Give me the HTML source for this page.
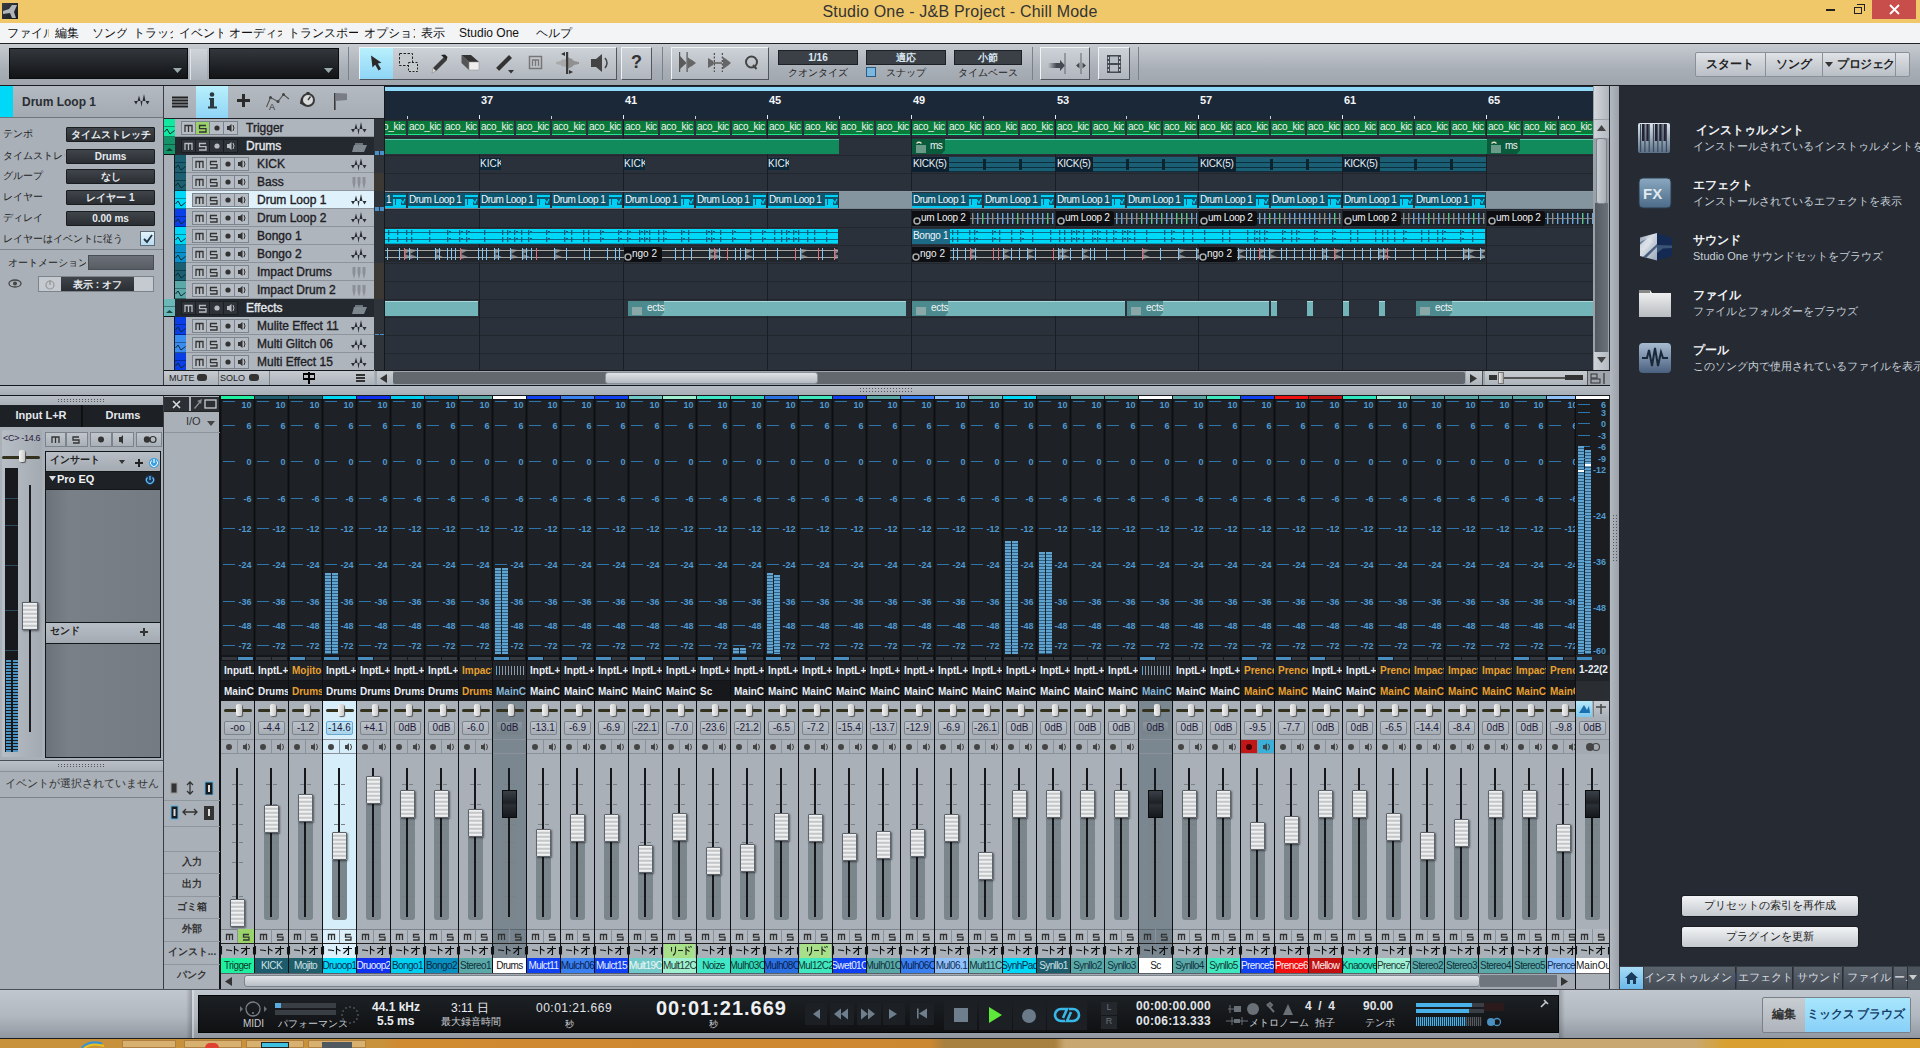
<!DOCTYPE html><html><head><meta charset="utf-8"><style>
*{margin:0;padding:0;box-sizing:border-box}
html,body{width:1920px;height:1048px;overflow:hidden;background:#a9b0b8;font-family:"Liberation Sans",sans-serif;font-size:11px;color:#000}
div{position:absolute;white-space:nowrap}
.b{font-weight:bold}

.mb{background:repeating-linear-gradient(#62a4d0 0 2px,#2e5f84 2px 3px)}
.il{background:#202327;border-bottom:1px solid #121417}
.lt{font-size:10px;font-weight:bold;overflow:hidden;line-height:13px}
.pt{background:#33321f;border-radius:2px}
.ph{background:linear-gradient(90deg,#f4f4f4,#c8c8c8);border-radius:2px;box-shadow:1px 1px 1px #555}
.vb{border-radius:2px}
.vt{font-size:10px;color:#1e1a3a;text-align:center;line-height:12px}
.fs{background:#7b858c;border-radius:0 0 3px 3px}
.hl{background:repeating-linear-gradient(#f6f6f6 0px,#e0e0e0 2px,#a8aeb4 3px,#f0f0f0 4px);border:1px solid #5c636a;border-radius:1px;box-shadow:1px 1px 2px rgba(0,0,0,.5)}
.hd{background:linear-gradient(#3a4048,#1e2226 45%,#2a3036 55%,#15181b);border:1px solid #0a0c0e}
</style></head><body><div style="left:0px;top:0px;width:1920px;height:23px;background:#f0c86a"></div>
<div style="left:2px;top:3px;width:16px;height:16px;background:linear-gradient(135deg,#3a3f47,#16191d);"></div>
<svg style="position:absolute;left:2px;top:3px" width="16" height="16"><path d="M1 8 L7 6 L10 2 L15 2 L12 9 L14 15 L10 15 L8 10 L1 11Z" fill="#c8ccd0" opacity="0.85"/></svg>
<div style="left:0px;top:3px;width:1920px;font-size:16px;color:#333;text-align:center;letter-spacing:0.2px">Studio One - J&amp;B Project - Chill Mode</div>
<div style="left:1826px;top:9px;width:9px;height:2px;background:#222"></div>
<div style="left:1854px;top:7px;width:8px;height:7px;border:1px solid #222;background:#f0c86a"></div>
<div style="left:1857px;top:4px;width:8px;height:7px;border:1px solid #222;border-left:none;border-bottom:none"></div>
<div style="left:1872px;top:0px;width:44px;height:19px;background:#c74e4b"></div>
<svg style="position:absolute;left:1889px;top:4px" width="11" height="11"><path d="M1 1 L10 10 M10 1 L1 10" stroke="#fff" stroke-width="1.8"/></svg>
<div style="left:0px;top:23px;width:1920px;height:20px;background:#f3f4f6"></div>
<div style="left:7px;top:25px;font-size:12px;color:#111;line-height:16px;overflow:hidden;width:42px">ファイル</div>
<div style="left:55px;top:25px;font-size:12px;color:#111;line-height:16px;overflow:hidden;width:31px">編集</div>
<div style="left:92px;top:25px;font-size:12px;color:#111;line-height:16px;overflow:hidden;width:35px">ソング</div>
<div style="left:133px;top:25px;font-size:12px;color:#111;line-height:16px;overflow:hidden;width:40px">トラック</div>
<div style="left:179px;top:25px;font-size:12px;color:#111;line-height:16px;overflow:hidden;width:44px">イベント</div>
<div style="left:229px;top:25px;font-size:12px;color:#111;line-height:16px;overflow:hidden;width:53px">オーディオ</div>
<div style="left:288px;top:25px;font-size:12px;color:#111;line-height:16px;overflow:hidden;width:70px">トランスポート</div>
<div style="left:364px;top:25px;font-size:12px;color:#111;line-height:16px;overflow:hidden;width:51px">オプション</div>
<div style="left:421px;top:25px;font-size:12px;color:#111;line-height:16px;overflow:hidden;width:32px">表示</div>
<div style="left:459px;top:25px;font-size:12px;color:#111;line-height:16px;overflow:hidden;width:71px">Studio One</div>
<div style="left:536px;top:25px;font-size:12px;color:#111;line-height:16px;overflow:hidden;width:40px">ヘルプ</div>
<div style="left:0px;top:43px;width:1920px;height:1px;background:#202225"></div>
<div style="left:0px;top:44px;width:1920px;height:41px;background:linear-gradient(#c6cbd1,#a9afb7 60%,#9ea5ad)"></div>
<div style="left:0px;top:85px;width:1920px;height:1px;background:#1a1c1f"></div>
<div style="left:9px;top:48px;width:179px;height:31px;background:linear-gradient(#33373d,#121416);border:1px solid #0b0c0e"></div>
<svg style="position:absolute;left:173px;top:68px" width="9" height="5"><path d="M0 0H9L4.5 5Z" fill="#9aa"/></svg>
<div style="left:209px;top:48px;width:130px;height:31px;background:linear-gradient(#33373d,#121416);border:1px solid #0b0c0e"></div>
<svg style="position:absolute;left:324px;top:68px" width="9" height="5"><path d="M0 0H9L4.5 5Z" fill="#9aa"/></svg>
<div style="left:190px;top:49px;width:17px;height:31px;background:linear-gradient(#cfd4da,#aab1b8);border-left:1px solid #e0e4e8"></div>
<div style="left:348px;top:47px;width:1px;height:33px;background:#7b8189"></div>
<div style="left:359px;top:47px;width:258px;height:33px;background:linear-gradient(#cdd2d8,#b0b6bd);border:1px solid;border-color:#f0f2f4 #50565c #50565c #f0f2f4"></div>
<div style="left:360px;top:48px;width:33px;height:31px;background:linear-gradient(#b8f0fc,#8fd4f6)"></div>
<div style="left:621px;top:47px;width:31px;height:33px;background:linear-gradient(#cdd2d8,#b0b6bd);border:1px solid;border-color:#f0f2f4 #50565c #50565c #f0f2f4"></div>
<div style="left:621px;top:52px;width:31px;font-size:18px;font-weight:bold;color:#333;text-align:center">?</div>
<div style="left:662px;top:47px;width:1px;height:33px;background:#7b8189"></div>
<div style="left:671px;top:47px;width:98px;height:33px;background:linear-gradient(#cdd2d8,#b0b6bd);border:1px solid;border-color:#f0f2f4 #50565c #50565c #f0f2f4"></div>

<svg style="position:absolute;left:360px;top:48px" width="260" height="31">
<path d="M11 7.5 L12.5 19.5 L15.2 16.8 L18.5 22.5 L21 21 L17.8 15.5 L21.5 14.8Z" fill="#2a2a2a"/>
<rect x="39.5" y="5.5" width="13" height="12" fill="#c4c9ce" stroke="#222" stroke-dasharray="2.5 1.5"/>
<rect x="48.5" y="14.5" width="9" height="9" fill="#c4c9ce" stroke="#222" stroke-dasharray="2 1.5"/>
<path d="M73 20 L84 9 L87 12 L76 23Z" fill="#3a3a3a"/><path d="M81 7 L85 6.5 L87.5 9 L86.5 12Z" fill="#222"/><path d="M73 20 L76 23 L72 25Z" fill="#ddd" stroke="#888" stroke-width="0.6"/>
<path d="M101.5 7 L111 7 L119 14 L109 14Z" fill="#333"/><path d="M101.5 7 L109 14 L109 22 L101.5 15Z" fill="#555"/><path d="M109 14 L119 14 L119 22 L109 22Z" fill="#eee" stroke="#999" stroke-width="0.6"/>
<path d="M136 20 L149 7 L152 10 L139 23Z" fill="#333"/><path d="M136 20 L139 23 L135.5 24Z" fill="#bbb"/><path d="M148 22 L154 22 L151 25.5Z" fill="#333"/>
<rect x="169.5" y="8.5" width="12" height="12" fill="none" stroke="#777" stroke-width="1.5"/><path d="M172.5 18 V12 H178.5 V18 M175.5 12 V18" stroke="#777" stroke-width="1.3" fill="none"/>
<path d="M196 14 L201 13 L201 17 L196 16Z" fill="#aaa"/><path d="M201 12 L206 11 L206 19 L201 18Z" fill="#a8a8a8"/><path d="M207 9 L212 11 L214 13 L219 14 L219 16 L214 17 L212 19 L207 21Z" fill="#909090"/><rect x="206" y="4" width="2.2" height="22" fill="#3a3a3a"/><path d="M205 4 L201 6 L205 8Z" fill="#333"/><path d="M209 22 L213 24 L209 26Z" fill="#333"/>
<path d="M231 11 L236 11 L242 6 L242 24 L236 19 L231 19Z" fill="#444"/><path d="M245 10 Q249 15 245 20" stroke="#444" stroke-width="1.5" fill="none"/>
</svg>
<svg style="position:absolute;left:671px;top:48px" width="100" height="31">
<rect x="8" y="4" width="1.2" height="20" fill="#555"/><rect x="15.5" y="4" width="1.2" height="20" fill="#555"/>
<path d="M9 8 L15.5 15 L9 21Z" fill="#5a5a5a"/><path d="M16.5 9 L19 11 L21 12 L23 13.5 L25 15 L23 16.5 L21 18 L19 19 L16.5 21Z" fill="#666"/>
<path d="M37 10 L42 13 L42 17 L37 20Z" fill="#666"/><rect x="42" y="14" width="9" height="2" fill="#777"/>
<path d="M43.3 5 V24 M51.3 5 V24" stroke="#333" stroke-width="1" stroke-dasharray="2 1.5"/>
<path d="M52 9 L55 11 L57 12.5 L60 15 L57 17.5 L55 19 L52 21Z" fill="#666"/>
<circle cx="80.5" cy="14" r="5.5" fill="none" stroke="#444" stroke-width="2"/><path d="M82 17 L85.5 21" stroke="#444" stroke-width="2"/>
</svg>

<div style="left:778px;top:50px;width:80px;height:15px;background:#3b4047;border:1px solid #1d2024"></div>
<div style="left:778px;top:50px;width:80px;color:#dce8f4;font-weight:bold;font-size:10px;text-align:center;line-height:15px">1/16</div>
<div style="left:778px;top:66px;width:80px;color:#222;font-size:10px;text-align:center">クオンタイズ</div>
<div style="left:866px;top:50px;width:80px;height:15px;background:#3b4047;border:1px solid #1d2024"></div>
<div style="left:866px;top:50px;width:80px;color:#dce8f4;font-weight:bold;font-size:10px;text-align:center;line-height:15px">適応</div>
<div style="left:866px;top:66px;width:80px;color:#222;font-size:10px;text-align:center">スナップ</div>
<div style="left:954px;top:50px;width:68px;height:15px;background:#3b4047;border:1px solid #1d2024"></div>
<div style="left:954px;top:50px;width:68px;color:#dce8f4;font-weight:bold;font-size:10px;text-align:center;line-height:15px">小節</div>
<div style="left:954px;top:66px;width:68px;color:#222;font-size:10px;text-align:center">タイムベース</div>
<div style="left:866px;top:67px;width:10px;height:10px;background:#7ab8e0;border:1px solid #2a5a80"></div>
<div style="left:1032px;top:47px;width:1px;height:33px;background:#7b8189"></div>
<div style="left:1040px;top:47px;width:50px;height:33px;background:linear-gradient(#cdd2d8,#b0b6bd);border:1px solid;border-color:#f0f2f4 #50565c #50565c #f0f2f4"></div>
<svg style="position:absolute;left:1040px;top:48px" width="50" height="31"><defs><linearGradient id="ga" x1="0" x2="1"><stop offset="0" stop-color="#454a52" stop-opacity="0"/><stop offset="0.6" stop-color="#454a52"/></linearGradient></defs><rect x="8" y="15" width="14" height="5" fill="url(#ga)"/><path d="M20 12 L25 17.5 L20 23Z" fill="#454a52"/><rect x="24.5" y="5" width="1" height="21" fill="#666"/><rect x="40.5" y="5" width="1" height="21" fill="#666"/><path d="M36 17.5 L39.5 14.5 L39.5 20.5Z M42.5 14.5 L46 17.5 L42.5 20.5Z" fill="#454a52"/></svg>
<div style="left:1098px;top:47px;width:32px;height:33px;background:linear-gradient(#cdd2d8,#b0b6bd);border:1px solid;border-color:#f0f2f4 #50565c #50565c #f0f2f4"></div>
<svg style="position:absolute;left:1098px;top:48px" width="32" height="31"><rect x="9" y="7" width="14" height="18" fill="#444a50"/><rect x="12" y="8.5" width="8" height="6.5" fill="#b8bec5"/><rect x="12" y="17" width="8" height="6.5" fill="#b8bec5"/><g fill="#c8ccd2"><rect x="9.8" y="9" width="1.2" height="2"/><rect x="9.8" y="13" width="1.2" height="2"/><rect x="9.8" y="17" width="1.2" height="2"/><rect x="9.8" y="21" width="1.2" height="2"/><rect x="21" y="9" width="1.2" height="2"/><rect x="21" y="13" width="1.2" height="2"/><rect x="21" y="17" width="1.2" height="2"/><rect x="21" y="21" width="1.2" height="2"/></g></svg>
<div style="left:1138px;top:47px;width:1px;height:33px;background:#7b8189"></div>
<div style="left:1695px;top:52px;width:215px;height:25px;background:linear-gradient(#dfe2e6,#b9bfc6);border:1px solid #8a9098;border-radius:2px"></div>
<div style="left:1765px;top:52px;width:1px;height:25px;background:#8a9098"></div>
<div style="left:1822px;top:52px;width:1px;height:25px;background:#8a9098"></div>
<div style="left:1895px;top:52px;width:1px;height:25px;background:#8a9098"></div>
<div style="left:1695px;top:56px;width:70px;font-size:12px;font-weight:bold;color:#222;text-align:center">スタート</div>
<div style="left:1766px;top:56px;width:56px;font-size:12px;font-weight:bold;color:#222;text-align:center">ソング</div>
<div style="left:1837px;top:56px;width:58px;font-size:12px;font-weight:bold;color:#222;overflow:hidden;letter-spacing:-0.5px">プロジェクト</div>
<svg style="position:absolute;left:1825px;top:62px" width="8" height="5"><path d="M0 0H8L4 5Z" fill="#333"/></svg>
<div style="left:0px;top:86px;width:164px;height:307px;background:#a9b0b8"></div>
<div style="left:0px;top:86px;width:13px;height:31px;background:#00d8f8"></div>
<div style="left:13px;top:86px;width:151px;height:31px;background:linear-gradient(#b3bac2,#a3aab2)"></div>
<div style="left:22px;top:95px;font-size:12px;font-weight:bold;color:#2a2d31">Drum Loop 1</div>
<svg style="position:absolute;left:133px;top:93px" width="18" height="15"><path d="M1 8 L5 8 L3 11.5Z M4.5 8 L6 2.5 L7.5 8Z M7.5 8 L8.5 14 L9.5 8Z M9.5 8 L11 1 L12.5 8Z M12.5 8 L16.5 8 L14.5 11.5Z" fill="#2a2e33"/></svg>
<div style="left:0px;top:117px;width:164px;height:1px;background:#6f767e"></div>
<div style="left:3px;top:127px;font-size:10px;color:#222;width:62px;overflow:hidden">テンポ</div>
<div style="left:66px;top:127px;width:89px;height:15px;background:linear-gradient(#40454b,#2a2e33);border:1px solid #1a1d20;border-radius:1px"></div>
<div style="left:66px;top:128px;width:89px;font-size:10px;font-weight:bold;color:#e6eaee;text-align:center;line-height:13px">タイムストレッチ</div>
<div style="left:3px;top:149px;font-size:10px;color:#222;width:62px;overflow:hidden">タイムストレッチ</div>
<div style="left:66px;top:149px;width:89px;height:15px;background:linear-gradient(#40454b,#2a2e33);border:1px solid #1a1d20;border-radius:1px"></div>
<div style="left:66px;top:150px;width:89px;font-size:10px;font-weight:bold;color:#e6eaee;text-align:center;line-height:13px">Drums</div>
<div style="left:3px;top:169px;font-size:10px;color:#222;width:62px;overflow:hidden">グループ</div>
<div style="left:66px;top:169px;width:89px;height:15px;background:linear-gradient(#40454b,#2a2e33);border:1px solid #1a1d20;border-radius:1px"></div>
<div style="left:66px;top:170px;width:89px;font-size:10px;font-weight:bold;color:#e6eaee;text-align:center;line-height:13px">なし</div>
<div style="left:3px;top:190px;font-size:10px;color:#222;width:62px;overflow:hidden">レイヤー</div>
<div style="left:66px;top:190px;width:89px;height:15px;background:linear-gradient(#40454b,#2a2e33);border:1px solid #1a1d20;border-radius:1px"></div>
<div style="left:66px;top:191px;width:89px;font-size:10px;font-weight:bold;color:#e6eaee;text-align:center;line-height:13px">レイヤー 1</div>
<div style="left:3px;top:211px;font-size:10px;color:#222;width:62px;overflow:hidden">ディレイ</div>
<div style="left:66px;top:211px;width:89px;height:15px;background:linear-gradient(#40454b,#2a2e33);border:1px solid #1a1d20;border-radius:1px"></div>
<div style="left:66px;top:212px;width:89px;font-size:10px;font-weight:bold;color:#e6eaee;text-align:center;line-height:13px">0.00 ms</div>
<div style="left:3px;top:232px;font-size:10px;color:#222;width:130px;overflow:hidden">レイヤーはイベントに従う</div>
<div style="left:140px;top:231px;width:15px;height:15px;background:linear-gradient(#e4f4fc,#b8dcf0);border:1px solid #5a6a78"></div>
<svg style="position:absolute;left:142px;top:233px" width="12" height="11"><path d="M2 6 L5 9 L10 2" stroke="#234" stroke-width="1.8" fill="none"/></svg>
<div style="left:0px;top:249px;width:164px;height:1px;background:#7d848c"></div>
<div style="left:8px;top:256px;font-size:10px;color:#222;width:78px;overflow:hidden">オートメーション</div>
<div style="left:88px;top:255px;width:66px;height:15px;background:linear-gradient(#6b7178,#575c62);border:1px solid #4a4f55"></div>
<svg style="position:absolute;left:8px;top:279px" width="14" height="9"><ellipse cx="7" cy="4.5" rx="6" ry="3.5" fill="none" stroke="#444" stroke-width="1.3"/><circle cx="7" cy="4.5" r="2" fill="#444"/></svg>
<div style="left:38px;top:276px;width:116px;height:16px;background:#c5cad0;border:1px solid #7c838a"></div>
<div style="left:61px;top:277px;width:73px;height:14px;background:linear-gradient(#40454b,#2a2e33)"></div>
<div style="left:61px;top:278px;width:73px;font-size:10px;font-weight:bold;color:#e6eaee;text-align:center">表示 : オフ</div>
<svg style="position:absolute;left:44px;top:279px" width="12" height="11"><circle cx="6" cy="6" r="4" fill="none" stroke="#999" stroke-width="1.2"/><rect x="5.3" y="1" width="1.4" height="5" fill="#999"/></svg>
<div style="left:163px;top:86px;width:1px;height:307px;background:#3a3e44"></div>
<div style="left:164px;top:86px;width:220px;height:32px;background:linear-gradient(#b3bac2,#a6adb5)"></div>
<div style="left:196px;top:86px;width:32px;height:32px;background:linear-gradient(#b8f0fc,#8fd4f6)"></div>
<svg style="position:absolute;left:164px;top:86px" width="220" height="32">
<rect x="8" y="10.5" width="16" height="2" fill="#222"/><rect x="8" y="13.5" width="16" height="2" fill="#222"/><rect x="8" y="16.5" width="16" height="2" fill="#222"/><rect x="8" y="19.5" width="16" height="2" fill="#222"/>
<circle cx="48" cy="8.5" r="2.3" fill="#2a3a40"/><rect x="46" y="12" width="4" height="9" fill="#2a3a40"/><rect x="44" y="20.5" width="9" height="2" fill="#2a3a40"/><rect x="45" y="12" width="3" height="1.5" fill="#2a3a40"/>
<rect x="73" y="13" width="13" height="3" fill="#2a2a2a"/><rect x="78" y="8" width="3" height="13" fill="#2a2a2a"/>
<path d="M102.5 21 L106.5 11.5 L114 15.5 L119.5 8.5 L125 13" stroke="#555" stroke-width="1.1" fill="none"/><circle cx="106.5" cy="11.5" r="1.5" fill="#444"/><circle cx="114" cy="15.5" r="1.5" fill="#444"/><circle cx="119.5" cy="8.5" r="1.5" fill="#444"/><text x="105" y="24" font-size="9" fill="#333" font-family="Liberation Sans">A</text>
<circle cx="144" cy="14" r="6" fill="#d8dadc" stroke="#3a3a3a" stroke-width="2"/><path d="M144 14 L146.5 10.5" stroke="#333" stroke-width="1.3"/><rect x="142.5" y="6" width="3" height="2" fill="#333"/><path d="M138 12 L137 17 L141 19" stroke="#333" stroke-width="2" fill="none"/>
<rect x="170" y="7" width="1.6" height="17" fill="#3a3a3a"/><path d="M171.5 7 L183 7.5 L183 14 L171.5 15Z" fill="#7a7e84"/>
</svg>
<div style="left:164px;top:118px;width:220px;height:1px;background:#1e2125"></div>
<div style="left:164px;top:119px;width:11px;height:251px;background:#a9b0b8"></div>
<div style="left:164px;top:119px;width:11px;height:18px;background:#14e8a0;border-bottom:1px solid rgba(0,0,0,.4)"></div>
<div style="left:164px;top:126px;width:11px;height:1px;background:rgba(0,0,0,.35)"></div>
<svg style="position:absolute;left:164px;top:127px" width="11" height="9"><path d="M0.5 5 L3 2 L6 7 L10.5 3.5" stroke="#0d2a30" stroke-width="1" fill="none"/></svg>
<div style="left:175px;top:119px;width:199px;height:18px;background:#aeb5bd;border-bottom:1px solid #8c939a"></div>
<div style="left:181px;top:121px;width:15px;height:14px;background:#b6bcc3;border:1px solid #7c838a"></div>
<div style="left:195px;top:121px;width:15px;height:14px;background:#9ad36a;border:1px solid #7c838a"></div>
<div style="left:209px;top:121px;width:15px;height:14px;background:#b6bcc3;border:1px solid #7c838a"></div>
<div style="left:223px;top:121px;width:15px;height:14px;background:#b6bcc3;border:1px solid #7c838a"></div>
<svg style="position:absolute;left:181px;top:121px" width="58" height="14"><path d="M4 11 V4.5 H11 V11 M7.5 4.5 V11" stroke="#333" stroke-width="1.3" fill="none"/><path d="M25 4.5 H18.5 V7.7 H25 V11 H18" stroke="#333" stroke-width="1.3" fill="none"/><circle cx="36" cy="7" r="2.6" fill="#333"/><path d="M46 5 L48 5 L50.5 3 L50.5 11 L48 9 L46 9Z" fill="#333"/><path d="M52 4 Q54 7 52 10" stroke="#333" stroke-width="1" fill="none"/></svg>
<div style="left:246px;top:121px;font-size:12px;color:#1e2024;-webkit-text-stroke:0.35px #1e2024;line-height:14px">Trigger</div>
<svg style="position:absolute;left:350px;top:121px" width="18" height="15"><path d="M1 8 L5 8 L3 11.5Z M4.5 8 L6 2.5 L7.5 8Z M7.5 8 L8.5 14 L9.5 8Z M9.5 8 L11 1 L12.5 8Z M12.5 8 L16.5 8 L14.5 11.5Z" fill="#2a2e33"/></svg>
<div style="left:164px;top:137px;width:11px;height:18px;background:#17936a;border-bottom:1px solid #0c1a14"></div>
<div style="left:164px;top:144px;width:11px;height:1px;background:rgba(0,0,0,.35)"></div>
<svg style="position:absolute;left:164px;top:145px" width="11" height="9"><path d="M2 6 L5.5 3 L9 6Z" fill="#0a2a20" opacity="0.8"/></svg>
<div style="left:175px;top:137px;width:209px;height:18px;background:#24282f"></div>
<div style="left:181px;top:139px;width:15px;height:14px;background:#2e3239;border:1px solid #1a1d21"></div>
<div style="left:195px;top:139px;width:15px;height:14px;background:#2e3239;border:1px solid #1a1d21"></div>
<div style="left:209px;top:139px;width:15px;height:14px;background:#2e3239;border:1px solid #1a1d21"></div>
<div style="left:223px;top:139px;width:15px;height:14px;background:#2e3239;border:1px solid #1a1d21"></div>
<svg style="position:absolute;left:181px;top:139px" width="58" height="14"><path d="M4 11 V4.5 H11 V11 M7.5 4.5 V11" stroke="#b8bcc0" stroke-width="1.3" fill="none"/><path d="M25 4.5 H18.5 V7.7 H25 V11 H18" stroke="#b8bcc0" stroke-width="1.3" fill="none"/><circle cx="36" cy="7" r="2.6" fill="#b8bcc0"/><path d="M46 5 L48 5 L50.5 3 L50.5 11 L48 9 L46 9Z" fill="#b8bcc0"/><path d="M52 4 Q54 7 52 10" stroke="#b8bcc0" stroke-width="1" fill="none"/></svg>
<div style="left:246px;top:139px;font-size:12px;color:#e4e8ec;-webkit-text-stroke:0.35px #e4e8ec;line-height:14px">Drums</div>
<svg style="position:absolute;left:351px;top:141px" width="18" height="12"><path d="M4 2 H12 V4 H4Z" fill="#6c747c"/><path d="M3 4 H16 L13 11 H1Z" fill="#7e868e"/></svg>
<div style="left:175px;top:155px;width:11px;height:18px;background:#1b5f70;border-bottom:1px solid rgba(0,0,0,.4)"></div>
<div style="left:175px;top:162px;width:11px;height:1px;background:rgba(0,0,0,.35)"></div>
<svg style="position:absolute;left:175px;top:163px" width="11" height="9"><path d="M0.5 5 L3 2 L6 7 L10.5 3.5" stroke="#0d2a30" stroke-width="1" fill="none"/></svg>
<div style="left:174px;top:155px;width:1px;height:18px;background:#15181c"></div>
<div style="left:186px;top:155px;width:188px;height:18px;background:#aeb5bd;border-bottom:1px solid #8c939a"></div>
<div style="left:192px;top:157px;width:15px;height:14px;background:#b6bcc3;border:1px solid #7c838a"></div>
<div style="left:206px;top:157px;width:15px;height:14px;background:#b6bcc3;border:1px solid #7c838a"></div>
<div style="left:220px;top:157px;width:15px;height:14px;background:#b6bcc3;border:1px solid #7c838a"></div>
<div style="left:234px;top:157px;width:15px;height:14px;background:#b6bcc3;border:1px solid #7c838a"></div>
<svg style="position:absolute;left:192px;top:157px" width="58" height="14"><path d="M4 11 V4.5 H11 V11 M7.5 4.5 V11" stroke="#333" stroke-width="1.3" fill="none"/><path d="M25 4.5 H18.5 V7.7 H25 V11 H18" stroke="#333" stroke-width="1.3" fill="none"/><circle cx="36" cy="7" r="2.6" fill="#333"/><path d="M46 5 L48 5 L50.5 3 L50.5 11 L48 9 L46 9Z" fill="#333"/><path d="M52 4 Q54 7 52 10" stroke="#333" stroke-width="1" fill="none"/></svg>
<div style="left:257px;top:157px;font-size:12px;color:#1e2024;-webkit-text-stroke:0.35px #1e2024;line-height:14px">KICK</div>
<svg style="position:absolute;left:350px;top:157px" width="18" height="15"><path d="M1 8 L5 8 L3 11.5Z M4.5 8 L6 2.5 L7.5 8Z M7.5 8 L8.5 14 L9.5 8Z M9.5 8 L11 1 L12.5 8Z M12.5 8 L16.5 8 L14.5 11.5Z" fill="#2a2e33"/></svg>
<div style="left:175px;top:173px;width:11px;height:18px;background:#1b5f70;border-bottom:1px solid rgba(0,0,0,.4)"></div>
<div style="left:175px;top:180px;width:11px;height:1px;background:rgba(0,0,0,.35)"></div>
<svg style="position:absolute;left:175px;top:181px" width="11" height="9"><path d="M0.5 5 L3 2 L6 7 L10.5 3.5" stroke="#0d2a30" stroke-width="1" fill="none"/></svg>
<div style="left:174px;top:173px;width:1px;height:18px;background:#15181c"></div>
<div style="left:186px;top:173px;width:188px;height:18px;background:#aeb5bd;border-bottom:1px solid #8c939a"></div>
<div style="left:192px;top:175px;width:15px;height:14px;background:#b6bcc3;border:1px solid #7c838a"></div>
<div style="left:206px;top:175px;width:15px;height:14px;background:#b6bcc3;border:1px solid #7c838a"></div>
<div style="left:220px;top:175px;width:15px;height:14px;background:#b6bcc3;border:1px solid #7c838a"></div>
<div style="left:234px;top:175px;width:15px;height:14px;background:#b6bcc3;border:1px solid #7c838a"></div>
<svg style="position:absolute;left:192px;top:175px" width="58" height="14"><path d="M4 11 V4.5 H11 V11 M7.5 4.5 V11" stroke="#333" stroke-width="1.3" fill="none"/><path d="M25 4.5 H18.5 V7.7 H25 V11 H18" stroke="#333" stroke-width="1.3" fill="none"/><circle cx="36" cy="7" r="2.6" fill="#333"/><path d="M46 5 L48 5 L50.5 3 L50.5 11 L48 9 L46 9Z" fill="#333"/><path d="M52 4 Q54 7 52 10" stroke="#333" stroke-width="1" fill="none"/></svg>
<div style="left:257px;top:175px;font-size:12px;color:#1e2024;-webkit-text-stroke:0.35px #1e2024;line-height:14px">Bass</div>
<svg style="position:absolute;left:351px;top:176px" width="18" height="14"><path d="M1.5 1 H4.5 V7 L3 13 L1.5 7Z M6.5 1 H9.5 V7 L8 13 L6.5 7Z M11.5 1 H14.5 V7 L13 13 L11.5 7Z" fill="#8a9096"/></svg>
<div style="left:175px;top:191px;width:11px;height:18px;background:#00d8f8;border-bottom:1px solid rgba(0,0,0,.4)"></div>
<div style="left:175px;top:198px;width:11px;height:1px;background:rgba(0,0,0,.35)"></div>
<svg style="position:absolute;left:175px;top:199px" width="11" height="9"><path d="M0.5 5 L3 2 L6 7 L10.5 3.5" stroke="#0d2a30" stroke-width="1" fill="none"/></svg>
<div style="left:174px;top:191px;width:1px;height:18px;background:#15181c"></div>
<div style="left:186px;top:191px;width:188px;height:18px;background:#dff2fb;border-bottom:1px solid #8c939a"></div>
<div style="left:192px;top:193px;width:15px;height:14px;background:#b6bcc3;border:1px solid #7c838a"></div>
<div style="left:206px;top:193px;width:15px;height:14px;background:#b6bcc3;border:1px solid #7c838a"></div>
<div style="left:220px;top:193px;width:15px;height:14px;background:#b6bcc3;border:1px solid #7c838a"></div>
<div style="left:234px;top:193px;width:15px;height:14px;background:#b6bcc3;border:1px solid #7c838a"></div>
<svg style="position:absolute;left:192px;top:193px" width="58" height="14"><path d="M4 11 V4.5 H11 V11 M7.5 4.5 V11" stroke="#333" stroke-width="1.3" fill="none"/><path d="M25 4.5 H18.5 V7.7 H25 V11 H18" stroke="#333" stroke-width="1.3" fill="none"/><circle cx="36" cy="7" r="2.6" fill="#333"/><path d="M46 5 L48 5 L50.5 3 L50.5 11 L48 9 L46 9Z" fill="#333"/><path d="M52 4 Q54 7 52 10" stroke="#333" stroke-width="1" fill="none"/></svg>
<div style="left:257px;top:193px;font-size:12px;color:#1e2024;-webkit-text-stroke:0.35px #1e2024;line-height:14px">Drum Loop 1</div>
<svg style="position:absolute;left:350px;top:193px" width="18" height="15"><path d="M1 8 L5 8 L3 11.5Z M4.5 8 L6 2.5 L7.5 8Z M7.5 8 L8.5 14 L9.5 8Z M9.5 8 L11 1 L12.5 8Z M12.5 8 L16.5 8 L14.5 11.5Z" fill="#2a2e33"/></svg>
<div style="left:175px;top:209px;width:11px;height:18px;background:#0a3fe8;border-bottom:1px solid rgba(0,0,0,.4)"></div>
<div style="left:175px;top:216px;width:11px;height:1px;background:rgba(0,0,0,.35)"></div>
<svg style="position:absolute;left:175px;top:217px" width="11" height="9"><path d="M0.5 5 L3 2 L6 7 L10.5 3.5" stroke="#0d2a30" stroke-width="1" fill="none"/></svg>
<div style="left:174px;top:209px;width:1px;height:18px;background:#15181c"></div>
<div style="left:186px;top:209px;width:188px;height:18px;background:#aeb5bd;border-bottom:1px solid #8c939a"></div>
<div style="left:192px;top:211px;width:15px;height:14px;background:#b6bcc3;border:1px solid #7c838a"></div>
<div style="left:206px;top:211px;width:15px;height:14px;background:#b6bcc3;border:1px solid #7c838a"></div>
<div style="left:220px;top:211px;width:15px;height:14px;background:#b6bcc3;border:1px solid #7c838a"></div>
<div style="left:234px;top:211px;width:15px;height:14px;background:#b6bcc3;border:1px solid #7c838a"></div>
<svg style="position:absolute;left:192px;top:211px" width="58" height="14"><path d="M4 11 V4.5 H11 V11 M7.5 4.5 V11" stroke="#333" stroke-width="1.3" fill="none"/><path d="M25 4.5 H18.5 V7.7 H25 V11 H18" stroke="#333" stroke-width="1.3" fill="none"/><circle cx="36" cy="7" r="2.6" fill="#333"/><path d="M46 5 L48 5 L50.5 3 L50.5 11 L48 9 L46 9Z" fill="#333"/><path d="M52 4 Q54 7 52 10" stroke="#333" stroke-width="1" fill="none"/></svg>
<div style="left:257px;top:211px;font-size:12px;color:#1e2024;-webkit-text-stroke:0.35px #1e2024;line-height:14px">Drum Loop 2</div>
<svg style="position:absolute;left:350px;top:211px" width="18" height="15"><path d="M1 8 L5 8 L3 11.5Z M4.5 8 L6 2.5 L7.5 8Z M7.5 8 L8.5 14 L9.5 8Z M9.5 8 L11 1 L12.5 8Z M12.5 8 L16.5 8 L14.5 11.5Z" fill="#2a2e33"/></svg>
<div style="left:175px;top:227px;width:11px;height:18px;background:#00d8f8;border-bottom:1px solid rgba(0,0,0,.4)"></div>
<div style="left:175px;top:234px;width:11px;height:1px;background:rgba(0,0,0,.35)"></div>
<svg style="position:absolute;left:175px;top:235px" width="11" height="9"><path d="M0.5 5 L3 2 L6 7 L10.5 3.5" stroke="#0d2a30" stroke-width="1" fill="none"/></svg>
<div style="left:174px;top:227px;width:1px;height:18px;background:#15181c"></div>
<div style="left:186px;top:227px;width:188px;height:18px;background:#aeb5bd;border-bottom:1px solid #8c939a"></div>
<div style="left:192px;top:229px;width:15px;height:14px;background:#b6bcc3;border:1px solid #7c838a"></div>
<div style="left:206px;top:229px;width:15px;height:14px;background:#b6bcc3;border:1px solid #7c838a"></div>
<div style="left:220px;top:229px;width:15px;height:14px;background:#b6bcc3;border:1px solid #7c838a"></div>
<div style="left:234px;top:229px;width:15px;height:14px;background:#b6bcc3;border:1px solid #7c838a"></div>
<svg style="position:absolute;left:192px;top:229px" width="58" height="14"><path d="M4 11 V4.5 H11 V11 M7.5 4.5 V11" stroke="#333" stroke-width="1.3" fill="none"/><path d="M25 4.5 H18.5 V7.7 H25 V11 H18" stroke="#333" stroke-width="1.3" fill="none"/><circle cx="36" cy="7" r="2.6" fill="#333"/><path d="M46 5 L48 5 L50.5 3 L50.5 11 L48 9 L46 9Z" fill="#333"/><path d="M52 4 Q54 7 52 10" stroke="#333" stroke-width="1" fill="none"/></svg>
<div style="left:257px;top:229px;font-size:12px;color:#1e2024;-webkit-text-stroke:0.35px #1e2024;line-height:14px">Bongo 1</div>
<svg style="position:absolute;left:350px;top:229px" width="18" height="15"><path d="M1 8 L5 8 L3 11.5Z M4.5 8 L6 2.5 L7.5 8Z M7.5 8 L8.5 14 L9.5 8Z M9.5 8 L11 1 L12.5 8Z M12.5 8 L16.5 8 L14.5 11.5Z" fill="#2a2e33"/></svg>
<div style="left:175px;top:245px;width:11px;height:18px;background:#0a90c8;border-bottom:1px solid rgba(0,0,0,.4)"></div>
<div style="left:175px;top:252px;width:11px;height:1px;background:rgba(0,0,0,.35)"></div>
<svg style="position:absolute;left:175px;top:253px" width="11" height="9"><path d="M0.5 5 L3 2 L6 7 L10.5 3.5" stroke="#0d2a30" stroke-width="1" fill="none"/></svg>
<div style="left:174px;top:245px;width:1px;height:18px;background:#15181c"></div>
<div style="left:186px;top:245px;width:188px;height:18px;background:#aeb5bd;border-bottom:1px solid #8c939a"></div>
<div style="left:192px;top:247px;width:15px;height:14px;background:#b6bcc3;border:1px solid #7c838a"></div>
<div style="left:206px;top:247px;width:15px;height:14px;background:#b6bcc3;border:1px solid #7c838a"></div>
<div style="left:220px;top:247px;width:15px;height:14px;background:#b6bcc3;border:1px solid #7c838a"></div>
<div style="left:234px;top:247px;width:15px;height:14px;background:#b6bcc3;border:1px solid #7c838a"></div>
<svg style="position:absolute;left:192px;top:247px" width="58" height="14"><path d="M4 11 V4.5 H11 V11 M7.5 4.5 V11" stroke="#333" stroke-width="1.3" fill="none"/><path d="M25 4.5 H18.5 V7.7 H25 V11 H18" stroke="#333" stroke-width="1.3" fill="none"/><circle cx="36" cy="7" r="2.6" fill="#333"/><path d="M46 5 L48 5 L50.5 3 L50.5 11 L48 9 L46 9Z" fill="#333"/><path d="M52 4 Q54 7 52 10" stroke="#333" stroke-width="1" fill="none"/></svg>
<div style="left:257px;top:247px;font-size:12px;color:#1e2024;-webkit-text-stroke:0.35px #1e2024;line-height:14px">Bongo 2</div>
<svg style="position:absolute;left:350px;top:247px" width="18" height="15"><path d="M1 8 L5 8 L3 11.5Z M4.5 8 L6 2.5 L7.5 8Z M7.5 8 L8.5 14 L9.5 8Z M9.5 8 L11 1 L12.5 8Z M12.5 8 L16.5 8 L14.5 11.5Z" fill="#2a2e33"/></svg>
<div style="left:175px;top:263px;width:11px;height:18px;background:#1b5f70;border-bottom:1px solid rgba(0,0,0,.4)"></div>
<div style="left:175px;top:270px;width:11px;height:1px;background:rgba(0,0,0,.35)"></div>
<svg style="position:absolute;left:175px;top:271px" width="11" height="9"><path d="M0.5 5 L3 2 L6 7 L10.5 3.5" stroke="#0d2a30" stroke-width="1" fill="none"/></svg>
<div style="left:174px;top:263px;width:1px;height:18px;background:#15181c"></div>
<div style="left:186px;top:263px;width:188px;height:18px;background:#aeb5bd;border-bottom:1px solid #8c939a"></div>
<div style="left:192px;top:265px;width:15px;height:14px;background:#b6bcc3;border:1px solid #7c838a"></div>
<div style="left:206px;top:265px;width:15px;height:14px;background:#b6bcc3;border:1px solid #7c838a"></div>
<div style="left:220px;top:265px;width:15px;height:14px;background:#b6bcc3;border:1px solid #7c838a"></div>
<div style="left:234px;top:265px;width:15px;height:14px;background:#b6bcc3;border:1px solid #7c838a"></div>
<svg style="position:absolute;left:192px;top:265px" width="58" height="14"><path d="M4 11 V4.5 H11 V11 M7.5 4.5 V11" stroke="#333" stroke-width="1.3" fill="none"/><path d="M25 4.5 H18.5 V7.7 H25 V11 H18" stroke="#333" stroke-width="1.3" fill="none"/><circle cx="36" cy="7" r="2.6" fill="#333"/><path d="M46 5 L48 5 L50.5 3 L50.5 11 L48 9 L46 9Z" fill="#333"/><path d="M52 4 Q54 7 52 10" stroke="#333" stroke-width="1" fill="none"/></svg>
<div style="left:257px;top:265px;font-size:12px;color:#1e2024;-webkit-text-stroke:0.35px #1e2024;line-height:14px">Impact Drums</div>
<svg style="position:absolute;left:351px;top:266px" width="18" height="14"><path d="M1.5 1 H4.5 V7 L3 13 L1.5 7Z M6.5 1 H9.5 V7 L8 13 L6.5 7Z M11.5 1 H14.5 V7 L13 13 L11.5 7Z" fill="#8a9096"/></svg>
<div style="left:175px;top:281px;width:11px;height:18px;background:#5aa8a8;border-bottom:1px solid rgba(0,0,0,.4)"></div>
<div style="left:175px;top:288px;width:11px;height:1px;background:rgba(0,0,0,.35)"></div>
<svg style="position:absolute;left:175px;top:289px" width="11" height="9"><path d="M0.5 5 L3 2 L6 7 L10.5 3.5" stroke="#0d2a30" stroke-width="1" fill="none"/></svg>
<div style="left:174px;top:281px;width:1px;height:18px;background:#15181c"></div>
<div style="left:186px;top:281px;width:188px;height:18px;background:#aeb5bd;border-bottom:1px solid #8c939a"></div>
<div style="left:192px;top:283px;width:15px;height:14px;background:#b6bcc3;border:1px solid #7c838a"></div>
<div style="left:206px;top:283px;width:15px;height:14px;background:#b6bcc3;border:1px solid #7c838a"></div>
<div style="left:220px;top:283px;width:15px;height:14px;background:#b6bcc3;border:1px solid #7c838a"></div>
<div style="left:234px;top:283px;width:15px;height:14px;background:#b6bcc3;border:1px solid #7c838a"></div>
<svg style="position:absolute;left:192px;top:283px" width="58" height="14"><path d="M4 11 V4.5 H11 V11 M7.5 4.5 V11" stroke="#333" stroke-width="1.3" fill="none"/><path d="M25 4.5 H18.5 V7.7 H25 V11 H18" stroke="#333" stroke-width="1.3" fill="none"/><circle cx="36" cy="7" r="2.6" fill="#333"/><path d="M46 5 L48 5 L50.5 3 L50.5 11 L48 9 L46 9Z" fill="#333"/><path d="M52 4 Q54 7 52 10" stroke="#333" stroke-width="1" fill="none"/></svg>
<div style="left:257px;top:283px;font-size:12px;color:#1e2024;-webkit-text-stroke:0.35px #1e2024;line-height:14px">Impact Drum 2</div>
<svg style="position:absolute;left:351px;top:284px" width="18" height="14"><path d="M1.5 1 H4.5 V7 L3 13 L1.5 7Z M6.5 1 H9.5 V7 L8 13 L6.5 7Z M11.5 1 H14.5 V7 L13 13 L11.5 7Z" fill="#8a9096"/></svg>
<div style="left:164px;top:299px;width:11px;height:18px;background:#6ab8b8;border-bottom:1px solid #0c1a14"></div>
<div style="left:164px;top:306px;width:11px;height:1px;background:rgba(0,0,0,.35)"></div>
<svg style="position:absolute;left:164px;top:307px" width="11" height="9"><path d="M2 6 L5.5 3 L9 6Z" fill="#0a2a20" opacity="0.8"/></svg>
<div style="left:175px;top:299px;width:209px;height:18px;background:#24282f"></div>
<div style="left:181px;top:301px;width:15px;height:14px;background:#2e3239;border:1px solid #1a1d21"></div>
<div style="left:195px;top:301px;width:15px;height:14px;background:#2e3239;border:1px solid #1a1d21"></div>
<div style="left:209px;top:301px;width:15px;height:14px;background:#2e3239;border:1px solid #1a1d21"></div>
<div style="left:223px;top:301px;width:15px;height:14px;background:#2e3239;border:1px solid #1a1d21"></div>
<svg style="position:absolute;left:181px;top:301px" width="58" height="14"><path d="M4 11 V4.5 H11 V11 M7.5 4.5 V11" stroke="#b8bcc0" stroke-width="1.3" fill="none"/><path d="M25 4.5 H18.5 V7.7 H25 V11 H18" stroke="#b8bcc0" stroke-width="1.3" fill="none"/><circle cx="36" cy="7" r="2.6" fill="#b8bcc0"/><path d="M46 5 L48 5 L50.5 3 L50.5 11 L48 9 L46 9Z" fill="#b8bcc0"/><path d="M52 4 Q54 7 52 10" stroke="#b8bcc0" stroke-width="1" fill="none"/></svg>
<div style="left:246px;top:301px;font-size:12px;color:#e4e8ec;-webkit-text-stroke:0.35px #e4e8ec;line-height:14px">Effects</div>
<svg style="position:absolute;left:351px;top:303px" width="18" height="12"><path d="M4 2 H12 V4 H4Z" fill="#6c747c"/><path d="M3 4 H16 L13 11 H1Z" fill="#7e868e"/></svg>
<div style="left:175px;top:317px;width:11px;height:18px;background:#0a3fe8;border-bottom:1px solid rgba(0,0,0,.4)"></div>
<div style="left:175px;top:324px;width:11px;height:1px;background:rgba(0,0,0,.35)"></div>
<svg style="position:absolute;left:175px;top:325px" width="11" height="9"><path d="M0.5 5 L3 2 L6 7 L10.5 3.5" stroke="#0d2a30" stroke-width="1" fill="none"/></svg>
<div style="left:174px;top:317px;width:1px;height:18px;background:#15181c"></div>
<div style="left:186px;top:317px;width:188px;height:18px;background:#aeb5bd;border-bottom:1px solid #8c939a"></div>
<div style="left:192px;top:319px;width:15px;height:14px;background:#b6bcc3;border:1px solid #7c838a"></div>
<div style="left:206px;top:319px;width:15px;height:14px;background:#b6bcc3;border:1px solid #7c838a"></div>
<div style="left:220px;top:319px;width:15px;height:14px;background:#b6bcc3;border:1px solid #7c838a"></div>
<div style="left:234px;top:319px;width:15px;height:14px;background:#b6bcc3;border:1px solid #7c838a"></div>
<svg style="position:absolute;left:192px;top:319px" width="58" height="14"><path d="M4 11 V4.5 H11 V11 M7.5 4.5 V11" stroke="#333" stroke-width="1.3" fill="none"/><path d="M25 4.5 H18.5 V7.7 H25 V11 H18" stroke="#333" stroke-width="1.3" fill="none"/><circle cx="36" cy="7" r="2.6" fill="#333"/><path d="M46 5 L48 5 L50.5 3 L50.5 11 L48 9 L46 9Z" fill="#333"/><path d="M52 4 Q54 7 52 10" stroke="#333" stroke-width="1" fill="none"/></svg>
<div style="left:257px;top:319px;font-size:12px;color:#1e2024;-webkit-text-stroke:0.35px #1e2024;line-height:14px">Mulite Effect 11</div>
<svg style="position:absolute;left:350px;top:319px" width="18" height="15"><path d="M1 8 L5 8 L3 11.5Z M4.5 8 L6 2.5 L7.5 8Z M7.5 8 L8.5 14 L9.5 8Z M9.5 8 L11 1 L12.5 8Z M12.5 8 L16.5 8 L14.5 11.5Z" fill="#2a2e33"/></svg>
<div style="left:175px;top:335px;width:11px;height:18px;background:#3a8cf0;border-bottom:1px solid rgba(0,0,0,.4)"></div>
<div style="left:175px;top:342px;width:11px;height:1px;background:rgba(0,0,0,.35)"></div>
<svg style="position:absolute;left:175px;top:343px" width="11" height="9"><path d="M0.5 5 L3 2 L6 7 L10.5 3.5" stroke="#0d2a30" stroke-width="1" fill="none"/></svg>
<div style="left:174px;top:335px;width:1px;height:18px;background:#15181c"></div>
<div style="left:186px;top:335px;width:188px;height:18px;background:#aeb5bd;border-bottom:1px solid #8c939a"></div>
<div style="left:192px;top:337px;width:15px;height:14px;background:#b6bcc3;border:1px solid #7c838a"></div>
<div style="left:206px;top:337px;width:15px;height:14px;background:#b6bcc3;border:1px solid #7c838a"></div>
<div style="left:220px;top:337px;width:15px;height:14px;background:#b6bcc3;border:1px solid #7c838a"></div>
<div style="left:234px;top:337px;width:15px;height:14px;background:#b6bcc3;border:1px solid #7c838a"></div>
<svg style="position:absolute;left:192px;top:337px" width="58" height="14"><path d="M4 11 V4.5 H11 V11 M7.5 4.5 V11" stroke="#333" stroke-width="1.3" fill="none"/><path d="M25 4.5 H18.5 V7.7 H25 V11 H18" stroke="#333" stroke-width="1.3" fill="none"/><circle cx="36" cy="7" r="2.6" fill="#333"/><path d="M46 5 L48 5 L50.5 3 L50.5 11 L48 9 L46 9Z" fill="#333"/><path d="M52 4 Q54 7 52 10" stroke="#333" stroke-width="1" fill="none"/></svg>
<div style="left:257px;top:337px;font-size:12px;color:#1e2024;-webkit-text-stroke:0.35px #1e2024;line-height:14px">Multi Glitch 06</div>
<svg style="position:absolute;left:350px;top:337px" width="18" height="15"><path d="M1 8 L5 8 L3 11.5Z M4.5 8 L6 2.5 L7.5 8Z M7.5 8 L8.5 14 L9.5 8Z M9.5 8 L11 1 L12.5 8Z M12.5 8 L16.5 8 L14.5 11.5Z" fill="#2a2e33"/></svg>
<div style="left:175px;top:353px;width:11px;height:18px;background:#0a3fe8;border-bottom:1px solid rgba(0,0,0,.4)"></div>
<div style="left:175px;top:360px;width:11px;height:1px;background:rgba(0,0,0,.35)"></div>
<svg style="position:absolute;left:175px;top:361px" width="11" height="9"><path d="M0.5 5 L3 2 L6 7 L10.5 3.5" stroke="#0d2a30" stroke-width="1" fill="none"/></svg>
<div style="left:174px;top:353px;width:1px;height:18px;background:#15181c"></div>
<div style="left:186px;top:353px;width:188px;height:18px;background:#aeb5bd;border-bottom:1px solid #8c939a"></div>
<div style="left:192px;top:355px;width:15px;height:14px;background:#b6bcc3;border:1px solid #7c838a"></div>
<div style="left:206px;top:355px;width:15px;height:14px;background:#b6bcc3;border:1px solid #7c838a"></div>
<div style="left:220px;top:355px;width:15px;height:14px;background:#b6bcc3;border:1px solid #7c838a"></div>
<div style="left:234px;top:355px;width:15px;height:14px;background:#b6bcc3;border:1px solid #7c838a"></div>
<svg style="position:absolute;left:192px;top:355px" width="58" height="14"><path d="M4 11 V4.5 H11 V11 M7.5 4.5 V11" stroke="#333" stroke-width="1.3" fill="none"/><path d="M25 4.5 H18.5 V7.7 H25 V11 H18" stroke="#333" stroke-width="1.3" fill="none"/><circle cx="36" cy="7" r="2.6" fill="#333"/><path d="M46 5 L48 5 L50.5 3 L50.5 11 L48 9 L46 9Z" fill="#333"/><path d="M52 4 Q54 7 52 10" stroke="#333" stroke-width="1" fill="none"/></svg>
<div style="left:257px;top:355px;font-size:12px;color:#1e2024;-webkit-text-stroke:0.35px #1e2024;line-height:14px">Multi Effect 15</div>
<svg style="position:absolute;left:350px;top:355px" width="18" height="15"><path d="M1 8 L5 8 L3 11.5Z M4.5 8 L6 2.5 L7.5 8Z M7.5 8 L8.5 14 L9.5 8Z M9.5 8 L11 1 L12.5 8Z M12.5 8 L16.5 8 L14.5 11.5Z" fill="#2a2e33"/></svg>
<div style="left:374px;top:119px;width:11px;height:251px;background:#2f343b"></div>
<div style="left:374px;top:173px;width:11px;height:18px;background:#3c3833"></div>
<div style="left:374px;top:263px;width:11px;height:18px;background:#3c3833"></div>
<div style="left:374px;top:281px;width:11px;height:18px;background:#3c3833"></div>
<div style="left:384px;top:86px;width:1px;height:284px;background:#15181c"></div>
<div style="left:164px;top:370px;width:210px;height:1px;background:#15181c"></div>
<div style="left:164px;top:371px;width:210px;height:15px;background:linear-gradient(#c6cbd1,#a9b0b7)"></div>
<div style="left:169px;top:373px;font-size:9px;color:#222;font-family:"Liberation Mono",monospace">MUTE</div>
<div style="left:197px;top:374px;width:10px;height:7px;background:#333;border-radius:3px"></div>
<div style="left:218px;top:371px;width:1px;height:15px;background:#7d848c"></div>
<div style="left:220px;top:373px;font-size:9px;color:#222;font-family:"Liberation Mono",monospace">SOLO</div>
<div style="left:249px;top:374px;width:10px;height:7px;background:#333;border-radius:3px"></div>
<div style="left:269px;top:371px;width:1px;height:15px;background:#7d848c"></div>
<svg style="position:absolute;left:303px;top:372px" width="12" height="12"><rect x="0" y="2" width="12" height="5" fill="none" stroke="#000" stroke-width="2"/><rect x="5" y="0" width="2" height="12" fill="#000"/></svg>
<svg style="position:absolute;left:356px;top:374px" width="10" height="9"><rect x="0" y="0" width="9" height="2" fill="#333"/><rect x="0" y="3" width="9" height="2" fill="#333"/><rect x="0" y="6" width="9" height="2" fill="#333"/></svg>
<div style="left:375px;top:151px;width:4px;height:4px;background:#4a90c8"></div>
<div style="left:380px;top:151px;width:4px;height:4px;background:#4a90c8"></div>
<div style="left:375px;top:207px;width:4px;height:4px;background:#4a90c8"></div>
<div style="left:380px;top:207px;width:4px;height:4px;background:#4a90c8"></div>
<div style="left:375px;top:334px;width:4px;height:1px;background:#4a90c8"></div>
<div style="left:380px;top:334px;width:4px;height:1px;background:#4a90c8"></div>
<div style="left:385px;top:86px;width:1208px;height:33px;background:#1b2838"></div>
<div style="left:385px;top:87px;width:1208px;height:4px;background:#8fd8f8"></div>
<div style="left:407px;top:116px;width:1px;height:3px;background:#c8d0d8"></div>
<div style="left:479px;top:115px;width:1px;height:4px;background:#e8ecf0"></div>
<div style="left:481px;top:94px;font-size:11px;font-weight:bold;color:#f4f6f8">37</div>
<div style="left:551px;top:116px;width:1px;height:3px;background:#c8d0d8"></div>
<div style="left:623px;top:115px;width:1px;height:4px;background:#e8ecf0"></div>
<div style="left:625px;top:94px;font-size:11px;font-weight:bold;color:#f4f6f8">41</div>
<div style="left:695px;top:116px;width:1px;height:3px;background:#c8d0d8"></div>
<div style="left:767px;top:115px;width:1px;height:4px;background:#e8ecf0"></div>
<div style="left:769px;top:94px;font-size:11px;font-weight:bold;color:#f4f6f8">45</div>
<div style="left:839px;top:116px;width:1px;height:3px;background:#c8d0d8"></div>
<div style="left:911px;top:115px;width:1px;height:4px;background:#e8ecf0"></div>
<div style="left:913px;top:94px;font-size:11px;font-weight:bold;color:#f4f6f8">49</div>
<div style="left:983px;top:116px;width:1px;height:3px;background:#c8d0d8"></div>
<div style="left:1055px;top:115px;width:1px;height:4px;background:#e8ecf0"></div>
<div style="left:1057px;top:94px;font-size:11px;font-weight:bold;color:#f4f6f8">53</div>
<div style="left:1126px;top:116px;width:1px;height:3px;background:#c8d0d8"></div>
<div style="left:1198px;top:115px;width:1px;height:4px;background:#e8ecf0"></div>
<div style="left:1200px;top:94px;font-size:11px;font-weight:bold;color:#f4f6f8">57</div>
<div style="left:1270px;top:116px;width:1px;height:3px;background:#c8d0d8"></div>
<div style="left:1342px;top:115px;width:1px;height:4px;background:#e8ecf0"></div>
<div style="left:1344px;top:94px;font-size:11px;font-weight:bold;color:#f4f6f8">61</div>
<div style="left:1414px;top:116px;width:1px;height:3px;background:#c8d0d8"></div>
<div style="left:1486px;top:115px;width:1px;height:4px;background:#e8ecf0"></div>
<div style="left:1488px;top:94px;font-size:11px;font-weight:bold;color:#f4f6f8">65</div>
<div style="left:1558px;top:116px;width:1px;height:3px;background:#c8d0d8"></div>
<div style="left:385px;top:119px;width:1208px;height:251px;overflow:hidden;">
<div style="left:0px;top:0px;width:1208px;height:251px;background:#2b313b"></div>
<div style="left:0px;top:0px;width:1208px;height:1px;background:#22272e"></div>
<div style="left:0px;top:18px;width:1208px;height:1px;background:#22272e"></div>
<div style="left:0px;top:36px;width:1208px;height:1px;background:#22272e"></div>
<div style="left:0px;top:54px;width:1208px;height:1px;background:#22272e"></div>
<div style="left:0px;top:72px;width:1208px;height:1px;background:#22272e"></div>
<div style="left:0px;top:90px;width:1208px;height:1px;background:#22272e"></div>
<div style="left:0px;top:108px;width:1208px;height:1px;background:#22272e"></div>
<div style="left:0px;top:126px;width:1208px;height:1px;background:#22272e"></div>
<div style="left:0px;top:144px;width:1208px;height:1px;background:#22272e"></div>
<div style="left:0px;top:162px;width:1208px;height:1px;background:#22272e"></div>
<div style="left:0px;top:180px;width:1208px;height:1px;background:#22272e"></div>
<div style="left:0px;top:198px;width:1208px;height:1px;background:#22272e"></div>
<div style="left:0px;top:216px;width:1208px;height:1px;background:#22272e"></div>
<div style="left:0px;top:234px;width:1208px;height:1px;background:#22272e"></div>
<div style="left:94px;top:0px;width:1px;height:251px;background:#1a1e24"></div>
<div style="left:238px;top:0px;width:1px;height:251px;background:#1a1e24"></div>
<div style="left:382px;top:0px;width:1px;height:251px;background:#1a1e24"></div>
<div style="left:526px;top:0px;width:1px;height:251px;background:#1a1e24"></div>
<div style="left:670px;top:0px;width:1px;height:251px;background:#1a1e24"></div>
<div style="left:813px;top:0px;width:1px;height:251px;background:#1a1e24"></div>
<div style="left:957px;top:0px;width:1px;height:251px;background:#1a1e24"></div>
<div style="left:1101px;top:0px;width:1px;height:251px;background:#1a1e24"></div>
<div style="left:454px;top:73px;width:73px;height:17px;background:#8595a0"></div>
<div style="left:1101px;top:73px;width:107px;height:17px;background:#8595a0"></div>
<div style="left:-13px;top:2px;width:34px;height:14px;background:#0a7a3a;border-bottom:1px solid #20e890;overflow:hidden"></div>
<div style="left:-12px;top:2px;font-size:10px;letter-spacing:-0.3px;color:#f0f4f0;line-height:12px;width:32px;overflow:hidden">aco_kick</div>
<div style="left:23px;top:2px;width:34px;height:14px;background:#0a7a3a;border-bottom:1px solid #20e890;overflow:hidden"></div>
<div style="left:24px;top:2px;font-size:10px;letter-spacing:-0.3px;color:#f0f4f0;line-height:12px;width:32px;overflow:hidden">aco_kick</div>
<div style="left:59px;top:2px;width:34px;height:14px;background:#0a7a3a;border-bottom:1px solid #20e890;overflow:hidden"></div>
<div style="left:60px;top:2px;font-size:10px;letter-spacing:-0.3px;color:#f0f4f0;line-height:12px;width:32px;overflow:hidden">aco_kick</div>
<div style="left:95px;top:2px;width:34px;height:14px;background:#0a7a3a;border-bottom:1px solid #20e890;overflow:hidden"></div>
<div style="left:96px;top:2px;font-size:10px;letter-spacing:-0.3px;color:#f0f4f0;line-height:12px;width:32px;overflow:hidden">aco_kick</div>
<div style="left:131px;top:2px;width:34px;height:14px;background:#0a7a3a;border-bottom:1px solid #20e890;overflow:hidden"></div>
<div style="left:132px;top:2px;font-size:10px;letter-spacing:-0.3px;color:#f0f4f0;line-height:12px;width:32px;overflow:hidden">aco_kick</div>
<div style="left:167px;top:2px;width:34px;height:14px;background:#0a7a3a;border-bottom:1px solid #20e890;overflow:hidden"></div>
<div style="left:168px;top:2px;font-size:10px;letter-spacing:-0.3px;color:#f0f4f0;line-height:12px;width:32px;overflow:hidden">aco_kick</div>
<div style="left:203px;top:2px;width:34px;height:14px;background:#0a7a3a;border-bottom:1px solid #20e890;overflow:hidden"></div>
<div style="left:204px;top:2px;font-size:10px;letter-spacing:-0.3px;color:#f0f4f0;line-height:12px;width:32px;overflow:hidden">aco_kick</div>
<div style="left:239px;top:2px;width:34px;height:14px;background:#0a7a3a;border-bottom:1px solid #20e890;overflow:hidden"></div>
<div style="left:240px;top:2px;font-size:10px;letter-spacing:-0.3px;color:#f0f4f0;line-height:12px;width:32px;overflow:hidden">aco_kick</div>
<div style="left:275px;top:2px;width:34px;height:14px;background:#0a7a3a;border-bottom:1px solid #20e890;overflow:hidden"></div>
<div style="left:276px;top:2px;font-size:10px;letter-spacing:-0.3px;color:#f0f4f0;line-height:12px;width:32px;overflow:hidden">aco_kick</div>
<div style="left:311px;top:2px;width:34px;height:14px;background:#0a7a3a;border-bottom:1px solid #20e890;overflow:hidden"></div>
<div style="left:312px;top:2px;font-size:10px;letter-spacing:-0.3px;color:#f0f4f0;line-height:12px;width:32px;overflow:hidden">aco_kick</div>
<div style="left:347px;top:2px;width:34px;height:14px;background:#0a7a3a;border-bottom:1px solid #20e890;overflow:hidden"></div>
<div style="left:348px;top:2px;font-size:10px;letter-spacing:-0.3px;color:#f0f4f0;line-height:12px;width:32px;overflow:hidden">aco_kick</div>
<div style="left:383px;top:2px;width:34px;height:14px;background:#0a7a3a;border-bottom:1px solid #20e890;overflow:hidden"></div>
<div style="left:384px;top:2px;font-size:10px;letter-spacing:-0.3px;color:#f0f4f0;line-height:12px;width:32px;overflow:hidden">aco_kick</div>
<div style="left:419px;top:2px;width:34px;height:14px;background:#0a7a3a;border-bottom:1px solid #20e890;overflow:hidden"></div>
<div style="left:420px;top:2px;font-size:10px;letter-spacing:-0.3px;color:#f0f4f0;line-height:12px;width:32px;overflow:hidden">aco_kick</div>
<div style="left:455px;top:2px;width:34px;height:14px;background:#0a7a3a;border-bottom:1px solid #20e890;overflow:hidden"></div>
<div style="left:456px;top:2px;font-size:10px;letter-spacing:-0.3px;color:#f0f4f0;line-height:12px;width:32px;overflow:hidden">aco_kick</div>
<div style="left:491px;top:2px;width:34px;height:14px;background:#0a7a3a;border-bottom:1px solid #20e890;overflow:hidden"></div>
<div style="left:492px;top:2px;font-size:10px;letter-spacing:-0.3px;color:#f0f4f0;line-height:12px;width:32px;overflow:hidden">aco_kick</div>
<div style="left:527px;top:2px;width:34px;height:14px;background:#0a7a3a;border-bottom:1px solid #20e890;overflow:hidden"></div>
<div style="left:528px;top:2px;font-size:10px;letter-spacing:-0.3px;color:#f0f4f0;line-height:12px;width:32px;overflow:hidden">aco_kick</div>
<div style="left:563px;top:2px;width:34px;height:14px;background:#0a7a3a;border-bottom:1px solid #20e890;overflow:hidden"></div>
<div style="left:564px;top:2px;font-size:10px;letter-spacing:-0.3px;color:#f0f4f0;line-height:12px;width:32px;overflow:hidden">aco_kick</div>
<div style="left:599px;top:2px;width:34px;height:14px;background:#0a7a3a;border-bottom:1px solid #20e890;overflow:hidden"></div>
<div style="left:600px;top:2px;font-size:10px;letter-spacing:-0.3px;color:#f0f4f0;line-height:12px;width:32px;overflow:hidden">aco_kick</div>
<div style="left:635px;top:2px;width:34px;height:14px;background:#0a7a3a;border-bottom:1px solid #20e890;overflow:hidden"></div>
<div style="left:636px;top:2px;font-size:10px;letter-spacing:-0.3px;color:#f0f4f0;line-height:12px;width:32px;overflow:hidden">aco_kick</div>
<div style="left:671px;top:2px;width:34px;height:14px;background:#0a7a3a;border-bottom:1px solid #20e890;overflow:hidden"></div>
<div style="left:672px;top:2px;font-size:10px;letter-spacing:-0.3px;color:#f0f4f0;line-height:12px;width:32px;overflow:hidden">aco_kick</div>
<div style="left:707px;top:2px;width:33px;height:14px;background:#0a7a3a;border-bottom:1px solid #20e890;overflow:hidden"></div>
<div style="left:708px;top:2px;font-size:10px;letter-spacing:-0.3px;color:#f0f4f0;line-height:12px;width:31px;overflow:hidden">aco_kick</div>
<div style="left:742px;top:2px;width:34px;height:14px;background:#0a7a3a;border-bottom:1px solid #20e890;overflow:hidden"></div>
<div style="left:743px;top:2px;font-size:10px;letter-spacing:-0.3px;color:#f0f4f0;line-height:12px;width:32px;overflow:hidden">aco_kick</div>
<div style="left:778px;top:2px;width:34px;height:14px;background:#0a7a3a;border-bottom:1px solid #20e890;overflow:hidden"></div>
<div style="left:779px;top:2px;font-size:10px;letter-spacing:-0.3px;color:#f0f4f0;line-height:12px;width:32px;overflow:hidden">aco_kick</div>
<div style="left:814px;top:2px;width:34px;height:14px;background:#0a7a3a;border-bottom:1px solid #20e890;overflow:hidden"></div>
<div style="left:815px;top:2px;font-size:10px;letter-spacing:-0.3px;color:#f0f4f0;line-height:12px;width:32px;overflow:hidden">aco_kick</div>
<div style="left:850px;top:2px;width:34px;height:14px;background:#0a7a3a;border-bottom:1px solid #20e890;overflow:hidden"></div>
<div style="left:851px;top:2px;font-size:10px;letter-spacing:-0.3px;color:#f0f4f0;line-height:12px;width:32px;overflow:hidden">aco_kick</div>
<div style="left:886px;top:2px;width:34px;height:14px;background:#0a7a3a;border-bottom:1px solid #20e890;overflow:hidden"></div>
<div style="left:887px;top:2px;font-size:10px;letter-spacing:-0.3px;color:#f0f4f0;line-height:12px;width:32px;overflow:hidden">aco_kick</div>
<div style="left:922px;top:2px;width:34px;height:14px;background:#0a7a3a;border-bottom:1px solid #20e890;overflow:hidden"></div>
<div style="left:923px;top:2px;font-size:10px;letter-spacing:-0.3px;color:#f0f4f0;line-height:12px;width:32px;overflow:hidden">aco_kick</div>
<div style="left:958px;top:2px;width:34px;height:14px;background:#0a7a3a;border-bottom:1px solid #20e890;overflow:hidden"></div>
<div style="left:959px;top:2px;font-size:10px;letter-spacing:-0.3px;color:#f0f4f0;line-height:12px;width:32px;overflow:hidden">aco_kick</div>
<div style="left:994px;top:2px;width:34px;height:14px;background:#0a7a3a;border-bottom:1px solid #20e890;overflow:hidden"></div>
<div style="left:995px;top:2px;font-size:10px;letter-spacing:-0.3px;color:#f0f4f0;line-height:12px;width:32px;overflow:hidden">aco_kick</div>
<div style="left:1030px;top:2px;width:34px;height:14px;background:#0a7a3a;border-bottom:1px solid #20e890;overflow:hidden"></div>
<div style="left:1031px;top:2px;font-size:10px;letter-spacing:-0.3px;color:#f0f4f0;line-height:12px;width:32px;overflow:hidden">aco_kick</div>
<div style="left:1066px;top:2px;width:34px;height:14px;background:#0a7a3a;border-bottom:1px solid #20e890;overflow:hidden"></div>
<div style="left:1067px;top:2px;font-size:10px;letter-spacing:-0.3px;color:#f0f4f0;line-height:12px;width:32px;overflow:hidden">aco_kick</div>
<div style="left:1102px;top:2px;width:34px;height:14px;background:#0a7a3a;border-bottom:1px solid #20e890;overflow:hidden"></div>
<div style="left:1103px;top:2px;font-size:10px;letter-spacing:-0.3px;color:#f0f4f0;line-height:12px;width:32px;overflow:hidden">aco_kick</div>
<div style="left:1138px;top:2px;width:34px;height:14px;background:#0a7a3a;border-bottom:1px solid #20e890;overflow:hidden"></div>
<div style="left:1139px;top:2px;font-size:10px;letter-spacing:-0.3px;color:#f0f4f0;line-height:12px;width:32px;overflow:hidden">aco_kick</div>
<div style="left:1174px;top:2px;width:34px;height:14px;background:#0a7a3a;border-bottom:1px solid #20e890;overflow:hidden"></div>
<div style="left:1175px;top:2px;font-size:10px;letter-spacing:-0.3px;color:#f0f4f0;line-height:12px;width:32px;overflow:hidden">aco_kick</div>
<div style="left:0px;top:20px;width:454px;height:15px;background:#118a5c;border-top:1px solid #5ac8a0"></div>
<div style="left:527px;top:20px;width:682px;height:15px;background:#118a5c;border-top:1px solid #5ac8a0"></div>
<div style="left:527px;top:20px;width:33px;height:15px;background:#0a5a3c;clip-path:polygon(0 0,100% 0,100% 75%,90% 100%,0 100%)"></div>
<svg style="position:absolute;left:530px;top:22px" width="12" height="12"><rect x="1" y="4" width="10" height="8" fill="#6a9a88"/><path d="M1.5 2.5 Q4 0 6.5 2.5" stroke="#e8e0c0" stroke-width="1.2" fill="none"/></svg>
<div style="left:545px;top:21px;font-size:10px;color:#eef4f0;letter-spacing:-0.5px">ms</div>
<div style="left:1102px;top:20px;width:33px;height:15px;background:#0a5a3c;clip-path:polygon(0 0,100% 0,100% 75%,90% 100%,0 100%)"></div>
<svg style="position:absolute;left:1105px;top:22px" width="12" height="12"><rect x="1" y="4" width="10" height="8" fill="#6a9a88"/><path d="M1.5 2.5 Q4 0 6.5 2.5" stroke="#e8e0c0" stroke-width="1.2" fill="none"/></svg>
<div style="left:1120px;top:21px;font-size:10px;color:#eef4f0;letter-spacing:-0.5px">ms</div>
<div style="left:95px;top:39px;width:21px;height:12px;background:#0d2838;"></div>
<div style="left:95px;top:39px;font-size:10px;color:#e8eef2;width:21px;overflow:hidden;line-height:12px">KICK</div>
<div style="left:239px;top:39px;width:21px;height:12px;background:#0d2838;"></div>
<div style="left:239px;top:39px;font-size:10px;color:#e8eef2;width:21px;overflow:hidden;line-height:12px">KICK</div>
<div style="left:383px;top:39px;width:21px;height:12px;background:#0d2838;"></div>
<div style="left:383px;top:39px;font-size:10px;color:#e8eef2;width:21px;overflow:hidden;line-height:12px">KICK</div>
<div style="left:527px;top:38px;width:143px;height:15px;background:#1b5f74;border-bottom:1px solid #0d3040"></div>
<div style="left:527px;top:43px;width:143px;height:1px;background:#0d2e3c"></div>
<div style="left:527px;top:48px;width:143px;height:1px;background:#0d2e3c"></div>
<div style="left:598px;top:40px;width:3px;height:11px;background:#0b2530"></div>
<div style="left:634px;top:40px;width:3px;height:11px;background:#0b2530"></div>
<div style="left:527px;top:38px;width:37px;height:15px;background:#0d2030"></div>
<div style="left:528px;top:39px;font-size:10px;color:#e8eef2;line-height:12px;letter-spacing:-0.3px">KICK(5)</div>
<div style="left:671px;top:38px;width:142px;height:15px;background:#1b5f74;border-bottom:1px solid #0d3040"></div>
<div style="left:671px;top:43px;width:142px;height:1px;background:#0d2e3c"></div>
<div style="left:671px;top:48px;width:142px;height:1px;background:#0d2e3c"></div>
<div style="left:741px;top:40px;width:3px;height:11px;background:#0b2530"></div>
<div style="left:777px;top:40px;width:3px;height:11px;background:#0b2530"></div>
<div style="left:671px;top:38px;width:37px;height:15px;background:#0d2030"></div>
<div style="left:672px;top:39px;font-size:10px;color:#e8eef2;line-height:12px;letter-spacing:-0.3px">KICK(5)</div>
<div style="left:814px;top:38px;width:143px;height:15px;background:#1b5f74;border-bottom:1px solid #0d3040"></div>
<div style="left:814px;top:43px;width:143px;height:1px;background:#0d2e3c"></div>
<div style="left:814px;top:48px;width:143px;height:1px;background:#0d2e3c"></div>
<div style="left:885px;top:40px;width:3px;height:11px;background:#0b2530"></div>
<div style="left:921px;top:40px;width:3px;height:11px;background:#0b2530"></div>
<div style="left:814px;top:38px;width:37px;height:15px;background:#0d2030"></div>
<div style="left:815px;top:39px;font-size:10px;color:#e8eef2;line-height:12px;letter-spacing:-0.3px">KICK(5)</div>
<div style="left:958px;top:38px;width:143px;height:15px;background:#1b5f74;border-bottom:1px solid #0d3040"></div>
<div style="left:958px;top:43px;width:143px;height:1px;background:#0d2e3c"></div>
<div style="left:958px;top:48px;width:143px;height:1px;background:#0d2e3c"></div>
<div style="left:1029px;top:40px;width:3px;height:11px;background:#0b2530"></div>
<div style="left:1065px;top:40px;width:3px;height:11px;background:#0b2530"></div>
<div style="left:958px;top:38px;width:37px;height:15px;background:#0d2030"></div>
<div style="left:959px;top:39px;font-size:10px;color:#e8eef2;line-height:12px;letter-spacing:-0.3px">KICK(5)</div>
<div style="left:0px;top:72px;width:1208px;height:1px;background:#8a98a4"></div>
<div style="left:0px;top:89px;width:1208px;height:1px;background:#7a8894"></div>
<div style="left:0px;top:74px;width:21px;height:15px;background:#0d5670;border-bottom:2px solid #00c8f0;overflow:hidden"></div>
<svg style="position:absolute;left:8px;top:75px" width="13" height="13"><rect x="0" y="1" width="13" height="2" fill="#00d0f4"/><rect x="3" y="5" width="5" height="6" fill="#00d0f4"/><rect x="0" y="5" width="2" height="6" fill="#00d0f4"/><path d="M8 6 L10 9 L12 5" stroke="#00d0f4" stroke-width="1.2" fill="none"/><rect x="0" y="11" width="13" height="2" fill="#00d0f4"/></svg>
<div style="left:1px;top:75px;font-size:10px;color:#f0f6f8;line-height:12px">1</div>
<div style="left:23px;top:74px;width:70px;height:15px;background:#0d5670;border-bottom:2px solid #00c8f0;overflow:hidden"></div>
<div style="left:24px;top:75px;font-size:10px;letter-spacing:-0.5px;color:#f4f8fa;line-height:12px;width:56px;overflow:hidden">Drum Loop 1</div>
<svg style="position:absolute;left:80px;top:75px" width="13" height="13"><rect x="0" y="1" width="13" height="2" fill="#00d0f4"/><rect x="3" y="5" width="5" height="6" fill="#00d0f4"/><rect x="0" y="5" width="2" height="6" fill="#00d0f4"/><path d="M8 6 L10 9 L12 5" stroke="#00d0f4" stroke-width="1.2" fill="none"/><rect x="0" y="11" width="13" height="2" fill="#00d0f4"/></svg>
<div style="left:95px;top:74px;width:70px;height:15px;background:#0d5670;border-bottom:2px solid #00c8f0;overflow:hidden"></div>
<div style="left:96px;top:75px;font-size:10px;letter-spacing:-0.5px;color:#f4f8fa;line-height:12px;width:56px;overflow:hidden">Drum Loop 1</div>
<svg style="position:absolute;left:152px;top:75px" width="13" height="13"><rect x="0" y="1" width="13" height="2" fill="#00d0f4"/><rect x="3" y="5" width="5" height="6" fill="#00d0f4"/><rect x="0" y="5" width="2" height="6" fill="#00d0f4"/><path d="M8 6 L10 9 L12 5" stroke="#00d0f4" stroke-width="1.2" fill="none"/><rect x="0" y="11" width="13" height="2" fill="#00d0f4"/></svg>
<div style="left:167px;top:74px;width:70px;height:15px;background:#0d5670;border-bottom:2px solid #00c8f0;overflow:hidden"></div>
<div style="left:168px;top:75px;font-size:10px;letter-spacing:-0.5px;color:#f4f8fa;line-height:12px;width:56px;overflow:hidden">Drum Loop 1</div>
<svg style="position:absolute;left:224px;top:75px" width="13" height="13"><rect x="0" y="1" width="13" height="2" fill="#00d0f4"/><rect x="3" y="5" width="5" height="6" fill="#00d0f4"/><rect x="0" y="5" width="2" height="6" fill="#00d0f4"/><path d="M8 6 L10 9 L12 5" stroke="#00d0f4" stroke-width="1.2" fill="none"/><rect x="0" y="11" width="13" height="2" fill="#00d0f4"/></svg>
<div style="left:239px;top:74px;width:70px;height:15px;background:#0d5670;border-bottom:2px solid #00c8f0;overflow:hidden"></div>
<div style="left:240px;top:75px;font-size:10px;letter-spacing:-0.5px;color:#f4f8fa;line-height:12px;width:56px;overflow:hidden">Drum Loop 1</div>
<svg style="position:absolute;left:296px;top:75px" width="13" height="13"><rect x="0" y="1" width="13" height="2" fill="#00d0f4"/><rect x="3" y="5" width="5" height="6" fill="#00d0f4"/><rect x="0" y="5" width="2" height="6" fill="#00d0f4"/><path d="M8 6 L10 9 L12 5" stroke="#00d0f4" stroke-width="1.2" fill="none"/><rect x="0" y="11" width="13" height="2" fill="#00d0f4"/></svg>
<div style="left:311px;top:74px;width:70px;height:15px;background:#0d5670;border-bottom:2px solid #00c8f0;overflow:hidden"></div>
<div style="left:312px;top:75px;font-size:10px;letter-spacing:-0.5px;color:#f4f8fa;line-height:12px;width:56px;overflow:hidden">Drum Loop 1</div>
<svg style="position:absolute;left:368px;top:75px" width="13" height="13"><rect x="0" y="1" width="13" height="2" fill="#00d0f4"/><rect x="3" y="5" width="5" height="6" fill="#00d0f4"/><rect x="0" y="5" width="2" height="6" fill="#00d0f4"/><path d="M8 6 L10 9 L12 5" stroke="#00d0f4" stroke-width="1.2" fill="none"/><rect x="0" y="11" width="13" height="2" fill="#00d0f4"/></svg>
<div style="left:383px;top:74px;width:70px;height:15px;background:#0d5670;border-bottom:2px solid #00c8f0;overflow:hidden"></div>
<div style="left:384px;top:75px;font-size:10px;letter-spacing:-0.5px;color:#f4f8fa;line-height:12px;width:56px;overflow:hidden">Drum Loop 1</div>
<svg style="position:absolute;left:440px;top:75px" width="13" height="13"><rect x="0" y="1" width="13" height="2" fill="#00d0f4"/><rect x="3" y="5" width="5" height="6" fill="#00d0f4"/><rect x="0" y="5" width="2" height="6" fill="#00d0f4"/><path d="M8 6 L10 9 L12 5" stroke="#00d0f4" stroke-width="1.2" fill="none"/><rect x="0" y="11" width="13" height="2" fill="#00d0f4"/></svg>
<div style="left:527px;top:74px;width:70px;height:15px;background:#0d5670;border-bottom:2px solid #00c8f0;overflow:hidden"></div>
<div style="left:528px;top:75px;font-size:10px;letter-spacing:-0.5px;color:#f4f8fa;line-height:12px;width:56px;overflow:hidden">Drum Loop 1</div>
<svg style="position:absolute;left:584px;top:75px" width="13" height="13"><rect x="0" y="1" width="13" height="2" fill="#00d0f4"/><rect x="3" y="5" width="5" height="6" fill="#00d0f4"/><rect x="0" y="5" width="2" height="6" fill="#00d0f4"/><path d="M8 6 L10 9 L12 5" stroke="#00d0f4" stroke-width="1.2" fill="none"/><rect x="0" y="11" width="13" height="2" fill="#00d0f4"/></svg>
<div style="left:599px;top:74px;width:70px;height:15px;background:#0d5670;border-bottom:2px solid #00c8f0;overflow:hidden"></div>
<div style="left:600px;top:75px;font-size:10px;letter-spacing:-0.5px;color:#f4f8fa;line-height:12px;width:56px;overflow:hidden">Drum Loop 1</div>
<svg style="position:absolute;left:656px;top:75px" width="13" height="13"><rect x="0" y="1" width="13" height="2" fill="#00d0f4"/><rect x="3" y="5" width="5" height="6" fill="#00d0f4"/><rect x="0" y="5" width="2" height="6" fill="#00d0f4"/><path d="M8 6 L10 9 L12 5" stroke="#00d0f4" stroke-width="1.2" fill="none"/><rect x="0" y="11" width="13" height="2" fill="#00d0f4"/></svg>
<div style="left:671px;top:74px;width:69px;height:15px;background:#0d5670;border-bottom:2px solid #00c8f0;overflow:hidden"></div>
<div style="left:672px;top:75px;font-size:10px;letter-spacing:-0.5px;color:#f4f8fa;line-height:12px;width:55px;overflow:hidden">Drum Loop 1</div>
<svg style="position:absolute;left:727px;top:75px" width="13" height="13"><rect x="0" y="1" width="13" height="2" fill="#00d0f4"/><rect x="3" y="5" width="5" height="6" fill="#00d0f4"/><rect x="0" y="5" width="2" height="6" fill="#00d0f4"/><path d="M8 6 L10 9 L12 5" stroke="#00d0f4" stroke-width="1.2" fill="none"/><rect x="0" y="11" width="13" height="2" fill="#00d0f4"/></svg>
<div style="left:742px;top:74px;width:70px;height:15px;background:#0d5670;border-bottom:2px solid #00c8f0;overflow:hidden"></div>
<div style="left:743px;top:75px;font-size:10px;letter-spacing:-0.5px;color:#f4f8fa;line-height:12px;width:56px;overflow:hidden">Drum Loop 1</div>
<svg style="position:absolute;left:799px;top:75px" width="13" height="13"><rect x="0" y="1" width="13" height="2" fill="#00d0f4"/><rect x="3" y="5" width="5" height="6" fill="#00d0f4"/><rect x="0" y="5" width="2" height="6" fill="#00d0f4"/><path d="M8 6 L10 9 L12 5" stroke="#00d0f4" stroke-width="1.2" fill="none"/><rect x="0" y="11" width="13" height="2" fill="#00d0f4"/></svg>
<div style="left:814px;top:74px;width:70px;height:15px;background:#0d5670;border-bottom:2px solid #00c8f0;overflow:hidden"></div>
<div style="left:815px;top:75px;font-size:10px;letter-spacing:-0.5px;color:#f4f8fa;line-height:12px;width:56px;overflow:hidden">Drum Loop 1</div>
<svg style="position:absolute;left:871px;top:75px" width="13" height="13"><rect x="0" y="1" width="13" height="2" fill="#00d0f4"/><rect x="3" y="5" width="5" height="6" fill="#00d0f4"/><rect x="0" y="5" width="2" height="6" fill="#00d0f4"/><path d="M8 6 L10 9 L12 5" stroke="#00d0f4" stroke-width="1.2" fill="none"/><rect x="0" y="11" width="13" height="2" fill="#00d0f4"/></svg>
<div style="left:886px;top:74px;width:70px;height:15px;background:#0d5670;border-bottom:2px solid #00c8f0;overflow:hidden"></div>
<div style="left:887px;top:75px;font-size:10px;letter-spacing:-0.5px;color:#f4f8fa;line-height:12px;width:56px;overflow:hidden">Drum Loop 1</div>
<svg style="position:absolute;left:943px;top:75px" width="13" height="13"><rect x="0" y="1" width="13" height="2" fill="#00d0f4"/><rect x="3" y="5" width="5" height="6" fill="#00d0f4"/><rect x="0" y="5" width="2" height="6" fill="#00d0f4"/><path d="M8 6 L10 9 L12 5" stroke="#00d0f4" stroke-width="1.2" fill="none"/><rect x="0" y="11" width="13" height="2" fill="#00d0f4"/></svg>
<div style="left:958px;top:74px;width:70px;height:15px;background:#0d5670;border-bottom:2px solid #00c8f0;overflow:hidden"></div>
<div style="left:959px;top:75px;font-size:10px;letter-spacing:-0.5px;color:#f4f8fa;line-height:12px;width:56px;overflow:hidden">Drum Loop 1</div>
<svg style="position:absolute;left:1015px;top:75px" width="13" height="13"><rect x="0" y="1" width="13" height="2" fill="#00d0f4"/><rect x="3" y="5" width="5" height="6" fill="#00d0f4"/><rect x="0" y="5" width="2" height="6" fill="#00d0f4"/><path d="M8 6 L10 9 L12 5" stroke="#00d0f4" stroke-width="1.2" fill="none"/><rect x="0" y="11" width="13" height="2" fill="#00d0f4"/></svg>
<div style="left:1030px;top:74px;width:70px;height:15px;background:#0d5670;border-bottom:2px solid #00c8f0;overflow:hidden"></div>
<div style="left:1031px;top:75px;font-size:10px;letter-spacing:-0.5px;color:#f4f8fa;line-height:12px;width:56px;overflow:hidden">Drum Loop 1</div>
<svg style="position:absolute;left:1087px;top:75px" width="13" height="13"><rect x="0" y="1" width="13" height="2" fill="#00d0f4"/><rect x="3" y="5" width="5" height="6" fill="#00d0f4"/><rect x="0" y="5" width="2" height="6" fill="#00d0f4"/><path d="M8 6 L10 9 L12 5" stroke="#00d0f4" stroke-width="1.2" fill="none"/><rect x="0" y="11" width="13" height="2" fill="#00d0f4"/></svg>
<div style="left:527px;top:92px;width:142px;height:15px;background:#20252c;overflow:hidden"></div>
<svg style="position:absolute;left:527px;top:92px" width="142" height="15"><rect x="60" y="2" width="1.4" height="11" fill="#8a9090"/><rect x="65" y="2" width="1.4" height="11" fill="#6aa8e0"/><rect x="70" y="2" width="1.4" height="11" fill="#5ac890"/><rect x="75" y="2" width="1.4" height="11" fill="#6aa8e0"/><rect x="80" y="2" width="1.4" height="11" fill="#8a9090"/><rect x="85" y="2" width="1.4" height="11" fill="#6aa8e0"/><rect x="90" y="2" width="1.4" height="11" fill="#6aa8e0"/><rect x="95" y="2" width="1.4" height="11" fill="#6aa8e0"/><rect x="100" y="2" width="1.4" height="11" fill="#6aa8e0"/><rect x="105" y="2" width="1.4" height="11" fill="#5ac890"/><rect x="110" y="2" width="1.4" height="11" fill="#8a9090"/><rect x="115" y="2" width="1.4" height="11" fill="#6aa8e0"/><rect x="120" y="2" width="1.4" height="11" fill="#6aa8e0"/><rect x="125" y="2" width="1.4" height="11" fill="#6aa8e0"/><rect x="130" y="2" width="1.4" height="11" fill="#6aa8e0"/><rect x="135" y="2" width="1.4" height="11" fill="#5ac890"/><rect x="140" y="2" width="1.4" height="11" fill="#6aa8e0"/><rect x="38" y="7" width="104" height="1" fill="#888"/></svg>
<div style="left:527px;top:92px;width:58px;height:15px;background:#0c0e11;border-radius:0 3px 3px 0"></div>
<div style="left:536px;top:93px;font-size:10px;letter-spacing:-0.3px;color:#f0f0f0;line-height:12px;width:49px;overflow:hidden">um Loop 2</div>
<svg style="position:absolute;left:528px;top:97px" width="8" height="9"><circle cx="4" cy="5" r="3" fill="none" stroke="#aaa" stroke-width="1.5"/></svg>
<div style="left:671px;top:92px;width:141px;height:15px;background:#20252c;overflow:hidden"></div>
<svg style="position:absolute;left:671px;top:92px" width="141" height="15"><rect x="60" y="2" width="1.4" height="11" fill="#6aa8e0"/><rect x="65" y="2" width="1.4" height="11" fill="#6aa8e0"/><rect x="70" y="2" width="1.4" height="11" fill="#8a9090"/><rect x="75" y="2" width="1.4" height="11" fill="#6aa8e0"/><rect x="80" y="2" width="1.4" height="11" fill="#8a9090"/><rect x="85" y="2" width="1.4" height="11" fill="#5ac890"/><rect x="90" y="2" width="1.4" height="11" fill="#6aa8e0"/><rect x="95" y="2" width="1.4" height="11" fill="#5ac890"/><rect x="100" y="2" width="1.4" height="11" fill="#6aa8e0"/><rect x="105" y="2" width="1.4" height="11" fill="#5ac890"/><rect x="110" y="2" width="1.4" height="11" fill="#6aa8e0"/><rect x="115" y="2" width="1.4" height="11" fill="#6aa8e0"/><rect x="120" y="2" width="1.4" height="11" fill="#5ac890"/><rect x="125" y="2" width="1.4" height="11" fill="#5ac890"/><rect x="130" y="2" width="1.4" height="11" fill="#5ac890"/><rect x="135" y="2" width="1.4" height="11" fill="#6aa8e0"/><rect x="140" y="2" width="1.4" height="11" fill="#6aa8e0"/><rect x="38" y="7" width="103" height="1" fill="#888"/></svg>
<div style="left:671px;top:92px;width:58px;height:15px;background:#0c0e11;border-radius:0 3px 3px 0"></div>
<div style="left:680px;top:93px;font-size:10px;letter-spacing:-0.3px;color:#f0f0f0;line-height:12px;width:49px;overflow:hidden">um Loop 2</div>
<svg style="position:absolute;left:672px;top:97px" width="8" height="9"><circle cx="4" cy="5" r="3" fill="none" stroke="#aaa" stroke-width="1.5"/></svg>
<div style="left:814px;top:92px;width:142px;height:15px;background:#20252c;overflow:hidden"></div>
<svg style="position:absolute;left:814px;top:92px" width="142" height="15"><rect x="60" y="2" width="1.4" height="11" fill="#6aa8e0"/><rect x="65" y="2" width="1.4" height="11" fill="#6aa8e0"/><rect x="70" y="2" width="1.4" height="11" fill="#5ac890"/><rect x="75" y="2" width="1.4" height="11" fill="#6aa8e0"/><rect x="80" y="2" width="1.4" height="11" fill="#5ac890"/><rect x="85" y="2" width="1.4" height="11" fill="#8a9090"/><rect x="90" y="2" width="1.4" height="11" fill="#6aa8e0"/><rect x="95" y="2" width="1.4" height="11" fill="#6aa8e0"/><rect x="100" y="2" width="1.4" height="11" fill="#6aa8e0"/><rect x="105" y="2" width="1.4" height="11" fill="#6aa8e0"/><rect x="110" y="2" width="1.4" height="11" fill="#6aa8e0"/><rect x="115" y="2" width="1.4" height="11" fill="#6aa8e0"/><rect x="120" y="2" width="1.4" height="11" fill="#8a9090"/><rect x="125" y="2" width="1.4" height="11" fill="#8a9090"/><rect x="130" y="2" width="1.4" height="11" fill="#6aa8e0"/><rect x="135" y="2" width="1.4" height="11" fill="#5ac890"/><rect x="140" y="2" width="1.4" height="11" fill="#8a9090"/><rect x="38" y="7" width="104" height="1" fill="#888"/></svg>
<div style="left:814px;top:92px;width:58px;height:15px;background:#0c0e11;border-radius:0 3px 3px 0"></div>
<div style="left:823px;top:93px;font-size:10px;letter-spacing:-0.3px;color:#f0f0f0;line-height:12px;width:49px;overflow:hidden">um Loop 2</div>
<svg style="position:absolute;left:815px;top:97px" width="8" height="9"><circle cx="4" cy="5" r="3" fill="none" stroke="#aaa" stroke-width="1.5"/></svg>
<div style="left:958px;top:92px;width:142px;height:15px;background:#20252c;overflow:hidden"></div>
<svg style="position:absolute;left:958px;top:92px" width="142" height="15"><rect x="60" y="2" width="1.4" height="11" fill="#8a9090"/><rect x="65" y="2" width="1.4" height="11" fill="#8a9090"/><rect x="70" y="2" width="1.4" height="11" fill="#6aa8e0"/><rect x="75" y="2" width="1.4" height="11" fill="#6aa8e0"/><rect x="80" y="2" width="1.4" height="11" fill="#6aa8e0"/><rect x="85" y="2" width="1.4" height="11" fill="#5ac890"/><rect x="90" y="2" width="1.4" height="11" fill="#8a9090"/><rect x="95" y="2" width="1.4" height="11" fill="#6aa8e0"/><rect x="100" y="2" width="1.4" height="11" fill="#8a9090"/><rect x="105" y="2" width="1.4" height="11" fill="#5ac890"/><rect x="110" y="2" width="1.4" height="11" fill="#8a9090"/><rect x="115" y="2" width="1.4" height="11" fill="#6aa8e0"/><rect x="120" y="2" width="1.4" height="11" fill="#8a9090"/><rect x="125" y="2" width="1.4" height="11" fill="#6aa8e0"/><rect x="130" y="2" width="1.4" height="11" fill="#5ac890"/><rect x="135" y="2" width="1.4" height="11" fill="#6aa8e0"/><rect x="140" y="2" width="1.4" height="11" fill="#8a9090"/><rect x="38" y="7" width="104" height="1" fill="#888"/></svg>
<div style="left:958px;top:92px;width:58px;height:15px;background:#0c0e11;border-radius:0 3px 3px 0"></div>
<div style="left:967px;top:93px;font-size:10px;letter-spacing:-0.3px;color:#f0f0f0;line-height:12px;width:49px;overflow:hidden">um Loop 2</div>
<svg style="position:absolute;left:959px;top:97px" width="8" height="9"><circle cx="4" cy="5" r="3" fill="none" stroke="#aaa" stroke-width="1.5"/></svg>
<div style="left:1102px;top:92px;width:106px;height:15px;background:#20252c;overflow:hidden"></div>
<svg style="position:absolute;left:1102px;top:92px" width="106" height="15"><rect x="60" y="2" width="1.4" height="11" fill="#6aa8e0"/><rect x="65" y="2" width="1.4" height="11" fill="#8a9090"/><rect x="70" y="2" width="1.4" height="11" fill="#6aa8e0"/><rect x="75" y="2" width="1.4" height="11" fill="#6aa8e0"/><rect x="80" y="2" width="1.4" height="11" fill="#6aa8e0"/><rect x="85" y="2" width="1.4" height="11" fill="#6aa8e0"/><rect x="90" y="2" width="1.4" height="11" fill="#6aa8e0"/><rect x="95" y="2" width="1.4" height="11" fill="#5ac890"/><rect x="100" y="2" width="1.4" height="11" fill="#6aa8e0"/><rect x="105" y="2" width="1.4" height="11" fill="#6aa8e0"/><rect x="38" y="7" width="68" height="1" fill="#888"/></svg>
<div style="left:1102px;top:92px;width:58px;height:15px;background:#0c0e11;border-radius:0 3px 3px 0"></div>
<div style="left:1111px;top:93px;font-size:10px;letter-spacing:-0.3px;color:#f0f0f0;line-height:12px;width:49px;overflow:hidden">um Loop 2</div>
<svg style="position:absolute;left:1103px;top:97px" width="8" height="9"><circle cx="4" cy="5" r="3" fill="none" stroke="#aaa" stroke-width="1.5"/></svg>
<div style="left:0px;top:110px;width:453px;height:15px;background:#00d8f8;border-bottom:1px solid #00a0c0"></div>
<svg style="position:absolute;left:0px;top:110px" width="453" height="15"><rect x="0" y="3" width="453" height="1" fill="#0a6a88"/><rect x="0" y="10" width="453" height="1" fill="#0a6a88"/><rect x="3" y="1" width="1.3" height="5" fill="#0a5a78"/><rect x="3" y="8" width="1.3" height="5" fill="#0a5a78"/><rect x="12" y="1" width="1.3" height="5" fill="#0a5a78"/><rect x="12" y="8" width="1.3" height="5" fill="#0a5a78"/><rect x="21" y="1" width="1.3" height="5" fill="#0a5a78"/><rect x="21" y="8" width="1.3" height="5" fill="#0a5a78"/><rect x="26" y="1" width="1.3" height="5" fill="#0a5a78"/><rect x="26" y="8" width="1.3" height="5" fill="#0a5a78"/><rect x="44" y="1" width="1.3" height="5" fill="#0a5a78"/><rect x="44" y="8" width="1.3" height="5" fill="#0a5a78"/><rect x="62" y="1" width="1.3" height="5" fill="#0a5a78"/><rect x="62" y="8" width="1.3" height="5" fill="#0a5a78"/><rect x="64" y="2" width="2" height="1" fill="#0a5a78"/><rect x="64" y="9" width="2" height="1" fill="#0a5a78"/><rect x="74" y="1" width="1.3" height="5" fill="#0a5a78"/><rect x="74" y="8" width="1.3" height="5" fill="#0a5a78"/><rect x="76" y="2" width="2" height="1" fill="#0a5a78"/><rect x="76" y="9" width="2" height="1" fill="#0a5a78"/><rect x="81" y="1" width="1.3" height="5" fill="#0a5a78"/><rect x="81" y="8" width="1.3" height="5" fill="#0a5a78"/><rect x="83" y="2" width="2" height="1" fill="#0a5a78"/><rect x="83" y="9" width="2" height="1" fill="#0a5a78"/><rect x="99" y="1" width="1.3" height="5" fill="#0a5a78"/><rect x="99" y="8" width="1.3" height="5" fill="#0a5a78"/><rect x="117" y="1" width="1.3" height="5" fill="#0a5a78"/><rect x="117" y="8" width="1.3" height="5" fill="#0a5a78"/><rect x="122" y="1" width="1.3" height="5" fill="#0a5a78"/><rect x="122" y="8" width="1.3" height="5" fill="#0a5a78"/><rect x="124" y="2" width="2" height="1" fill="#0a5a78"/><rect x="124" y="9" width="2" height="1" fill="#0a5a78"/><rect x="129" y="1" width="1.3" height="5" fill="#0a5a78"/><rect x="129" y="8" width="1.3" height="5" fill="#0a5a78"/><rect x="131" y="2" width="2" height="1" fill="#0a5a78"/><rect x="131" y="9" width="2" height="1" fill="#0a5a78"/><rect x="136" y="1" width="1.3" height="5" fill="#0a5a78"/><rect x="136" y="8" width="1.3" height="5" fill="#0a5a78"/><rect x="143" y="1" width="1.3" height="5" fill="#0a5a78"/><rect x="143" y="8" width="1.3" height="5" fill="#0a5a78"/><rect x="145" y="2" width="2" height="1" fill="#0a5a78"/><rect x="145" y="9" width="2" height="1" fill="#0a5a78"/><rect x="161" y="1" width="1.3" height="5" fill="#0a5a78"/><rect x="161" y="8" width="1.3" height="5" fill="#0a5a78"/><rect x="163" y="2" width="2" height="1" fill="#0a5a78"/><rect x="163" y="9" width="2" height="1" fill="#0a5a78"/><rect x="179" y="1" width="1.3" height="5" fill="#0a5a78"/><rect x="179" y="8" width="1.3" height="5" fill="#0a5a78"/><rect x="181" y="2" width="2" height="1" fill="#0a5a78"/><rect x="181" y="9" width="2" height="1" fill="#0a5a78"/><rect x="186" y="1" width="1.3" height="5" fill="#0a5a78"/><rect x="186" y="8" width="1.3" height="5" fill="#0a5a78"/><rect x="198" y="1" width="1.3" height="5" fill="#0a5a78"/><rect x="198" y="8" width="1.3" height="5" fill="#0a5a78"/><rect x="203" y="1" width="1.3" height="5" fill="#0a5a78"/><rect x="203" y="8" width="1.3" height="5" fill="#0a5a78"/><rect x="215" y="1" width="1.3" height="5" fill="#0a5a78"/><rect x="215" y="8" width="1.3" height="5" fill="#0a5a78"/><rect x="217" y="2" width="2" height="1" fill="#0a5a78"/><rect x="217" y="9" width="2" height="1" fill="#0a5a78"/><rect x="233" y="1" width="1.3" height="5" fill="#0a5a78"/><rect x="233" y="8" width="1.3" height="5" fill="#0a5a78"/><rect x="235" y="2" width="2" height="1" fill="#0a5a78"/><rect x="235" y="9" width="2" height="1" fill="#0a5a78"/><rect x="242" y="1" width="1.3" height="5" fill="#0a5a78"/><rect x="242" y="8" width="1.3" height="5" fill="#0a5a78"/><rect x="244" y="2" width="2" height="1" fill="#0a5a78"/><rect x="244" y="9" width="2" height="1" fill="#0a5a78"/><rect x="254" y="1" width="1.3" height="5" fill="#0a5a78"/><rect x="254" y="8" width="1.3" height="5" fill="#0a5a78"/><rect x="256" y="2" width="2" height="1" fill="#0a5a78"/><rect x="256" y="9" width="2" height="1" fill="#0a5a78"/><rect x="259" y="1" width="1.3" height="5" fill="#0a5a78"/><rect x="259" y="8" width="1.3" height="5" fill="#0a5a78"/><rect x="261" y="2" width="2" height="1" fill="#0a5a78"/><rect x="261" y="9" width="2" height="1" fill="#0a5a78"/><rect x="264" y="1" width="1.3" height="5" fill="#0a5a78"/><rect x="264" y="8" width="1.3" height="5" fill="#0a5a78"/><rect x="273" y="1" width="1.3" height="5" fill="#0a5a78"/><rect x="273" y="8" width="1.3" height="5" fill="#0a5a78"/><rect x="278" y="1" width="1.3" height="5" fill="#0a5a78"/><rect x="278" y="8" width="1.3" height="5" fill="#0a5a78"/><rect x="280" y="2" width="2" height="1" fill="#0a5a78"/><rect x="280" y="9" width="2" height="1" fill="#0a5a78"/><rect x="296" y="1" width="1.3" height="5" fill="#0a5a78"/><rect x="296" y="8" width="1.3" height="5" fill="#0a5a78"/><rect x="298" y="2" width="2" height="1" fill="#0a5a78"/><rect x="298" y="9" width="2" height="1" fill="#0a5a78"/><rect x="303" y="1" width="1.3" height="5" fill="#0a5a78"/><rect x="303" y="8" width="1.3" height="5" fill="#0a5a78"/><rect x="321" y="1" width="1.3" height="5" fill="#0a5a78"/><rect x="321" y="8" width="1.3" height="5" fill="#0a5a78"/><rect x="323" y="2" width="2" height="1" fill="#0a5a78"/><rect x="323" y="9" width="2" height="1" fill="#0a5a78"/><rect x="326" y="1" width="1.3" height="5" fill="#0a5a78"/><rect x="326" y="8" width="1.3" height="5" fill="#0a5a78"/><rect x="328" y="2" width="2" height="1" fill="#0a5a78"/><rect x="328" y="9" width="2" height="1" fill="#0a5a78"/><rect x="335" y="1" width="1.3" height="5" fill="#0a5a78"/><rect x="335" y="8" width="1.3" height="5" fill="#0a5a78"/><rect x="347" y="1" width="1.3" height="5" fill="#0a5a78"/><rect x="347" y="8" width="1.3" height="5" fill="#0a5a78"/><rect x="349" y="2" width="2" height="1" fill="#0a5a78"/><rect x="349" y="9" width="2" height="1" fill="#0a5a78"/><rect x="365" y="1" width="1.3" height="5" fill="#0a5a78"/><rect x="365" y="8" width="1.3" height="5" fill="#0a5a78"/><rect x="377" y="1" width="1.3" height="5" fill="#0a5a78"/><rect x="377" y="8" width="1.3" height="5" fill="#0a5a78"/><rect x="379" y="2" width="2" height="1" fill="#0a5a78"/><rect x="379" y="9" width="2" height="1" fill="#0a5a78"/><rect x="389" y="1" width="1.3" height="5" fill="#0a5a78"/><rect x="389" y="8" width="1.3" height="5" fill="#0a5a78"/><rect x="396" y="1" width="1.3" height="5" fill="#0a5a78"/><rect x="396" y="8" width="1.3" height="5" fill="#0a5a78"/><rect x="401" y="1" width="1.3" height="5" fill="#0a5a78"/><rect x="401" y="8" width="1.3" height="5" fill="#0a5a78"/><rect x="403" y="2" width="2" height="1" fill="#0a5a78"/><rect x="403" y="9" width="2" height="1" fill="#0a5a78"/><rect x="408" y="1" width="1.3" height="5" fill="#0a5a78"/><rect x="408" y="8" width="1.3" height="5" fill="#0a5a78"/><rect x="410" y="2" width="2" height="1" fill="#0a5a78"/><rect x="410" y="9" width="2" height="1" fill="#0a5a78"/><rect x="413" y="1" width="1.3" height="5" fill="#0a5a78"/><rect x="413" y="8" width="1.3" height="5" fill="#0a5a78"/><rect x="422" y="1" width="1.3" height="5" fill="#0a5a78"/><rect x="422" y="8" width="1.3" height="5" fill="#0a5a78"/><rect x="429" y="1" width="1.3" height="5" fill="#0a5a78"/><rect x="429" y="8" width="1.3" height="5" fill="#0a5a78"/><rect x="441" y="1" width="1.3" height="5" fill="#0a5a78"/><rect x="441" y="8" width="1.3" height="5" fill="#0a5a78"/></svg>
<div style="left:527px;top:110px;width:573px;height:15px;background:#00d8f8;border-bottom:1px solid #00a0c0"></div>
<svg style="position:absolute;left:527px;top:110px" width="573" height="15"><rect x="0" y="3" width="573" height="1" fill="#0a6a88"/><rect x="0" y="10" width="573" height="1" fill="#0a6a88"/><rect x="3" y="1" width="1.3" height="5" fill="#0a5a78"/><rect x="3" y="8" width="1.3" height="5" fill="#0a5a78"/><rect x="5" y="2" width="2" height="1" fill="#0a5a78"/><rect x="5" y="9" width="2" height="1" fill="#0a5a78"/><rect x="21" y="1" width="1.3" height="5" fill="#0a5a78"/><rect x="21" y="8" width="1.3" height="5" fill="#0a5a78"/><rect x="23" y="2" width="2" height="1" fill="#0a5a78"/><rect x="23" y="9" width="2" height="1" fill="#0a5a78"/><rect x="28" y="1" width="1.3" height="5" fill="#0a5a78"/><rect x="28" y="8" width="1.3" height="5" fill="#0a5a78"/><rect x="30" y="2" width="2" height="1" fill="#0a5a78"/><rect x="30" y="9" width="2" height="1" fill="#0a5a78"/><rect x="40" y="1" width="1.3" height="5" fill="#0a5a78"/><rect x="40" y="8" width="1.3" height="5" fill="#0a5a78"/><rect x="45" y="1" width="1.3" height="5" fill="#0a5a78"/><rect x="45" y="8" width="1.3" height="5" fill="#0a5a78"/><rect x="57" y="1" width="1.3" height="5" fill="#0a5a78"/><rect x="57" y="8" width="1.3" height="5" fill="#0a5a78"/><rect x="62" y="1" width="1.3" height="5" fill="#0a5a78"/><rect x="62" y="8" width="1.3" height="5" fill="#0a5a78"/><rect x="64" y="2" width="2" height="1" fill="#0a5a78"/><rect x="64" y="9" width="2" height="1" fill="#0a5a78"/><rect x="80" y="1" width="1.3" height="5" fill="#0a5a78"/><rect x="80" y="8" width="1.3" height="5" fill="#0a5a78"/><rect x="82" y="2" width="2" height="1" fill="#0a5a78"/><rect x="82" y="9" width="2" height="1" fill="#0a5a78"/><rect x="87" y="1" width="1.3" height="5" fill="#0a5a78"/><rect x="87" y="8" width="1.3" height="5" fill="#0a5a78"/><rect x="99" y="1" width="1.3" height="5" fill="#0a5a78"/><rect x="99" y="8" width="1.3" height="5" fill="#0a5a78"/><rect x="108" y="1" width="1.3" height="5" fill="#0a5a78"/><rect x="108" y="8" width="1.3" height="5" fill="#0a5a78"/><rect x="110" y="2" width="2" height="1" fill="#0a5a78"/><rect x="110" y="9" width="2" height="1" fill="#0a5a78"/><rect x="120" y="1" width="1.3" height="5" fill="#0a5a78"/><rect x="120" y="8" width="1.3" height="5" fill="#0a5a78"/><rect x="138" y="1" width="1.3" height="5" fill="#0a5a78"/><rect x="138" y="8" width="1.3" height="5" fill="#0a5a78"/><rect x="147" y="1" width="1.3" height="5" fill="#0a5a78"/><rect x="147" y="8" width="1.3" height="5" fill="#0a5a78"/><rect x="152" y="1" width="1.3" height="5" fill="#0a5a78"/><rect x="152" y="8" width="1.3" height="5" fill="#0a5a78"/><rect x="159" y="1" width="1.3" height="5" fill="#0a5a78"/><rect x="159" y="8" width="1.3" height="5" fill="#0a5a78"/><rect x="161" y="2" width="2" height="1" fill="#0a5a78"/><rect x="161" y="9" width="2" height="1" fill="#0a5a78"/><rect x="164" y="1" width="1.3" height="5" fill="#0a5a78"/><rect x="164" y="8" width="1.3" height="5" fill="#0a5a78"/><rect x="166" y="2" width="2" height="1" fill="#0a5a78"/><rect x="166" y="9" width="2" height="1" fill="#0a5a78"/><rect x="171" y="1" width="1.3" height="5" fill="#0a5a78"/><rect x="171" y="8" width="1.3" height="5" fill="#0a5a78"/><rect x="180" y="1" width="1.3" height="5" fill="#0a5a78"/><rect x="180" y="8" width="1.3" height="5" fill="#0a5a78"/><rect x="182" y="2" width="2" height="1" fill="#0a5a78"/><rect x="182" y="9" width="2" height="1" fill="#0a5a78"/><rect x="185" y="1" width="1.3" height="5" fill="#0a5a78"/><rect x="185" y="8" width="1.3" height="5" fill="#0a5a78"/><rect x="187" y="2" width="2" height="1" fill="#0a5a78"/><rect x="187" y="9" width="2" height="1" fill="#0a5a78"/><rect x="194" y="1" width="1.3" height="5" fill="#0a5a78"/><rect x="194" y="8" width="1.3" height="5" fill="#0a5a78"/><rect x="201" y="1" width="1.3" height="5" fill="#0a5a78"/><rect x="201" y="8" width="1.3" height="5" fill="#0a5a78"/><rect x="203" y="2" width="2" height="1" fill="#0a5a78"/><rect x="203" y="9" width="2" height="1" fill="#0a5a78"/><rect x="210" y="1" width="1.3" height="5" fill="#0a5a78"/><rect x="210" y="8" width="1.3" height="5" fill="#0a5a78"/><rect x="212" y="2" width="2" height="1" fill="#0a5a78"/><rect x="212" y="9" width="2" height="1" fill="#0a5a78"/><rect x="215" y="1" width="1.3" height="5" fill="#0a5a78"/><rect x="215" y="8" width="1.3" height="5" fill="#0a5a78"/><rect x="217" y="2" width="2" height="1" fill="#0a5a78"/><rect x="217" y="9" width="2" height="1" fill="#0a5a78"/><rect x="222" y="1" width="1.3" height="5" fill="#0a5a78"/><rect x="222" y="8" width="1.3" height="5" fill="#0a5a78"/><rect x="234" y="1" width="1.3" height="5" fill="#0a5a78"/><rect x="234" y="8" width="1.3" height="5" fill="#0a5a78"/><rect x="252" y="1" width="1.3" height="5" fill="#0a5a78"/><rect x="252" y="8" width="1.3" height="5" fill="#0a5a78"/><rect x="259" y="1" width="1.3" height="5" fill="#0a5a78"/><rect x="259" y="8" width="1.3" height="5" fill="#0a5a78"/><rect x="261" y="2" width="2" height="1" fill="#0a5a78"/><rect x="261" y="9" width="2" height="1" fill="#0a5a78"/><rect x="271" y="1" width="1.3" height="5" fill="#0a5a78"/><rect x="271" y="8" width="1.3" height="5" fill="#0a5a78"/><rect x="280" y="1" width="1.3" height="5" fill="#0a5a78"/><rect x="280" y="8" width="1.3" height="5" fill="#0a5a78"/><rect x="292" y="1" width="1.3" height="5" fill="#0a5a78"/><rect x="292" y="8" width="1.3" height="5" fill="#0a5a78"/><rect x="310" y="1" width="1.3" height="5" fill="#0a5a78"/><rect x="310" y="8" width="1.3" height="5" fill="#0a5a78"/><rect x="317" y="1" width="1.3" height="5" fill="#0a5a78"/><rect x="317" y="8" width="1.3" height="5" fill="#0a5a78"/><rect x="335" y="1" width="1.3" height="5" fill="#0a5a78"/><rect x="335" y="8" width="1.3" height="5" fill="#0a5a78"/><rect x="342" y="1" width="1.3" height="5" fill="#0a5a78"/><rect x="342" y="8" width="1.3" height="5" fill="#0a5a78"/><rect x="344" y="2" width="2" height="1" fill="#0a5a78"/><rect x="344" y="9" width="2" height="1" fill="#0a5a78"/><rect x="347" y="1" width="1.3" height="5" fill="#0a5a78"/><rect x="347" y="8" width="1.3" height="5" fill="#0a5a78"/><rect x="352" y="1" width="1.3" height="5" fill="#0a5a78"/><rect x="352" y="8" width="1.3" height="5" fill="#0a5a78"/><rect x="354" y="2" width="2" height="1" fill="#0a5a78"/><rect x="354" y="9" width="2" height="1" fill="#0a5a78"/><rect x="370" y="1" width="1.3" height="5" fill="#0a5a78"/><rect x="370" y="8" width="1.3" height="5" fill="#0a5a78"/><rect x="372" y="2" width="2" height="1" fill="#0a5a78"/><rect x="372" y="9" width="2" height="1" fill="#0a5a78"/><rect x="379" y="1" width="1.3" height="5" fill="#0a5a78"/><rect x="379" y="8" width="1.3" height="5" fill="#0a5a78"/><rect x="384" y="1" width="1.3" height="5" fill="#0a5a78"/><rect x="384" y="8" width="1.3" height="5" fill="#0a5a78"/><rect x="386" y="2" width="2" height="1" fill="#0a5a78"/><rect x="386" y="9" width="2" height="1" fill="#0a5a78"/><rect x="402" y="1" width="1.3" height="5" fill="#0a5a78"/><rect x="402" y="8" width="1.3" height="5" fill="#0a5a78"/><rect x="404" y="2" width="2" height="1" fill="#0a5a78"/><rect x="404" y="9" width="2" height="1" fill="#0a5a78"/><rect x="420" y="1" width="1.3" height="5" fill="#0a5a78"/><rect x="420" y="8" width="1.3" height="5" fill="#0a5a78"/><rect x="422" y="2" width="2" height="1" fill="#0a5a78"/><rect x="422" y="9" width="2" height="1" fill="#0a5a78"/><rect x="438" y="1" width="1.3" height="5" fill="#0a5a78"/><rect x="438" y="8" width="1.3" height="5" fill="#0a5a78"/><rect x="445" y="1" width="1.3" height="5" fill="#0a5a78"/><rect x="445" y="8" width="1.3" height="5" fill="#0a5a78"/><rect x="463" y="1" width="1.3" height="5" fill="#0a5a78"/><rect x="463" y="8" width="1.3" height="5" fill="#0a5a78"/><rect x="470" y="1" width="1.3" height="5" fill="#0a5a78"/><rect x="470" y="8" width="1.3" height="5" fill="#0a5a78"/><rect x="475" y="1" width="1.3" height="5" fill="#0a5a78"/><rect x="475" y="8" width="1.3" height="5" fill="#0a5a78"/><rect x="482" y="1" width="1.3" height="5" fill="#0a5a78"/><rect x="482" y="8" width="1.3" height="5" fill="#0a5a78"/><rect x="491" y="1" width="1.3" height="5" fill="#0a5a78"/><rect x="491" y="8" width="1.3" height="5" fill="#0a5a78"/><rect x="493" y="2" width="2" height="1" fill="#0a5a78"/><rect x="493" y="9" width="2" height="1" fill="#0a5a78"/><rect x="509" y="1" width="1.3" height="5" fill="#0a5a78"/><rect x="509" y="8" width="1.3" height="5" fill="#0a5a78"/><rect x="516" y="1" width="1.3" height="5" fill="#0a5a78"/><rect x="516" y="8" width="1.3" height="5" fill="#0a5a78"/><rect x="525" y="1" width="1.3" height="5" fill="#0a5a78"/><rect x="525" y="8" width="1.3" height="5" fill="#0a5a78"/><rect x="530" y="1" width="1.3" height="5" fill="#0a5a78"/><rect x="530" y="8" width="1.3" height="5" fill="#0a5a78"/><rect x="532" y="2" width="2" height="1" fill="#0a5a78"/><rect x="532" y="9" width="2" height="1" fill="#0a5a78"/><rect x="548" y="1" width="1.3" height="5" fill="#0a5a78"/><rect x="548" y="8" width="1.3" height="5" fill="#0a5a78"/><rect x="550" y="2" width="2" height="1" fill="#0a5a78"/><rect x="550" y="9" width="2" height="1" fill="#0a5a78"/><rect x="560" y="1" width="1.3" height="5" fill="#0a5a78"/><rect x="560" y="8" width="1.3" height="5" fill="#0a5a78"/></svg>
<div style="left:527px;top:110px;width:38px;height:15px;background:#1d6a86"></div>
<div style="left:528px;top:111px;font-size:10px;letter-spacing:-0.3px;color:#f0f6f8;line-height:12px;width:37px;overflow:hidden">Bongo 1</div>
<div style="left:0px;top:128px;width:453px;height:15px;background:#22272d"></div>
<svg style="position:absolute;left:0px;top:128px" width="453" height="15"><rect x="0" y="3" width="453" height="1" fill="#a8a4a0"/><rect x="0" y="10" width="453" height="1" fill="#a8a4a0"/><rect x="2" y="1" width="1" height="12" fill="#80c8f8"/><rect x="14" y="1" width="1" height="12" fill="#80c8f8"/><rect x="19" y="1" width="1" height="12" fill="#e07080"/><path d="M20 2 L27 3 L20 7 L27 10 L20 12Z" fill="#a8a8a8" opacity="0.7"/><rect x="24" y="1" width="1" height="12" fill="#80c8f8"/><path d="M25 2 L32 3 L25 7 L32 10 L25 12Z" fill="#a8a8a8" opacity="0.7"/><rect x="32" y="1" width="1" height="12" fill="#80c8f8"/><rect x="50" y="1" width="1" height="12" fill="#80c8f8"/><path d="M51 2 L58 3 L51 7 L58 10 L51 12Z" fill="#a8a8a8" opacity="0.7"/><rect x="54" y="1" width="1" height="12" fill="#80c8f8"/><rect x="62" y="1" width="1" height="12" fill="#80c8f8"/><rect x="66" y="1" width="1" height="12" fill="#80c8f8"/><rect x="70" y="1" width="1" height="12" fill="#80c8f8"/><rect x="75" y="1" width="1" height="12" fill="#e07080"/><path d="M76 2 L83 3 L76 7 L83 10 L76 12Z" fill="#a8a8a8" opacity="0.7"/><rect x="93" y="1" width="1" height="12" fill="#80c8f8"/><rect x="97" y="1" width="1" height="12" fill="#80c8f8"/><rect x="101" y="1" width="1" height="12" fill="#80c8f8"/><rect x="109" y="1" width="1" height="12" fill="#80c8f8"/><path d="M110 2 L117 3 L110 7 L117 10 L110 12Z" fill="#a8a8a8" opacity="0.7"/><rect x="113" y="1" width="1" height="12" fill="#80c8f8"/><rect x="125" y="1" width="1" height="12" fill="#80c8f8"/><path d="M126 2 L133 3 L126 7 L133 10 L126 12Z" fill="#a8a8a8" opacity="0.7"/><rect x="137" y="1" width="1" height="12" fill="#80c8f8"/><path d="M138 2 L145 3 L138 7 L145 10 L138 12Z" fill="#a8a8a8" opacity="0.7"/><rect x="141" y="1" width="1" height="12" fill="#80c8f8"/><rect x="146" y="1" width="1" height="12" fill="#80c8f8"/><rect x="151" y="1" width="1" height="12" fill="#e07080"/><rect x="169" y="1" width="1" height="12" fill="#80c8f8"/><path d="M170 2 L177 3 L170 7 L177 10 L170 12Z" fill="#a8a8a8" opacity="0.7"/><rect x="181" y="1" width="1" height="12" fill="#80c8f8"/><rect x="199" y="1" width="1" height="12" fill="#80c8f8"/><rect x="204" y="1" width="1" height="12" fill="#80c8f8"/><rect x="222" y="1" width="1" height="12" fill="#80c8f8"/><rect x="230" y="1" width="1" height="12" fill="#80c8f8"/><rect x="234" y="1" width="1" height="12" fill="#80c8f8"/><rect x="242" y="1" width="1" height="12" fill="#80c8f8"/><rect x="250" y="1" width="1" height="12" fill="#80c8f8"/><rect x="255" y="1" width="1" height="12" fill="#80c8f8"/><rect x="267" y="1" width="1" height="12" fill="#80c8f8"/><rect x="272" y="1" width="1" height="12" fill="#80c8f8"/><rect x="290" y="1" width="1" height="12" fill="#80c8f8"/><rect x="298" y="1" width="1" height="12" fill="#80c8f8"/><rect x="306" y="1" width="1" height="12" fill="#80c8f8"/><rect x="324" y="1" width="1" height="12" fill="#80c8f8"/><path d="M325 2 L332 3 L325 7 L332 10 L325 12Z" fill="#a8a8a8" opacity="0.7"/><rect x="329" y="1" width="1" height="12" fill="#e07080"/><path d="M330 2 L337 3 L330 7 L337 10 L330 12Z" fill="#a8a8a8" opacity="0.7"/><rect x="334" y="1" width="1" height="12" fill="#80c8f8"/><rect x="342" y="1" width="1" height="12" fill="#e07080"/><rect x="350" y="1" width="1" height="12" fill="#80c8f8"/><rect x="355" y="1" width="1" height="12" fill="#80c8f8"/><rect x="360" y="1" width="1" height="12" fill="#80c8f8"/><path d="M361 2 L368 3 L361 7 L368 10 L361 12Z" fill="#a8a8a8" opacity="0.7"/><rect x="368" y="1" width="1" height="12" fill="#80c8f8"/><rect x="380" y="1" width="1" height="12" fill="#80c8f8"/><rect x="392" y="1" width="1" height="12" fill="#80c8f8"/><rect x="410" y="1" width="1" height="12" fill="#e07080"/><rect x="415" y="1" width="1" height="12" fill="#80c8f8"/><path d="M416 2 L423 3 L416 7 L423 10 L416 12Z" fill="#a8a8a8" opacity="0.7"/><rect x="433" y="1" width="1" height="12" fill="#e07080"/><rect x="437" y="1" width="1" height="12" fill="#80c8f8"/><rect x="449" y="1" width="1" height="12" fill="#e07080"/><path d="M450 2 L457 3 L450 7 L457 10 L450 12Z" fill="#a8a8a8" opacity="0.7"/></svg>
<div style="left:527px;top:128px;width:573px;height:15px;background:#22272d"></div>
<svg style="position:absolute;left:527px;top:128px" width="573" height="15"><rect x="0" y="3" width="573" height="1" fill="#a8a4a0"/><rect x="0" y="10" width="573" height="1" fill="#a8a4a0"/><rect x="2" y="1" width="1" height="12" fill="#80c8f8"/><rect x="10" y="1" width="1" height="12" fill="#80c8f8"/><rect x="15" y="1" width="1" height="12" fill="#80c8f8"/><path d="M16 2 L23 3 L16 7 L23 10 L16 12Z" fill="#a8a8a8" opacity="0.7"/><rect x="20" y="1" width="1" height="12" fill="#e07080"/><rect x="24" y="1" width="1" height="12" fill="#e07080"/><path d="M25 2 L32 3 L25 7 L32 10 L25 12Z" fill="#a8a8a8" opacity="0.7"/><rect x="29" y="1" width="1" height="12" fill="#80c8f8"/><rect x="33" y="1" width="1" height="12" fill="#80c8f8"/><rect x="41" y="1" width="1" height="12" fill="#80c8f8"/><rect x="45" y="1" width="1" height="12" fill="#80c8f8"/><rect x="53" y="1" width="1" height="12" fill="#80c8f8"/><rect x="58" y="1" width="1" height="12" fill="#e07080"/><path d="M59 2 L66 3 L59 7 L66 10 L59 12Z" fill="#a8a8a8" opacity="0.7"/><rect x="63" y="1" width="1" height="12" fill="#80c8f8"/><rect x="81" y="1" width="1" height="12" fill="#e07080"/><rect x="86" y="1" width="1" height="12" fill="#e07080"/><rect x="91" y="1" width="1" height="12" fill="#80c8f8"/><path d="M92 2 L99 3 L92 7 L99 10 L92 12Z" fill="#a8a8a8" opacity="0.7"/><rect x="99" y="1" width="1" height="12" fill="#80c8f8"/><rect x="107" y="1" width="1" height="12" fill="#80c8f8"/><rect x="115" y="1" width="1" height="12" fill="#80c8f8"/><path d="M116 2 L123 3 L116 7 L123 10 L116 12Z" fill="#a8a8a8" opacity="0.7"/><rect x="123" y="1" width="1" height="12" fill="#80c8f8"/><rect x="141" y="1" width="1" height="12" fill="#e07080"/><rect x="146" y="1" width="1" height="12" fill="#80c8f8"/><path d="M147 2 L154 3 L147 7 L154 10 L147 12Z" fill="#a8a8a8" opacity="0.7"/><rect x="150" y="1" width="1" height="12" fill="#80c8f8"/><path d="M151 2 L158 3 L151 7 L158 10 L151 12Z" fill="#a8a8a8" opacity="0.7"/><rect x="158" y="1" width="1" height="12" fill="#80c8f8"/><rect x="170" y="1" width="1" height="12" fill="#80c8f8"/><path d="M171 2 L178 3 L171 7 L178 10 L171 12Z" fill="#a8a8a8" opacity="0.7"/><rect x="178" y="1" width="1" height="12" fill="#80c8f8"/><rect x="182" y="1" width="1" height="12" fill="#80c8f8"/><rect x="194" y="1" width="1" height="12" fill="#80c8f8"/><rect x="212" y="1" width="1" height="12" fill="#80c8f8"/><rect x="230" y="1" width="1" height="12" fill="#e07080"/><path d="M231 2 L238 3 L231 7 L238 10 L231 12Z" fill="#a8a8a8" opacity="0.7"/><rect x="248" y="1" width="1" height="12" fill="#80c8f8"/><rect x="266" y="1" width="1" height="12" fill="#80c8f8"/><path d="M267 2 L274 3 L267 7 L274 10 L267 12Z" fill="#a8a8a8" opacity="0.7"/><rect x="284" y="1" width="1" height="12" fill="#80c8f8"/><path d="M285 2 L292 3 L285 7 L292 10 L285 12Z" fill="#a8a8a8" opacity="0.7"/><rect x="302" y="1" width="1" height="12" fill="#80c8f8"/><rect x="314" y="1" width="1" height="12" fill="#e07080"/><path d="M315 2 L322 3 L315 7 L322 10 L315 12Z" fill="#a8a8a8" opacity="0.7"/><rect x="326" y="1" width="1" height="12" fill="#80c8f8"/><path d="M327 2 L334 3 L327 7 L334 10 L327 12Z" fill="#a8a8a8" opacity="0.7"/><rect x="334" y="1" width="1" height="12" fill="#80c8f8"/><rect x="338" y="1" width="1" height="12" fill="#80c8f8"/><rect x="342" y="1" width="1" height="12" fill="#80c8f8"/><rect x="347" y="1" width="1" height="12" fill="#e07080"/><path d="M348 2 L355 3 L348 7 L355 10 L348 12Z" fill="#a8a8a8" opacity="0.7"/><rect x="352" y="1" width="1" height="12" fill="#80c8f8"/><rect x="357" y="1" width="1" height="12" fill="#80c8f8"/><path d="M358 2 L365 3 L358 7 L365 10 L358 12Z" fill="#a8a8a8" opacity="0.7"/><rect x="369" y="1" width="1" height="12" fill="#80c8f8"/><rect x="374" y="1" width="1" height="12" fill="#80c8f8"/><rect x="382" y="1" width="1" height="12" fill="#80c8f8"/><rect x="390" y="1" width="1" height="12" fill="#80c8f8"/><rect x="398" y="1" width="1" height="12" fill="#80c8f8"/><rect x="402" y="1" width="1" height="12" fill="#80c8f8"/><rect x="410" y="1" width="1" height="12" fill="#80c8f8"/><path d="M411 2 L418 3 L411 7 L418 10 L411 12Z" fill="#a8a8a8" opacity="0.7"/><rect x="414" y="1" width="1" height="12" fill="#80c8f8"/><rect x="422" y="1" width="1" height="12" fill="#e07080"/><path d="M423 2 L430 3 L423 7 L430 10 L423 12Z" fill="#a8a8a8" opacity="0.7"/><rect x="430" y="1" width="1" height="12" fill="#80c8f8"/><rect x="442" y="1" width="1" height="12" fill="#80c8f8"/><rect x="450" y="1" width="1" height="12" fill="#80c8f8"/><rect x="458" y="1" width="1" height="12" fill="#80c8f8"/><rect x="466" y="1" width="1" height="12" fill="#80c8f8"/><path d="M467 2 L474 3 L467 7 L474 10 L467 12Z" fill="#a8a8a8" opacity="0.7"/><rect x="471" y="1" width="1" height="12" fill="#80c8f8"/><path d="M472 2 L479 3 L472 7 L479 10 L472 12Z" fill="#a8a8a8" opacity="0.7"/><rect x="475" y="1" width="1" height="12" fill="#e07080"/><rect x="483" y="1" width="1" height="12" fill="#80c8f8"/><rect x="501" y="1" width="1" height="12" fill="#80c8f8"/><rect x="513" y="1" width="1" height="12" fill="#80c8f8"/><rect x="525" y="1" width="1" height="12" fill="#80c8f8"/><rect x="533" y="1" width="1" height="12" fill="#80c8f8"/><rect x="551" y="1" width="1" height="12" fill="#80c8f8"/><path d="M552 2 L559 3 L552 7 L559 10 L552 12Z" fill="#a8a8a8" opacity="0.7"/><rect x="556" y="1" width="1" height="12" fill="#80c8f8"/><path d="M557 2 L564 3 L557 7 L564 10 L557 12Z" fill="#a8a8a8" opacity="0.7"/><rect x="568" y="1" width="1" height="12" fill="#80c8f8"/><path d="M569 2 L576 3 L569 7 L576 10 L569 12Z" fill="#a8a8a8" opacity="0.7"/></svg>
<div style="left:239px;top:128px;width:38px;height:15px;background:#0c0e11;border-radius:0 3px 3px 0"></div>
<div style="left:247px;top:129px;font-size:10px;color:#f0f0f0;line-height:12px">ngo 2</div>
<svg style="position:absolute;left:239px;top:133px" width="8" height="9"><circle cx="4" cy="5" r="3" fill="none" stroke="#aaa" stroke-width="1.5"/></svg>
<div style="left:527px;top:128px;width:38px;height:15px;background:#0c0e11;border-radius:0 3px 3px 0"></div>
<div style="left:535px;top:129px;font-size:10px;color:#f0f0f0;line-height:12px">ngo 2</div>
<svg style="position:absolute;left:527px;top:133px" width="8" height="9"><circle cx="4" cy="5" r="3" fill="none" stroke="#aaa" stroke-width="1.5"/></svg>
<div style="left:814px;top:128px;width:38px;height:15px;background:#0c0e11;border-radius:0 3px 3px 0"></div>
<div style="left:822px;top:129px;font-size:10px;color:#f0f0f0;line-height:12px">ngo 2</div>
<svg style="position:absolute;left:814px;top:133px" width="8" height="9"><circle cx="4" cy="5" r="3" fill="none" stroke="#aaa" stroke-width="1.5"/></svg>
<div style="left:0px;top:182px;width:93px;height:15px;background:#72b4b8;border-top:1px solid #a8d8d8"></div>
<div style="left:243px;top:182px;width:278px;height:15px;background:#72b4b8;border-top:1px solid #a8d8d8"></div>
<div style="left:243px;top:182px;width:36px;height:15px;background:#4d8a8e;clip-path:polygon(0 0,100% 0,100% 75%,92% 100%,0 100%)"></div>
<svg style="position:absolute;left:247px;top:186px" width="11" height="10"><rect x="0" y="2" width="10" height="8" fill="#8aa8a8"/></svg>
<div style="left:262px;top:183px;font-size:10px;color:#f0f6f6;letter-spacing:-0.3px">ects</div>
<div style="left:527px;top:182px;width:213px;height:15px;background:#72b4b8;border-top:1px solid #a8d8d8"></div>
<div style="left:527px;top:182px;width:36px;height:15px;background:#4d8a8e;clip-path:polygon(0 0,100% 0,100% 75%,92% 100%,0 100%)"></div>
<svg style="position:absolute;left:531px;top:186px" width="11" height="10"><rect x="0" y="2" width="10" height="8" fill="#8aa8a8"/></svg>
<div style="left:546px;top:183px;font-size:10px;color:#f0f6f6;letter-spacing:-0.3px">ects</div>
<div style="left:742px;top:182px;width:142px;height:15px;background:#72b4b8;border-top:1px solid #a8d8d8"></div>
<div style="left:742px;top:182px;width:36px;height:15px;background:#4d8a8e;clip-path:polygon(0 0,100% 0,100% 75%,92% 100%,0 100%)"></div>
<svg style="position:absolute;left:746px;top:186px" width="11" height="10"><rect x="0" y="2" width="10" height="8" fill="#8aa8a8"/></svg>
<div style="left:761px;top:183px;font-size:10px;color:#f0f6f6;letter-spacing:-0.3px">ects</div>
<div style="left:886px;top:182px;width:6px;height:15px;background:#72b4b8;border-top:1px solid #a8d8d8"></div>
<div style="left:922px;top:182px;width:6px;height:15px;background:#72b4b8;border-top:1px solid #a8d8d8"></div>
<div style="left:958px;top:182px;width:6px;height:15px;background:#72b4b8;border-top:1px solid #a8d8d8"></div>
<div style="left:994px;top:182px;width:6px;height:15px;background:#72b4b8;border-top:1px solid #a8d8d8"></div>
<div style="left:1031px;top:182px;width:177px;height:15px;background:#72b4b8;border-top:1px solid #a8d8d8"></div>
<div style="left:1031px;top:182px;width:36px;height:15px;background:#4d8a8e;clip-path:polygon(0 0,100% 0,100% 75%,92% 100%,0 100%)"></div>
<svg style="position:absolute;left:1035px;top:186px" width="11" height="10"><rect x="0" y="2" width="10" height="8" fill="#8aa8a8"/></svg>
<div style="left:1050px;top:183px;font-size:10px;color:#f0f6f6;letter-spacing:-0.3px">ects</div>
</div>
<div style="left:1593px;top:86px;width:17px;height:284px;background:#9aa1a9"></div>
<div style="left:1594px;top:86px;width:15px;height:33px;background:linear-gradient(90deg,#d5d9de,#aeb4bb)"></div>
<div style="left:1594px;top:120px;width:15px;height:18px;background:linear-gradient(90deg,#cfd4d9,#b3b9c0)"></div>
<svg style="position:absolute;left:1597px;top:125px" width="9" height="6"><path d="M0 6 L4.5 0 L9 6Z" fill="#444"/></svg>
<div style="left:1595px;top:203px;width:13px;height:150px;background:linear-gradient(90deg,#545a61,#6c727a)"></div>
<div style="left:1596px;top:138px;width:11px;height:66px;background:linear-gradient(90deg,#c8cdd2,#a9afb6);border:1px solid #7c838a;border-radius:3px"></div>
<div style="left:1594px;top:352px;width:15px;height:18px;background:linear-gradient(90deg,#cfd4d9,#b3b9c0)"></div>
<svg style="position:absolute;left:1597px;top:357px" width="9" height="6"><path d="M0 0 L4.5 6 L9 0Z" fill="#444"/></svg>
<div style="left:1610px;top:86px;width:9px;height:904px;background:linear-gradient(90deg,#b3b9c0,#9aa1a8)"></div>
<div style="left:1609px;top:86px;width:1px;height:904px;background:#2a2e34"></div>
<div style="left:375px;top:370px;width:1235px;height:16px;background:#9ea5ad"></div>
<div style="left:375px;top:370px;width:1235px;height:1px;background:#15181c"></div>
<div style="left:377px;top:371px;width:16px;height:15px;background:linear-gradient(#c8cdd2,#aab1b8)"></div>
<svg style="position:absolute;left:380px;top:374px" width="8" height="9"><path d="M7 0 L0 4.5 L7 9Z" fill="#333"/></svg>
<div style="left:393px;top:372px;width:1072px;height:12px;background:#63686f;border-radius:2px"></div>
<div style="left:605px;top:372px;width:213px;height:12px;background:linear-gradient(#dfe3e7,#b4bac1);border-radius:3px;border:1px solid #8a9097"></div>
<div style="left:1466px;top:371px;width:16px;height:15px;background:linear-gradient(#c8cdd2,#aab1b8)"></div>
<svg style="position:absolute;left:1470px;top:374px" width="8" height="9"><path d="M0 0 L7 4.5 L0 9Z" fill="#333"/></svg>
<div style="left:1482px;top:371px;width:1px;height:15px;background:#555"></div>
<div style="left:1485px;top:371px;width:102px;height:15px;background:linear-gradient(#c8cdd2,#aab1b8)"></div>
<div style="left:1489px;top:375px;width:8px;height:5px;background:#333"></div>
<div style="left:1500px;top:377px;width:74px;height:2px;background:#555"></div>
<div style="left:1498px;top:372px;width:6px;height:12px;background:linear-gradient(90deg,#eee,#aaa);border:1px solid #777"></div>
<div style="left:1565px;top:375px;width:18px;height:5px;background:#333"></div>
<div style="left:1587px;top:371px;width:1px;height:15px;background:#555"></div>
<svg style="position:absolute;left:1590px;top:372px" width="18" height="13"><rect x="1" y="2" width="6" height="4" fill="none" stroke="#333"/><rect x="1" y="7" width="9" height="4" fill="none" stroke="#333"/><path d="M14 1 L14 12" stroke="#333" stroke-width="1.2"/></svg>
<div style="left:0px;top:385px;width:1610px;height:1px;background:#15181c"></div>
<div style="left:0px;top:386px;width:1610px;height:9px;background:linear-gradient(#b8bec5,#a7aeb5)"></div>
<svg style="position:absolute;left:860px;top:388px" width="55" height="5"><rect x="0" y="0" width="1" height="1" fill="#555"/><rect x="0" y="3" width="1" height="1" fill="#555"/><rect x="3" y="0" width="1" height="1" fill="#555"/><rect x="3" y="3" width="1" height="1" fill="#555"/><rect x="6" y="0" width="1" height="1" fill="#555"/><rect x="6" y="3" width="1" height="1" fill="#555"/><rect x="9" y="0" width="1" height="1" fill="#555"/><rect x="9" y="3" width="1" height="1" fill="#555"/><rect x="12" y="0" width="1" height="1" fill="#555"/><rect x="12" y="3" width="1" height="1" fill="#555"/><rect x="15" y="0" width="1" height="1" fill="#555"/><rect x="15" y="3" width="1" height="1" fill="#555"/><rect x="18" y="0" width="1" height="1" fill="#555"/><rect x="18" y="3" width="1" height="1" fill="#555"/><rect x="21" y="0" width="1" height="1" fill="#555"/><rect x="21" y="3" width="1" height="1" fill="#555"/><rect x="24" y="0" width="1" height="1" fill="#555"/><rect x="24" y="3" width="1" height="1" fill="#555"/><rect x="27" y="0" width="1" height="1" fill="#555"/><rect x="27" y="3" width="1" height="1" fill="#555"/><rect x="30" y="0" width="1" height="1" fill="#555"/><rect x="30" y="3" width="1" height="1" fill="#555"/><rect x="33" y="0" width="1" height="1" fill="#555"/><rect x="33" y="3" width="1" height="1" fill="#555"/><rect x="36" y="0" width="1" height="1" fill="#555"/><rect x="36" y="3" width="1" height="1" fill="#555"/><rect x="39" y="0" width="1" height="1" fill="#555"/><rect x="39" y="3" width="1" height="1" fill="#555"/><rect x="42" y="0" width="1" height="1" fill="#555"/><rect x="42" y="3" width="1" height="1" fill="#555"/><rect x="45" y="0" width="1" height="1" fill="#555"/><rect x="45" y="3" width="1" height="1" fill="#555"/><rect x="48" y="0" width="1" height="1" fill="#555"/><rect x="48" y="3" width="1" height="1" fill="#555"/><rect x="51" y="0" width="1" height="1" fill="#555"/><rect x="51" y="3" width="1" height="1" fill="#555"/></svg>
<div style="left:0px;top:395px;width:1610px;height:1px;background:#15181c"></div>
<div style="left:164px;top:396px;width:1446px;height:593px;background:#0d0f12"></div>
<div style="left:164px;top:396px;width:56px;height:593px;background:#a9b0b8;border-right:1px solid #101215"></div>
<div style="left:164px;top:397px;width:25px;height:14px;background:#2c3035"></div>
<svg style="position:absolute;left:172px;top:400px" width="9" height="9"><path d="M1 1 L8 8 M8 1 L1 8" stroke="#d8dce0" stroke-width="1.6"/></svg>
<div style="left:191px;top:397px;width:28px;height:14px;background:#2c3035"></div>
<svg style="position:absolute;left:192px;top:398px" width="26" height="12"><path d="M2 10 L7 4 L5 3 L10 1 L9 6 L8 5 L3 11Z" fill="#8a9096"/><rect x="13" y="2" width="11" height="8" fill="none" stroke="#c8ccd0" stroke-width="1.3"/></svg>
<div style="left:186px;top:415px;font-size:11px;color:#333">I/O</div>
<svg style="position:absolute;left:207px;top:421px" width="8" height="5"><path d="M0 0H8L4 5Z" fill="#444"/></svg>
<div style="left:164px;top:432px;width:56px;height:1px;background:#8d949b"></div>
<div style="left:164px;top:411px;width:56px;height:1px;background:#222"></div>
<div style="left:164px;top:851px;width:56px;height:1px;background:#8f969d"></div>
<div style="left:164px;top:855px;width:56px;font-size:10px;font-weight:bold;color:#333;text-align:center">入力</div>
<div style="left:164px;top:873px;width:56px;height:1px;background:#8f969d"></div>
<div style="left:164px;top:877px;width:56px;font-size:10px;font-weight:bold;color:#333;text-align:center">出力</div>
<div style="left:164px;top:896px;width:56px;height:1px;background:#8f969d"></div>
<div style="left:164px;top:900px;width:56px;font-size:10px;font-weight:bold;color:#333;text-align:center">ゴミ箱</div>
<div style="left:164px;top:918px;width:56px;height:1px;background:#8f969d"></div>
<div style="left:164px;top:922px;width:56px;font-size:10px;font-weight:bold;color:#333;text-align:center">外部</div>
<div style="left:164px;top:941px;width:56px;height:1px;background:#8f969d"></div>
<div style="left:164px;top:945px;width:56px;font-size:10px;font-weight:bold;color:#333;text-align:center">インスト...</div>
<div style="left:164px;top:964px;width:56px;height:1px;background:#8f969d"></div>
<div style="left:164px;top:968px;width:56px;font-size:10px;font-weight:bold;color:#333;text-align:center">パンク</div>
<svg style="position:absolute;left:170px;top:781px" width="44" height="14"><rect x="1" y="2" width="6" height="10" fill="#333" stroke="#999"/><path d="M20 1 L20 13 M17 4 L20 1 L23 4 M17 10 L20 13 L23 10" stroke="#333" stroke-width="1.3" fill="none"/><rect x="35" y="1" width="8" height="13" fill="#1a1c20" stroke="#5ab0e0"/><rect x="38" y="4" width="2" height="7" fill="#ddd"/></svg>
<div style="left:164px;top:800px;width:56px;height:1px;background:#8f969d"></div>
<svg style="position:absolute;left:170px;top:805px" width="44" height="16"><rect x="1" y="1" width="7" height="13" fill="#1a1c20" stroke="#5ab0e0"/><rect x="3.5" y="4" width="2" height="7" fill="#ddd"/><path d="M13 7 L27 7 M16 4 L13 7 L16 10 M24 4 L27 7 L24 10" stroke="#333" stroke-width="1.3" fill="none"/><rect x="34" y="1" width="10" height="14" fill="#333"/><rect x="38" y="4" width="2" height="7" fill="#ddd"/></svg>
<div style="left:164px;top:826px;width:56px;height:1px;background:#8f969d"></div>
<svg style="position:absolute;left:0;top:0" width="0" height="0"><defs><g id="msc"><rect x="2" y="1" width="12" height="1" fill="#2f74a8"/><text x="30.5" y="7.5" font-size="9" font-weight="bold" fill="#4f9ad0" text-anchor="end" font-family="Liberation Sans">10</text><rect x="2" y="25" width="12" height="1" fill="#2f74a8"/><text x="30.5" y="28.5" font-size="9" font-weight="bold" fill="#4f9ad0" text-anchor="end" font-family="Liberation Sans">6</text><rect x="2" y="61" width="12" height="1" fill="#2f74a8"/><text x="30.5" y="64.5" font-size="9" font-weight="bold" fill="#4f9ad0" text-anchor="end" font-family="Liberation Sans">0</text><rect x="2" y="98" width="12" height="1" fill="#2f74a8"/><text x="30.5" y="101.5" font-size="9" font-weight="bold" fill="#4f9ad0" text-anchor="end" font-family="Liberation Sans">-6</text><rect x="2" y="128" width="12" height="1" fill="#2f74a8"/><text x="30.5" y="131.5" font-size="9" font-weight="bold" fill="#4f9ad0" text-anchor="end" font-family="Liberation Sans">-12</text><rect x="2" y="164" width="12" height="1" fill="#2f74a8"/><text x="30.5" y="167.5" font-size="9" font-weight="bold" fill="#4f9ad0" text-anchor="end" font-family="Liberation Sans">-24</text><rect x="2" y="201" width="12" height="1" fill="#2f74a8"/><text x="30.5" y="204.5" font-size="9" font-weight="bold" fill="#4f9ad0" text-anchor="end" font-family="Liberation Sans">-36</text><rect x="2" y="225" width="12" height="1" fill="#2f74a8"/><text x="30.5" y="228.5" font-size="9" font-weight="bold" fill="#4f9ad0" text-anchor="end" font-family="Liberation Sans">-48</text><rect x="2" y="245" width="12" height="1" fill="#2f74a8"/><text x="30.5" y="248.5" font-size="9" font-weight="bold" fill="#4f9ad0" text-anchor="end" font-family="Liberation Sans">-72</text></g><g id="ftk"><rect x="4" y="24" width="4" height="1" fill="#7a8088"/><rect x="11" y="24" width="4" height="1" fill="#7a8088"/><rect x="4" y="44" width="4" height="1" fill="#7a8088"/><rect x="11" y="44" width="4" height="1" fill="#7a8088"/><rect x="4" y="64" width="4" height="1" fill="#7a8088"/><rect x="11" y="64" width="4" height="1" fill="#7a8088"/><rect x="4" y="82" width="4" height="1" fill="#7a8088"/><rect x="11" y="82" width="4" height="1" fill="#7a8088"/><rect x="4" y="102" width="4" height="1" fill="#7a8088"/><rect x="11" y="102" width="4" height="1" fill="#7a8088"/><rect x="4" y="136" width="4" height="1" fill="#7a8088"/><rect x="11" y="136" width="4" height="1" fill="#7a8088"/></g><g id="ms"><path d="M5.5 11 V5.5 H11.5 V11 M8.5 5.5 V11" stroke="#333" stroke-width="1.3" fill="none"/><path d="M28 5.5 H22.5 V8.2 H28 V11 H22" stroke="#333" stroke-width="1.3" fill="none"/></g><g id="ao"><g stroke="#111" stroke-width="1.1" fill="none"><path d="M0.5 2 V10.5"/><path d="M5 6 Q8 5.8 11 6.8"/><path d="M13.5 2 V10.5 M14 5 L17.5 7"/><path d="M20 4.5 H29 M25.5 2 V10.5 H24 M25 5 L20.5 9.5"/><path d="M32.5 3 V10.5"/></g></g><g id="rd"><g stroke="#222" stroke-width="1.1" fill="none"><path d="M8.5 3 V7.5 M12.5 2.5 V7 Q12.5 10 10 11.5"/><path d="M15 6.5 H20"/><path d="M23 2.5 V11 M23.5 5.5 L26.5 7.5 M25.5 2.5 L26.5 4 M27.5 2 L28.5 3.5"/></g></g><g id="rm"><path d="M22 5 L24 5 L26 3 L26 11 L24 9 L22 9Z" fill="#444"/><path d="M27.5 4 Q29.5 7 27.5 10" stroke="#444" stroke-width="1" fill="none"/></g></defs></svg>
<div style="left:221px;top:396px;width:33px;height:593px;overflow:hidden">
<div style="left:0px;top:0px;width:33px;height:3px;background:#1ef0a0"></div>
<div style="left:0px;top:4px;width:33px;height:255px;background:#1e2125;box-shadow:inset 1px 0 0 #16181b,inset -1px 0 0 #16181b"></div>
<svg style="position:absolute;left:0px;top:4px" width="33" height="255"><use href="#msc"/></svg>
<div style="left:0px;top:259px;width:33px;height:6px;background:#141619"></div>
<div style="left:1px;top:261px;width:15px;height:3px;background:#33383e"></div>
<div style="left:17px;top:261px;width:15px;height:3px;background:#4a8ec0"></div>
<div class="il" style="left:0px;top:265px;width:33px;height:20px;"></div>
<div class="lt" style="left:3px;top:268px;color:#e8eef4;width:30px">InputL</div>
<div style="left:0px;top:285px;width:33px;height:20px;background:#16181b"></div>
<div class="lt" style="left:3px;top:289px;color:#e8eef4;width:30px">MainC</div>
<div style="left:0px;top:305px;width:33px;height:228px;background:#a9b0b8"></div>
<div class="pt" style="left:3px;top:313px;width:28px;height:3px;"></div>
<div class="ph" style="left:15px;top:308px;width:6px;height:12px;"></div>
<div class="vb" style="left:3px;top:325px;width:27px;height:14px;background:linear-gradient(#bcc3ca,#a6adb4);border:1px solid #7c838a"></div>
<div class="vt" style="left:3px;top:326px;width:27px;">-oo</div>
<div style="left:0px;top:343px;width:33px;height:1px;background:#8a9198"></div>
<div style="left:16px;top:344px;width:1px;height:14px;background:#8a9198"></div>
<svg style="position:absolute;left:0px;top:344px" width="33" height="14"><circle cx="8" cy="7" r="3" fill="#444"/><use href="#rm"/></svg>
<div style="left:0px;top:357px;width:33px;height:1px;background:#8a9198"></div>
<div class="fs" style="left:9px;top:531px;width:15px;height:-7px;"></div>
<svg style="position:absolute;left:7px;top:364px" width="19" height="170"><use href="#ftk"/></svg>
<div style="left:15px;top:372px;width:2px;height:149px;background:#15171a"></div>
<div class="hl" style="left:9px;top:503px;width:15px;height:28px;"></div>
<div style="left:0px;top:533px;width:33px;height:14px;background:#b1b8bf;border-top:1px solid #7c838a"></div>
<div style="left:17px;top:533px;width:16px;height:14px;background:#9ad36a"></div>
<div style="left:16px;top:533px;width:1px;height:14px;background:#8a9198"></div>
<svg style="position:absolute;left:0px;top:533px" width="33" height="14"><use href="#ms"/></svg>
<div style="left:0px;top:547px;width:33px;height:15px;background:#aab1b8;border-top:1px solid #222"></div>
<svg style="position:absolute;left:0px;top:548px" width="33" height="14"><use href="#ao"/></svg>
<div style="left:0px;top:562px;width:33px;height:15px;background:#1ef0a0"></div>
<div style="left:-6px;top:563px;font-size:10px;letter-spacing:-0.6px;color:#0a3a2a;text-align:center;width:45px;overflow:hidden;line-height:13px;clip-path:inset(0 6px 0 6px)">Trigger</div>
</div>
<div style="left:255px;top:396px;width:33px;height:593px;overflow:hidden">
<div style="left:0px;top:0px;width:33px;height:3px;background:#1d5c6c"></div>
<div style="left:0px;top:4px;width:33px;height:255px;background:#1e2125;box-shadow:inset 1px 0 0 #16181b,inset -1px 0 0 #16181b"></div>
<svg style="position:absolute;left:0px;top:4px" width="33" height="255"><use href="#msc"/></svg>
<div style="left:0px;top:259px;width:33px;height:6px;background:#141619"></div>
<div style="left:1px;top:261px;width:15px;height:3px;background:#33383e"></div>
<div style="left:17px;top:261px;width:15px;height:3px;background:#33383e"></div>
<div class="il" style="left:0px;top:265px;width:33px;height:20px;"></div>
<div class="lt" style="left:3px;top:268px;color:#e8eef4;width:30px">InptL+</div>
<div style="left:0px;top:285px;width:33px;height:20px;background:#16181b"></div>
<div class="lt" style="left:3px;top:289px;color:#e8eef4;width:30px">Drums</div>
<div style="left:0px;top:305px;width:33px;height:228px;background:#a9b0b8"></div>
<div class="pt" style="left:3px;top:313px;width:28px;height:3px;"></div>
<div class="ph" style="left:15px;top:308px;width:6px;height:12px;"></div>
<div class="vb" style="left:3px;top:325px;width:27px;height:14px;background:linear-gradient(#bcc3ca,#a6adb4);border:1px solid #7c838a"></div>
<div class="vt" style="left:3px;top:326px;width:27px;">-4.4</div>
<div style="left:0px;top:343px;width:33px;height:1px;background:#8a9198"></div>
<div style="left:16px;top:344px;width:1px;height:14px;background:#8a9198"></div>
<svg style="position:absolute;left:0px;top:344px" width="33" height="14"><circle cx="8" cy="7" r="3" fill="#444"/><use href="#rm"/></svg>
<div style="left:0px;top:357px;width:33px;height:1px;background:#8a9198"></div>
<div class="fs" style="left:9px;top:437px;width:15px;height:87px;"></div>
<svg style="position:absolute;left:7px;top:364px" width="19" height="170"><use href="#ftk"/></svg>
<div style="left:15px;top:372px;width:2px;height:149px;background:#15171a"></div>
<div class="hl" style="left:9px;top:409px;width:15px;height:28px;"></div>
<div style="left:0px;top:533px;width:33px;height:14px;background:#b1b8bf;border-top:1px solid #7c838a"></div>
<div style="left:16px;top:533px;width:1px;height:14px;background:#8a9198"></div>
<svg style="position:absolute;left:0px;top:533px" width="33" height="14"><use href="#ms"/></svg>
<div style="left:0px;top:547px;width:33px;height:15px;background:#aab1b8;border-top:1px solid #222"></div>
<svg style="position:absolute;left:0px;top:548px" width="33" height="14"><use href="#ao"/></svg>
<div style="left:0px;top:562px;width:33px;height:15px;background:#1d5c6c"></div>
<div style="left:-6px;top:563px;font-size:10px;letter-spacing:-0.6px;color:#d0e0e4;text-align:center;width:45px;overflow:hidden;line-height:13px;clip-path:inset(0 6px 0 6px)">KICK</div>
</div>
<div style="left:289px;top:396px;width:33px;height:593px;overflow:hidden">
<div style="left:0px;top:0px;width:33px;height:3px;background:#215e6c"></div>
<div style="left:0px;top:4px;width:33px;height:255px;background:#1e2125;box-shadow:inset 1px 0 0 #16181b,inset -1px 0 0 #16181b"></div>
<svg style="position:absolute;left:0px;top:4px" width="33" height="255"><use href="#msc"/></svg>
<div style="left:0px;top:259px;width:33px;height:6px;background:#141619"></div>
<div style="left:1px;top:261px;width:15px;height:3px;background:#4a8ec0"></div>
<div style="left:17px;top:261px;width:15px;height:3px;background:#33383e"></div>
<div class="il" style="left:0px;top:265px;width:33px;height:20px;"></div>
<div class="lt" style="left:3px;top:268px;color:#e8a030;width:30px">Mojito</div>
<div style="left:0px;top:285px;width:33px;height:20px;background:#16181b"></div>
<div class="lt" style="left:3px;top:289px;color:#e8a030;width:30px">Drums</div>
<div style="left:0px;top:305px;width:33px;height:228px;background:#a9b0b8"></div>
<div class="pt" style="left:3px;top:313px;width:28px;height:3px;"></div>
<div class="ph" style="left:15px;top:308px;width:6px;height:12px;"></div>
<div class="vb" style="left:3px;top:325px;width:27px;height:14px;background:linear-gradient(#bcc3ca,#a6adb4);border:1px solid #7c838a"></div>
<div class="vt" style="left:3px;top:326px;width:27px;">-1.2</div>
<div style="left:0px;top:343px;width:33px;height:1px;background:#8a9198"></div>
<div style="left:16px;top:344px;width:1px;height:14px;background:#8a9198"></div>
<svg style="position:absolute;left:0px;top:344px" width="33" height="14"><circle cx="8" cy="7" r="3" fill="#444"/><use href="#rm"/></svg>
<div style="left:0px;top:357px;width:33px;height:1px;background:#8a9198"></div>
<div class="fs" style="left:9px;top:426px;width:15px;height:98px;"></div>
<svg style="position:absolute;left:7px;top:364px" width="19" height="170"><use href="#ftk"/></svg>
<div style="left:15px;top:372px;width:2px;height:149px;background:#15171a"></div>
<div class="hl" style="left:9px;top:398px;width:15px;height:28px;"></div>
<div style="left:0px;top:533px;width:33px;height:14px;background:#b1b8bf;border-top:1px solid #7c838a"></div>
<div style="left:16px;top:533px;width:1px;height:14px;background:#8a9198"></div>
<svg style="position:absolute;left:0px;top:533px" width="33" height="14"><use href="#ms"/></svg>
<div style="left:0px;top:547px;width:33px;height:15px;background:#aab1b8;border-top:1px solid #222"></div>
<svg style="position:absolute;left:0px;top:548px" width="33" height="14"><use href="#ao"/></svg>
<div style="left:0px;top:562px;width:33px;height:15px;background:#215e6c"></div>
<div style="left:-6px;top:563px;font-size:10px;letter-spacing:-0.6px;color:#d0e0e4;text-align:center;width:45px;overflow:hidden;line-height:13px;clip-path:inset(0 6px 0 6px)">Mojito</div>
</div>
<div style="left:323px;top:396px;width:33px;height:593px;overflow:hidden">
<div style="left:0px;top:0px;width:33px;height:3px;background:#00d8f8"></div>
<div style="left:0px;top:4px;width:33px;height:255px;background:#1e2125;box-shadow:inset 1px 0 0 #16181b,inset -1px 0 0 #16181b"></div>
<svg style="position:absolute;left:0px;top:4px" width="33" height="255"><use href="#msc"/></svg>
<div class="mb" style="left:2px;top:177px;width:6px;height:81px;"></div>
<div class="mb" style="left:9px;top:177px;width:6px;height:81px;"></div>
<div style="left:0px;top:259px;width:33px;height:6px;background:#141619"></div>
<div style="left:1px;top:261px;width:15px;height:3px;background:#4a8ec0"></div>
<div style="left:17px;top:261px;width:15px;height:3px;background:#33383e"></div>
<div class="il" style="left:0px;top:265px;width:33px;height:20px;"></div>
<div class="lt" style="left:3px;top:268px;color:#e8eef4;width:30px">InptL+</div>
<div style="left:0px;top:285px;width:33px;height:20px;background:#16181b"></div>
<div class="lt" style="left:3px;top:289px;color:#e8eef4;width:30px">Drums</div>
<div style="left:0px;top:305px;width:33px;height:228px;background:#d6eef9"></div>
<div class="pt" style="left:3px;top:313px;width:28px;height:3px;"></div>
<div class="ph" style="left:15px;top:308px;width:6px;height:12px;"></div>
<div class="vb" style="left:3px;top:325px;width:27px;height:14px;background:linear-gradient(#c4e6f6,#a8d4ec);border:1px solid #6aa8d0"></div>
<div class="vt" style="left:3px;top:326px;width:27px;">-14.6</div>
<div style="left:0px;top:343px;width:33px;height:1px;background:#8a9198"></div>
<div style="left:16px;top:344px;width:1px;height:14px;background:#8a9198"></div>
<svg style="position:absolute;left:0px;top:344px" width="33" height="14"><circle cx="8" cy="7" r="3" fill="#444"/><use href="#rm"/></svg>
<div style="left:0px;top:357px;width:33px;height:1px;background:#8a9198"></div>
<div class="fs" style="left:9px;top:464px;width:15px;height:60px;"></div>
<svg style="position:absolute;left:7px;top:364px" width="19" height="170"><use href="#ftk"/></svg>
<div style="left:15px;top:372px;width:2px;height:149px;background:#15171a"></div>
<div class="hl" style="left:9px;top:436px;width:15px;height:28px;"></div>
<div style="left:0px;top:533px;width:33px;height:14px;background:#dbf0fa;border-top:1px solid #7c838a"></div>
<div style="left:16px;top:533px;width:1px;height:14px;background:#8a9198"></div>
<svg style="position:absolute;left:0px;top:533px" width="33" height="14"><use href="#ms"/></svg>
<div style="left:0px;top:547px;width:33px;height:15px;background:#dbf0fa;border-top:1px solid #222"></div>
<svg style="position:absolute;left:0px;top:548px" width="33" height="14"><use href="#ao"/></svg>
<div style="left:0px;top:562px;width:33px;height:15px;background:#00d8f8"></div>
<div style="left:-6px;top:563px;font-size:10px;letter-spacing:-0.6px;color:#0a2a50;text-align:center;width:45px;overflow:hidden;line-height:13px;clip-path:inset(0 6px 0 6px)">Druoop1</div>
</div>
<div style="left:357px;top:396px;width:33px;height:593px;overflow:hidden">
<div style="left:0px;top:0px;width:33px;height:3px;background:#1030f0"></div>
<div style="left:0px;top:4px;width:33px;height:255px;background:#1e2125;box-shadow:inset 1px 0 0 #16181b,inset -1px 0 0 #16181b"></div>
<svg style="position:absolute;left:0px;top:4px" width="33" height="255"><use href="#msc"/></svg>
<div style="left:0px;top:259px;width:33px;height:6px;background:#141619"></div>
<div style="left:1px;top:261px;width:15px;height:3px;background:#4a8ec0"></div>
<div style="left:17px;top:261px;width:15px;height:3px;background:#33383e"></div>
<div class="il" style="left:0px;top:265px;width:33px;height:20px;"></div>
<div class="lt" style="left:3px;top:268px;color:#e8eef4;width:30px">InptL+</div>
<div style="left:0px;top:285px;width:33px;height:20px;background:#16181b"></div>
<div class="lt" style="left:3px;top:289px;color:#e8eef4;width:30px">Drums</div>
<div style="left:0px;top:305px;width:33px;height:228px;background:#a9b0b8"></div>
<div class="pt" style="left:3px;top:313px;width:28px;height:3px;"></div>
<div class="ph" style="left:15px;top:308px;width:6px;height:12px;"></div>
<div class="vb" style="left:3px;top:325px;width:27px;height:14px;background:linear-gradient(#bcc3ca,#a6adb4);border:1px solid #7c838a"></div>
<div class="vt" style="left:3px;top:326px;width:27px;">+4.1</div>
<div style="left:0px;top:343px;width:33px;height:1px;background:#8a9198"></div>
<div style="left:16px;top:344px;width:1px;height:14px;background:#8a9198"></div>
<svg style="position:absolute;left:0px;top:344px" width="33" height="14"><circle cx="8" cy="7" r="3" fill="#444"/><use href="#rm"/></svg>
<div style="left:0px;top:357px;width:33px;height:1px;background:#8a9198"></div>
<div class="fs" style="left:9px;top:408px;width:15px;height:116px;"></div>
<svg style="position:absolute;left:7px;top:364px" width="19" height="170"><use href="#ftk"/></svg>
<div style="left:15px;top:372px;width:2px;height:149px;background:#15171a"></div>
<div class="hl" style="left:9px;top:380px;width:15px;height:28px;"></div>
<div style="left:0px;top:533px;width:33px;height:14px;background:#b1b8bf;border-top:1px solid #7c838a"></div>
<div style="left:16px;top:533px;width:1px;height:14px;background:#8a9198"></div>
<svg style="position:absolute;left:0px;top:533px" width="33" height="14"><use href="#ms"/></svg>
<div style="left:0px;top:547px;width:33px;height:15px;background:#aab1b8;border-top:1px solid #222"></div>
<svg style="position:absolute;left:0px;top:548px" width="33" height="14"><use href="#ao"/></svg>
<div style="left:0px;top:562px;width:33px;height:15px;background:#1030f0"></div>
<div style="left:-6px;top:563px;font-size:10px;letter-spacing:-0.6px;color:#e8f0ff;text-align:center;width:45px;overflow:hidden;line-height:13px;clip-path:inset(0 6px 0 6px)">Druoop2</div>
</div>
<div style="left:391px;top:396px;width:33px;height:593px;overflow:hidden">
<div style="left:0px;top:0px;width:33px;height:3px;background:#00d0f0"></div>
<div style="left:0px;top:4px;width:33px;height:255px;background:#1e2125;box-shadow:inset 1px 0 0 #16181b,inset -1px 0 0 #16181b"></div>
<svg style="position:absolute;left:0px;top:4px" width="33" height="255"><use href="#msc"/></svg>
<div style="left:0px;top:259px;width:33px;height:6px;background:#141619"></div>
<div style="left:1px;top:261px;width:15px;height:3px;background:#33383e"></div>
<div style="left:17px;top:261px;width:15px;height:3px;background:#33383e"></div>
<div class="il" style="left:0px;top:265px;width:33px;height:20px;"></div>
<div class="lt" style="left:3px;top:268px;color:#e8eef4;width:30px">InptL+</div>
<div style="left:0px;top:285px;width:33px;height:20px;background:#16181b"></div>
<div class="lt" style="left:3px;top:289px;color:#e8eef4;width:30px">Drums</div>
<div style="left:0px;top:305px;width:33px;height:228px;background:#a9b0b8"></div>
<div class="pt" style="left:3px;top:313px;width:28px;height:3px;"></div>
<div class="ph" style="left:15px;top:308px;width:6px;height:12px;"></div>
<div class="vb" style="left:3px;top:325px;width:27px;height:14px;background:linear-gradient(#bcc3ca,#a6adb4);border:1px solid #7c838a"></div>
<div class="vt" style="left:3px;top:326px;width:27px;">0dB</div>
<div style="left:0px;top:343px;width:33px;height:1px;background:#8a9198"></div>
<div style="left:16px;top:344px;width:1px;height:14px;background:#8a9198"></div>
<svg style="position:absolute;left:0px;top:344px" width="33" height="14"><circle cx="8" cy="7" r="3" fill="#444"/><use href="#rm"/></svg>
<div style="left:0px;top:357px;width:33px;height:1px;background:#8a9198"></div>
<div class="fs" style="left:9px;top:422px;width:15px;height:102px;"></div>
<svg style="position:absolute;left:7px;top:364px" width="19" height="170"><use href="#ftk"/></svg>
<div style="left:15px;top:372px;width:2px;height:149px;background:#15171a"></div>
<div class="hl" style="left:9px;top:394px;width:15px;height:28px;"></div>
<div style="left:0px;top:533px;width:33px;height:14px;background:#b1b8bf;border-top:1px solid #7c838a"></div>
<div style="left:16px;top:533px;width:1px;height:14px;background:#8a9198"></div>
<svg style="position:absolute;left:0px;top:533px" width="33" height="14"><use href="#ms"/></svg>
<div style="left:0px;top:547px;width:33px;height:15px;background:#aab1b8;border-top:1px solid #222"></div>
<svg style="position:absolute;left:0px;top:548px" width="33" height="14"><use href="#ao"/></svg>
<div style="left:0px;top:562px;width:33px;height:15px;background:#00d0f0"></div>
<div style="left:-6px;top:563px;font-size:10px;letter-spacing:-0.6px;color:#0a2a50;text-align:center;width:45px;overflow:hidden;line-height:13px;clip-path:inset(0 6px 0 6px)">Bongo1</div>
</div>
<div style="left:425px;top:396px;width:33px;height:593px;overflow:hidden">
<div style="left:0px;top:0px;width:33px;height:3px;background:#0a90c0"></div>
<div style="left:0px;top:4px;width:33px;height:255px;background:#1e2125;box-shadow:inset 1px 0 0 #16181b,inset -1px 0 0 #16181b"></div>
<svg style="position:absolute;left:0px;top:4px" width="33" height="255"><use href="#msc"/></svg>
<div style="left:0px;top:259px;width:33px;height:6px;background:#141619"></div>
<div style="left:1px;top:261px;width:15px;height:3px;background:#33383e"></div>
<div style="left:17px;top:261px;width:15px;height:3px;background:#33383e"></div>
<div class="il" style="left:0px;top:265px;width:33px;height:20px;"></div>
<div class="lt" style="left:3px;top:268px;color:#e8eef4;width:30px">InptL+</div>
<div style="left:0px;top:285px;width:33px;height:20px;background:#16181b"></div>
<div class="lt" style="left:3px;top:289px;color:#e8eef4;width:30px">Drums</div>
<div style="left:0px;top:305px;width:33px;height:228px;background:#a9b0b8"></div>
<div class="pt" style="left:3px;top:313px;width:28px;height:3px;"></div>
<div class="ph" style="left:15px;top:308px;width:6px;height:12px;"></div>
<div class="vb" style="left:3px;top:325px;width:27px;height:14px;background:linear-gradient(#bcc3ca,#a6adb4);border:1px solid #7c838a"></div>
<div class="vt" style="left:3px;top:326px;width:27px;">0dB</div>
<div style="left:0px;top:343px;width:33px;height:1px;background:#8a9198"></div>
<div style="left:16px;top:344px;width:1px;height:14px;background:#8a9198"></div>
<svg style="position:absolute;left:0px;top:344px" width="33" height="14"><circle cx="8" cy="7" r="3" fill="#444"/><use href="#rm"/></svg>
<div style="left:0px;top:357px;width:33px;height:1px;background:#8a9198"></div>
<div class="fs" style="left:9px;top:422px;width:15px;height:102px;"></div>
<svg style="position:absolute;left:7px;top:364px" width="19" height="170"><use href="#ftk"/></svg>
<div style="left:15px;top:372px;width:2px;height:149px;background:#15171a"></div>
<div class="hl" style="left:9px;top:394px;width:15px;height:28px;"></div>
<div style="left:0px;top:533px;width:33px;height:14px;background:#b1b8bf;border-top:1px solid #7c838a"></div>
<div style="left:16px;top:533px;width:1px;height:14px;background:#8a9198"></div>
<svg style="position:absolute;left:0px;top:533px" width="33" height="14"><use href="#ms"/></svg>
<div style="left:0px;top:547px;width:33px;height:15px;background:#aab1b8;border-top:1px solid #222"></div>
<svg style="position:absolute;left:0px;top:548px" width="33" height="14"><use href="#ao"/></svg>
<div style="left:0px;top:562px;width:33px;height:15px;background:#0a90c0"></div>
<div style="left:-6px;top:563px;font-size:10px;letter-spacing:-0.6px;color:#0a2a40;text-align:center;width:45px;overflow:hidden;line-height:13px;clip-path:inset(0 6px 0 6px)">Bongo2</div>
</div>
<div style="left:459px;top:396px;width:33px;height:593px;overflow:hidden">
<div style="left:0px;top:0px;width:33px;height:3px;background:#5aa8a8"></div>
<div style="left:0px;top:4px;width:33px;height:255px;background:#1e2125;box-shadow:inset 1px 0 0 #16181b,inset -1px 0 0 #16181b"></div>
<svg style="position:absolute;left:0px;top:4px" width="33" height="255"><use href="#msc"/></svg>
<div style="left:0px;top:259px;width:33px;height:6px;background:#141619"></div>
<div style="left:1px;top:261px;width:15px;height:3px;background:#33383e"></div>
<div style="left:17px;top:261px;width:15px;height:3px;background:#33383e"></div>
<div class="il" style="left:0px;top:265px;width:33px;height:20px;"></div>
<div class="lt" style="left:3px;top:268px;color:#e8a030;width:30px">Impact</div>
<div style="left:0px;top:285px;width:33px;height:20px;background:#16181b"></div>
<div class="lt" style="left:3px;top:289px;color:#e8a030;width:30px">Drums</div>
<div style="left:0px;top:305px;width:33px;height:228px;background:#a9b0b8"></div>
<div class="pt" style="left:3px;top:313px;width:28px;height:3px;"></div>
<div class="ph" style="left:15px;top:308px;width:6px;height:12px;"></div>
<div class="vb" style="left:3px;top:325px;width:27px;height:14px;background:linear-gradient(#bcc3ca,#a6adb4);border:1px solid #7c838a"></div>
<div class="vt" style="left:3px;top:326px;width:27px;">-6.0</div>
<div style="left:0px;top:343px;width:33px;height:1px;background:#8a9198"></div>
<div style="left:16px;top:344px;width:1px;height:14px;background:#8a9198"></div>
<svg style="position:absolute;left:0px;top:344px" width="33" height="14"><circle cx="8" cy="7" r="3" fill="#444"/><use href="#rm"/></svg>
<div style="left:0px;top:357px;width:33px;height:1px;background:#8a9198"></div>
<div class="fs" style="left:9px;top:441px;width:15px;height:83px;"></div>
<svg style="position:absolute;left:7px;top:364px" width="19" height="170"><use href="#ftk"/></svg>
<div style="left:15px;top:372px;width:2px;height:149px;background:#15171a"></div>
<div class="hl" style="left:9px;top:413px;width:15px;height:28px;"></div>
<div style="left:0px;top:533px;width:33px;height:14px;background:#b1b8bf;border-top:1px solid #7c838a"></div>
<div style="left:16px;top:533px;width:1px;height:14px;background:#8a9198"></div>
<svg style="position:absolute;left:0px;top:533px" width="33" height="14"><use href="#ms"/></svg>
<div style="left:0px;top:547px;width:33px;height:15px;background:#aab1b8;border-top:1px solid #222"></div>
<svg style="position:absolute;left:0px;top:548px" width="33" height="14"><use href="#ao"/></svg>
<div style="left:0px;top:562px;width:33px;height:15px;background:#5aa8a8"></div>
<div style="left:-6px;top:563px;font-size:10px;letter-spacing:-0.6px;color:#10303a;text-align:center;width:45px;overflow:hidden;line-height:13px;clip-path:inset(0 6px 0 6px)">Stereo1</div>
</div>
<div style="left:493px;top:396px;width:33px;height:593px;overflow:hidden">
<div style="left:0px;top:0px;width:33px;height:3px;background:#ffffff"></div>
<div style="left:0px;top:4px;width:33px;height:255px;background:#1e2125;box-shadow:inset 1px 0 0 #16181b,inset -1px 0 0 #16181b"></div>
<svg style="position:absolute;left:0px;top:4px" width="33" height="255"><use href="#msc"/></svg>
<div class="mb" style="left:2px;top:172px;width:6px;height:86px;"></div>
<div class="mb" style="left:9px;top:172px;width:6px;height:86px;"></div>
<div style="left:0px;top:259px;width:33px;height:6px;background:#141619"></div>
<div style="left:1px;top:261px;width:15px;height:3px;background:#4a8ec0"></div>
<div style="left:17px;top:261px;width:15px;height:3px;background:#33383e"></div>
<div class="il" style="left:0px;top:265px;width:33px;height:20px;"></div>
<div style="left:3px;top:270px;width:28px;height:9px;background:repeating-linear-gradient(90deg,#8a9aa8 0 1px,transparent 1px 3px)"></div>
<div style="left:3px;top:270px;width:1px;height:9px;background:#5aa8e0"></div>
<div style="left:0px;top:285px;width:33px;height:20px;background:#16181b"></div>
<div class="lt" style="left:3px;top:289px;color:#8ab8d8;width:30px">MainC</div>
<div style="left:0px;top:305px;width:33px;height:228px;background:#7a8790"></div>
<div class="pt" style="left:3px;top:313px;width:28px;height:3px;"></div>
<div class="ph" style="left:15px;top:308px;width:6px;height:12px;"></div>
<div class="vb" style="left:3px;top:325px;width:27px;height:14px;background:linear-gradient(#8c98a0,#76828a);border:1px solid #7c838a"></div>
<div class="vt" style="left:3px;top:326px;width:27px;">0dB</div>
<div style="left:0px;top:343px;width:33px;height:1px;background:#8a9198"></div>
<div style="left:0px;top:357px;width:33px;height:1px;background:#8a9198"></div>
<div class="fs" style="left:9px;top:422px;width:15px;height:102px;"></div>
<svg style="position:absolute;left:7px;top:364px" width="19" height="170"><use href="#ftk"/></svg>
<div style="left:15px;top:372px;width:2px;height:149px;background:#15171a"></div>
<div class="hd" style="left:9px;top:394px;width:15px;height:28px;"></div>
<div style="left:0px;top:533px;width:33px;height:14px;background:#76838c;border-top:1px solid #5c6870"></div>
<div style="left:16px;top:533px;width:1px;height:14px;background:#8a9198"></div>
<svg style="position:absolute;left:0px;top:533px" width="33" height="14"><use href="#ms"/></svg>
<div style="left:0px;top:547px;width:33px;height:15px;background:#7a8790;border-top:1px solid #222"></div>
<svg style="position:absolute;left:0px;top:548px" width="33" height="14"><use href="#ao"/></svg>
<div style="left:0px;top:562px;width:33px;height:15px;background:#ffffff"></div>
<div style="left:-6px;top:563px;font-size:10px;letter-spacing:-0.6px;color:#202020;text-align:center;width:45px;overflow:hidden;line-height:13px;clip-path:inset(0 6px 0 6px)">Drums</div>
</div>
<div style="left:527px;top:396px;width:33px;height:593px;overflow:hidden">
<div style="left:0px;top:0px;width:33px;height:3px;background:#1040f0"></div>
<div style="left:0px;top:4px;width:33px;height:255px;background:#1e2125;box-shadow:inset 1px 0 0 #16181b,inset -1px 0 0 #16181b"></div>
<svg style="position:absolute;left:0px;top:4px" width="33" height="255"><use href="#msc"/></svg>
<div style="left:0px;top:259px;width:33px;height:6px;background:#141619"></div>
<div style="left:1px;top:261px;width:15px;height:3px;background:#4a8ec0"></div>
<div style="left:17px;top:261px;width:15px;height:3px;background:#33383e"></div>
<div class="il" style="left:0px;top:265px;width:33px;height:20px;"></div>
<div class="lt" style="left:3px;top:268px;color:#e8eef4;width:30px">InptL+</div>
<div style="left:0px;top:285px;width:33px;height:20px;background:#16181b"></div>
<div class="lt" style="left:3px;top:289px;color:#e8eef4;width:30px">MainC</div>
<div style="left:0px;top:305px;width:33px;height:228px;background:#a9b0b8"></div>
<div class="pt" style="left:3px;top:313px;width:28px;height:3px;"></div>
<div class="ph" style="left:15px;top:308px;width:6px;height:12px;"></div>
<div class="vb" style="left:3px;top:325px;width:27px;height:14px;background:linear-gradient(#bcc3ca,#a6adb4);border:1px solid #7c838a"></div>
<div class="vt" style="left:3px;top:326px;width:27px;">-13.1</div>
<div style="left:0px;top:343px;width:33px;height:1px;background:#8a9198"></div>
<div style="left:16px;top:344px;width:1px;height:14px;background:#8a9198"></div>
<svg style="position:absolute;left:0px;top:344px" width="33" height="14"><circle cx="8" cy="7" r="3" fill="#444"/><use href="#rm"/></svg>
<div style="left:0px;top:357px;width:33px;height:1px;background:#8a9198"></div>
<div class="fs" style="left:9px;top:461px;width:15px;height:63px;"></div>
<svg style="position:absolute;left:7px;top:364px" width="19" height="170"><use href="#ftk"/></svg>
<div style="left:15px;top:372px;width:2px;height:149px;background:#15171a"></div>
<div class="hl" style="left:9px;top:433px;width:15px;height:28px;"></div>
<div style="left:0px;top:533px;width:33px;height:14px;background:#b1b8bf;border-top:1px solid #7c838a"></div>
<div style="left:16px;top:533px;width:1px;height:14px;background:#8a9198"></div>
<svg style="position:absolute;left:0px;top:533px" width="33" height="14"><use href="#ms"/></svg>
<div style="left:0px;top:547px;width:33px;height:15px;background:#aab1b8;border-top:1px solid #222"></div>
<svg style="position:absolute;left:0px;top:548px" width="33" height="14"><use href="#ao"/></svg>
<div style="left:0px;top:562px;width:33px;height:15px;background:#1040f0"></div>
<div style="left:-6px;top:563px;font-size:10px;letter-spacing:-0.6px;color:#e8f0ff;text-align:center;width:45px;overflow:hidden;line-height:13px;clip-path:inset(0 6px 0 6px)">Mulct11</div>
</div>
<div style="left:561px;top:396px;width:33px;height:593px;overflow:hidden">
<div style="left:0px;top:0px;width:33px;height:3px;background:#3a80f0"></div>
<div style="left:0px;top:4px;width:33px;height:255px;background:#1e2125;box-shadow:inset 1px 0 0 #16181b,inset -1px 0 0 #16181b"></div>
<svg style="position:absolute;left:0px;top:4px" width="33" height="255"><use href="#msc"/></svg>
<div style="left:0px;top:259px;width:33px;height:6px;background:#141619"></div>
<div style="left:1px;top:261px;width:15px;height:3px;background:#4a8ec0"></div>
<div style="left:17px;top:261px;width:15px;height:3px;background:#33383e"></div>
<div class="il" style="left:0px;top:265px;width:33px;height:20px;"></div>
<div class="lt" style="left:3px;top:268px;color:#e8eef4;width:30px">InptL+</div>
<div style="left:0px;top:285px;width:33px;height:20px;background:#16181b"></div>
<div class="lt" style="left:3px;top:289px;color:#e8eef4;width:30px">MainC</div>
<div style="left:0px;top:305px;width:33px;height:228px;background:#a9b0b8"></div>
<div class="pt" style="left:3px;top:313px;width:28px;height:3px;"></div>
<div class="ph" style="left:15px;top:308px;width:6px;height:12px;"></div>
<div class="vb" style="left:3px;top:325px;width:27px;height:14px;background:linear-gradient(#bcc3ca,#a6adb4);border:1px solid #7c838a"></div>
<div class="vt" style="left:3px;top:326px;width:27px;">-6.9</div>
<div style="left:0px;top:343px;width:33px;height:1px;background:#8a9198"></div>
<div style="left:16px;top:344px;width:1px;height:14px;background:#8a9198"></div>
<svg style="position:absolute;left:0px;top:344px" width="33" height="14"><circle cx="8" cy="7" r="3" fill="#444"/><use href="#rm"/></svg>
<div style="left:0px;top:357px;width:33px;height:1px;background:#8a9198"></div>
<div class="fs" style="left:9px;top:446px;width:15px;height:78px;"></div>
<svg style="position:absolute;left:7px;top:364px" width="19" height="170"><use href="#ftk"/></svg>
<div style="left:15px;top:372px;width:2px;height:149px;background:#15171a"></div>
<div class="hl" style="left:9px;top:418px;width:15px;height:28px;"></div>
<div style="left:0px;top:533px;width:33px;height:14px;background:#b1b8bf;border-top:1px solid #7c838a"></div>
<div style="left:16px;top:533px;width:1px;height:14px;background:#8a9198"></div>
<svg style="position:absolute;left:0px;top:533px" width="33" height="14"><use href="#ms"/></svg>
<div style="left:0px;top:547px;width:33px;height:15px;background:#aab1b8;border-top:1px solid #222"></div>
<svg style="position:absolute;left:0px;top:548px" width="33" height="14"><use href="#ao"/></svg>
<div style="left:0px;top:562px;width:33px;height:15px;background:#3a80f0"></div>
<div style="left:-6px;top:563px;font-size:10px;letter-spacing:-0.6px;color:#0a2050;text-align:center;width:45px;overflow:hidden;line-height:13px;clip-path:inset(0 6px 0 6px)">Mulch06</div>
</div>
<div style="left:595px;top:396px;width:33px;height:593px;overflow:hidden">
<div style="left:0px;top:0px;width:33px;height:3px;background:#1040f0"></div>
<div style="left:0px;top:4px;width:33px;height:255px;background:#1e2125;box-shadow:inset 1px 0 0 #16181b,inset -1px 0 0 #16181b"></div>
<svg style="position:absolute;left:0px;top:4px" width="33" height="255"><use href="#msc"/></svg>
<div style="left:0px;top:259px;width:33px;height:6px;background:#141619"></div>
<div style="left:1px;top:261px;width:15px;height:3px;background:#4a8ec0"></div>
<div style="left:17px;top:261px;width:15px;height:3px;background:#33383e"></div>
<div class="il" style="left:0px;top:265px;width:33px;height:20px;"></div>
<div class="lt" style="left:3px;top:268px;color:#e8eef4;width:30px">InptL+</div>
<div style="left:0px;top:285px;width:33px;height:20px;background:#16181b"></div>
<div class="lt" style="left:3px;top:289px;color:#e8eef4;width:30px">MainC</div>
<div style="left:0px;top:305px;width:33px;height:228px;background:#a9b0b8"></div>
<div class="pt" style="left:3px;top:313px;width:28px;height:3px;"></div>
<div class="ph" style="left:15px;top:308px;width:6px;height:12px;"></div>
<div class="vb" style="left:3px;top:325px;width:27px;height:14px;background:linear-gradient(#bcc3ca,#a6adb4);border:1px solid #7c838a"></div>
<div class="vt" style="left:3px;top:326px;width:27px;">-6.9</div>
<div style="left:0px;top:343px;width:33px;height:1px;background:#8a9198"></div>
<div style="left:16px;top:344px;width:1px;height:14px;background:#8a9198"></div>
<svg style="position:absolute;left:0px;top:344px" width="33" height="14"><circle cx="8" cy="7" r="3" fill="#444"/><use href="#rm"/></svg>
<div style="left:0px;top:357px;width:33px;height:1px;background:#8a9198"></div>
<div class="fs" style="left:9px;top:446px;width:15px;height:78px;"></div>
<svg style="position:absolute;left:7px;top:364px" width="19" height="170"><use href="#ftk"/></svg>
<div style="left:15px;top:372px;width:2px;height:149px;background:#15171a"></div>
<div class="hl" style="left:9px;top:418px;width:15px;height:28px;"></div>
<div style="left:0px;top:533px;width:33px;height:14px;background:#b1b8bf;border-top:1px solid #7c838a"></div>
<div style="left:16px;top:533px;width:1px;height:14px;background:#8a9198"></div>
<svg style="position:absolute;left:0px;top:533px" width="33" height="14"><use href="#ms"/></svg>
<div style="left:0px;top:547px;width:33px;height:15px;background:#aab1b8;border-top:1px solid #222"></div>
<svg style="position:absolute;left:0px;top:548px" width="33" height="14"><use href="#ao"/></svg>
<div style="left:0px;top:562px;width:33px;height:15px;background:#1040f0"></div>
<div style="left:-6px;top:563px;font-size:10px;letter-spacing:-0.6px;color:#e8f0ff;text-align:center;width:45px;overflow:hidden;line-height:13px;clip-path:inset(0 6px 0 6px)">Mulct15</div>
</div>
<div style="left:629px;top:396px;width:33px;height:593px;overflow:hidden">
<div style="left:0px;top:0px;width:33px;height:3px;background:#70c8c8"></div>
<div style="left:0px;top:4px;width:33px;height:255px;background:#1e2125;box-shadow:inset 1px 0 0 #16181b,inset -1px 0 0 #16181b"></div>
<svg style="position:absolute;left:0px;top:4px" width="33" height="255"><use href="#msc"/></svg>
<div style="left:0px;top:259px;width:33px;height:6px;background:#141619"></div>
<div style="left:1px;top:261px;width:15px;height:3px;background:#4a8ec0"></div>
<div style="left:17px;top:261px;width:15px;height:3px;background:#33383e"></div>
<div class="il" style="left:0px;top:265px;width:33px;height:20px;"></div>
<div class="lt" style="left:3px;top:268px;color:#e8eef4;width:30px">InptL+</div>
<div style="left:0px;top:285px;width:33px;height:20px;background:#16181b"></div>
<div class="lt" style="left:3px;top:289px;color:#e8eef4;width:30px">MainC</div>
<div style="left:0px;top:305px;width:33px;height:228px;background:#a9b0b8"></div>
<div class="pt" style="left:3px;top:313px;width:28px;height:3px;"></div>
<div class="ph" style="left:15px;top:308px;width:6px;height:12px;"></div>
<div class="vb" style="left:3px;top:325px;width:27px;height:14px;background:linear-gradient(#bcc3ca,#a6adb4);border:1px solid #7c838a"></div>
<div class="vt" style="left:3px;top:326px;width:27px;">-22.1</div>
<div style="left:0px;top:343px;width:33px;height:1px;background:#8a9198"></div>
<div style="left:16px;top:344px;width:1px;height:14px;background:#8a9198"></div>
<svg style="position:absolute;left:0px;top:344px" width="33" height="14"><circle cx="8" cy="7" r="3" fill="#444"/><use href="#rm"/></svg>
<div style="left:0px;top:357px;width:33px;height:1px;background:#8a9198"></div>
<div class="fs" style="left:9px;top:477px;width:15px;height:47px;"></div>
<svg style="position:absolute;left:7px;top:364px" width="19" height="170"><use href="#ftk"/></svg>
<div style="left:15px;top:372px;width:2px;height:149px;background:#15171a"></div>
<div class="hl" style="left:9px;top:449px;width:15px;height:28px;"></div>
<div style="left:0px;top:533px;width:33px;height:14px;background:#b1b8bf;border-top:1px solid #7c838a"></div>
<div style="left:16px;top:533px;width:1px;height:14px;background:#8a9198"></div>
<svg style="position:absolute;left:0px;top:533px" width="33" height="14"><use href="#ms"/></svg>
<div style="left:0px;top:547px;width:33px;height:15px;background:#aab1b8;border-top:1px solid #222"></div>
<svg style="position:absolute;left:0px;top:548px" width="33" height="14"><use href="#ao"/></svg>
<div style="left:0px;top:562px;width:33px;height:15px;background:#70c8c8"></div>
<div style="left:-6px;top:563px;font-size:10px;letter-spacing:-0.6px;color:#f0f8f8;text-align:center;width:45px;overflow:hidden;line-height:13px;clip-path:inset(0 6px 0 6px)">Mult19C</div>
</div>
<div style="left:663px;top:396px;width:33px;height:593px;overflow:hidden">
<div style="left:0px;top:0px;width:33px;height:3px;background:#a0f0d0"></div>
<div style="left:0px;top:4px;width:33px;height:255px;background:#1e2125;box-shadow:inset 1px 0 0 #16181b,inset -1px 0 0 #16181b"></div>
<svg style="position:absolute;left:0px;top:4px" width="33" height="255"><use href="#msc"/></svg>
<div style="left:0px;top:259px;width:33px;height:6px;background:#141619"></div>
<div style="left:1px;top:261px;width:15px;height:3px;background:#4a8ec0"></div>
<div style="left:17px;top:261px;width:15px;height:3px;background:#33383e"></div>
<div class="il" style="left:0px;top:265px;width:33px;height:20px;"></div>
<div class="lt" style="left:3px;top:268px;color:#e8eef4;width:30px">InptL+</div>
<div style="left:0px;top:285px;width:33px;height:20px;background:#16181b"></div>
<div class="lt" style="left:3px;top:289px;color:#e8eef4;width:30px">MainC</div>
<div style="left:0px;top:305px;width:33px;height:228px;background:#a9b0b8"></div>
<div class="pt" style="left:3px;top:313px;width:28px;height:3px;"></div>
<div class="ph" style="left:15px;top:308px;width:6px;height:12px;"></div>
<div class="vb" style="left:3px;top:325px;width:27px;height:14px;background:linear-gradient(#bcc3ca,#a6adb4);border:1px solid #7c838a"></div>
<div class="vt" style="left:3px;top:326px;width:27px;">-7.0</div>
<div style="left:0px;top:343px;width:33px;height:1px;background:#8a9198"></div>
<div style="left:16px;top:344px;width:1px;height:14px;background:#8a9198"></div>
<svg style="position:absolute;left:0px;top:344px" width="33" height="14"><circle cx="8" cy="7" r="3" fill="#444"/><use href="#rm"/></svg>
<div style="left:0px;top:357px;width:33px;height:1px;background:#8a9198"></div>
<div class="fs" style="left:9px;top:445px;width:15px;height:79px;"></div>
<svg style="position:absolute;left:7px;top:364px" width="19" height="170"><use href="#ftk"/></svg>
<div style="left:15px;top:372px;width:2px;height:149px;background:#15171a"></div>
<div class="hl" style="left:9px;top:417px;width:15px;height:28px;"></div>
<div style="left:0px;top:533px;width:33px;height:14px;background:#b1b8bf;border-top:1px solid #7c838a"></div>
<div style="left:16px;top:533px;width:1px;height:14px;background:#8a9198"></div>
<svg style="position:absolute;left:0px;top:533px" width="33" height="14"><use href="#ms"/></svg>
<div style="left:0px;top:547px;width:33px;height:15px;background:#aab1b8;border-top:1px solid #222"></div>
<div style="left:1px;top:548px;width:31px;height:14px;background:#a8e08a"></div>
<svg style="position:absolute;left:0px;top:548px" width="33" height="14"><use href="#rd"/></svg>
<div style="left:0px;top:562px;width:33px;height:15px;background:#a0f0d0"></div>
<div style="left:-6px;top:563px;font-size:10px;letter-spacing:-0.6px;color:#203830;text-align:center;width:45px;overflow:hidden;line-height:13px;clip-path:inset(0 6px 0 6px)">Mult12C</div>
</div>
<div style="left:697px;top:396px;width:33px;height:593px;overflow:hidden">
<div style="left:0px;top:0px;width:33px;height:3px;background:#40e8c8"></div>
<div style="left:0px;top:4px;width:33px;height:255px;background:#1e2125;box-shadow:inset 1px 0 0 #16181b,inset -1px 0 0 #16181b"></div>
<svg style="position:absolute;left:0px;top:4px" width="33" height="255"><use href="#msc"/></svg>
<div style="left:0px;top:259px;width:33px;height:6px;background:#141619"></div>
<div style="left:1px;top:261px;width:15px;height:3px;background:#4a8ec0"></div>
<div style="left:17px;top:261px;width:15px;height:3px;background:#33383e"></div>
<div class="il" style="left:0px;top:265px;width:33px;height:20px;"></div>
<div class="lt" style="left:3px;top:268px;color:#e8eef4;width:30px">InptL+</div>
<div style="left:0px;top:285px;width:33px;height:20px;background:#16181b"></div>
<div class="lt" style="left:3px;top:289px;color:#e8eef4;width:30px">Sc</div>
<div style="left:0px;top:305px;width:33px;height:228px;background:#a9b0b8"></div>
<div class="pt" style="left:3px;top:313px;width:28px;height:3px;"></div>
<div class="ph" style="left:15px;top:308px;width:6px;height:12px;"></div>
<div class="vb" style="left:3px;top:325px;width:27px;height:14px;background:linear-gradient(#bcc3ca,#a6adb4);border:1px solid #7c838a"></div>
<div class="vt" style="left:3px;top:326px;width:27px;">-23.6</div>
<div style="left:0px;top:343px;width:33px;height:1px;background:#8a9198"></div>
<div style="left:16px;top:344px;width:1px;height:14px;background:#8a9198"></div>
<svg style="position:absolute;left:0px;top:344px" width="33" height="14"><circle cx="8" cy="7" r="3" fill="#444"/><use href="#rm"/></svg>
<div style="left:0px;top:357px;width:33px;height:1px;background:#8a9198"></div>
<div class="fs" style="left:9px;top:479px;width:15px;height:45px;"></div>
<svg style="position:absolute;left:7px;top:364px" width="19" height="170"><use href="#ftk"/></svg>
<div style="left:15px;top:372px;width:2px;height:149px;background:#15171a"></div>
<div class="hl" style="left:9px;top:451px;width:15px;height:28px;"></div>
<div style="left:0px;top:533px;width:33px;height:14px;background:#b1b8bf;border-top:1px solid #7c838a"></div>
<div style="left:16px;top:533px;width:1px;height:14px;background:#8a9198"></div>
<svg style="position:absolute;left:0px;top:533px" width="33" height="14"><use href="#ms"/></svg>
<div style="left:0px;top:547px;width:33px;height:15px;background:#aab1b8;border-top:1px solid #222"></div>
<svg style="position:absolute;left:0px;top:548px" width="33" height="14"><use href="#ao"/></svg>
<div style="left:0px;top:562px;width:33px;height:15px;background:#40e8c8"></div>
<div style="left:-6px;top:563px;font-size:10px;letter-spacing:-0.6px;color:#103830;text-align:center;width:45px;overflow:hidden;line-height:13px;clip-path:inset(0 6px 0 6px)">Noize</div>
</div>
<div style="left:731px;top:396px;width:33px;height:593px;overflow:hidden">
<div style="left:0px;top:0px;width:33px;height:3px;background:#30d8b8"></div>
<div style="left:0px;top:4px;width:33px;height:255px;background:#1e2125;box-shadow:inset 1px 0 0 #16181b,inset -1px 0 0 #16181b"></div>
<svg style="position:absolute;left:0px;top:4px" width="33" height="255"><use href="#msc"/></svg>
<div class="mb" style="left:2px;top:252px;width:6px;height:6px;"></div>
<div class="mb" style="left:9px;top:252px;width:6px;height:6px;"></div>
<div style="left:0px;top:259px;width:33px;height:6px;background:#141619"></div>
<div style="left:1px;top:261px;width:15px;height:3px;background:#4a8ec0"></div>
<div style="left:17px;top:261px;width:15px;height:3px;background:#33383e"></div>
<div class="il" style="left:0px;top:265px;width:33px;height:20px;"></div>
<div class="lt" style="left:3px;top:268px;color:#e8eef4;width:30px">InptL+</div>
<div style="left:0px;top:285px;width:33px;height:20px;background:#16181b"></div>
<div class="lt" style="left:3px;top:289px;color:#e8eef4;width:30px">MainC</div>
<div style="left:0px;top:305px;width:33px;height:228px;background:#a9b0b8"></div>
<div class="pt" style="left:3px;top:313px;width:28px;height:3px;"></div>
<div class="ph" style="left:15px;top:308px;width:6px;height:12px;"></div>
<div class="vb" style="left:3px;top:325px;width:27px;height:14px;background:linear-gradient(#bcc3ca,#a6adb4);border:1px solid #7c838a"></div>
<div class="vt" style="left:3px;top:326px;width:27px;">-21.2</div>
<div style="left:0px;top:343px;width:33px;height:1px;background:#8a9198"></div>
<div style="left:16px;top:344px;width:1px;height:14px;background:#8a9198"></div>
<svg style="position:absolute;left:0px;top:344px" width="33" height="14"><circle cx="8" cy="7" r="3" fill="#444"/><use href="#rm"/></svg>
<div style="left:0px;top:357px;width:33px;height:1px;background:#8a9198"></div>
<div class="fs" style="left:9px;top:476px;width:15px;height:48px;"></div>
<svg style="position:absolute;left:7px;top:364px" width="19" height="170"><use href="#ftk"/></svg>
<div style="left:15px;top:372px;width:2px;height:149px;background:#15171a"></div>
<div class="hl" style="left:9px;top:448px;width:15px;height:28px;"></div>
<div style="left:0px;top:533px;width:33px;height:14px;background:#b1b8bf;border-top:1px solid #7c838a"></div>
<div style="left:16px;top:533px;width:1px;height:14px;background:#8a9198"></div>
<svg style="position:absolute;left:0px;top:533px" width="33" height="14"><use href="#ms"/></svg>
<div style="left:0px;top:547px;width:33px;height:15px;background:#aab1b8;border-top:1px solid #222"></div>
<svg style="position:absolute;left:0px;top:548px" width="33" height="14"><use href="#ao"/></svg>
<div style="left:0px;top:562px;width:33px;height:15px;background:#30d8b8"></div>
<div style="left:-6px;top:563px;font-size:10px;letter-spacing:-0.6px;color:#103830;text-align:center;width:45px;overflow:hidden;line-height:13px;clip-path:inset(0 6px 0 6px)">Mulh03C</div>
</div>
<div style="left:765px;top:396px;width:33px;height:593px;overflow:hidden">
<div style="left:0px;top:0px;width:33px;height:3px;background:#2a70e0"></div>
<div style="left:0px;top:4px;width:33px;height:255px;background:#1e2125;box-shadow:inset 1px 0 0 #16181b,inset -1px 0 0 #16181b"></div>
<svg style="position:absolute;left:0px;top:4px" width="33" height="255"><use href="#msc"/></svg>
<div class="mb" style="left:2px;top:177px;width:6px;height:81px;"></div>
<div class="mb" style="left:9px;top:179px;width:6px;height:79px;"></div>
<div style="left:0px;top:259px;width:33px;height:6px;background:#141619"></div>
<div style="left:1px;top:261px;width:15px;height:3px;background:#4a8ec0"></div>
<div style="left:17px;top:261px;width:15px;height:3px;background:#33383e"></div>
<div class="il" style="left:0px;top:265px;width:33px;height:20px;"></div>
<div class="lt" style="left:3px;top:268px;color:#e8eef4;width:30px">InptL+</div>
<div style="left:0px;top:285px;width:33px;height:20px;background:#16181b"></div>
<div class="lt" style="left:3px;top:289px;color:#e8eef4;width:30px">MainC</div>
<div style="left:0px;top:305px;width:33px;height:228px;background:#a9b0b8"></div>
<div class="pt" style="left:3px;top:313px;width:28px;height:3px;"></div>
<div class="ph" style="left:15px;top:308px;width:6px;height:12px;"></div>
<div class="vb" style="left:3px;top:325px;width:27px;height:14px;background:linear-gradient(#bcc3ca,#a6adb4);border:1px solid #7c838a"></div>
<div class="vt" style="left:3px;top:326px;width:27px;">-6.5</div>
<div style="left:0px;top:343px;width:33px;height:1px;background:#8a9198"></div>
<div style="left:16px;top:344px;width:1px;height:14px;background:#8a9198"></div>
<svg style="position:absolute;left:0px;top:344px" width="33" height="14"><circle cx="8" cy="7" r="3" fill="#444"/><use href="#rm"/></svg>
<div style="left:0px;top:357px;width:33px;height:1px;background:#8a9198"></div>
<div class="fs" style="left:9px;top:445px;width:15px;height:79px;"></div>
<svg style="position:absolute;left:7px;top:364px" width="19" height="170"><use href="#ftk"/></svg>
<div style="left:15px;top:372px;width:2px;height:149px;background:#15171a"></div>
<div class="hl" style="left:9px;top:417px;width:15px;height:28px;"></div>
<div style="left:0px;top:533px;width:33px;height:14px;background:#b1b8bf;border-top:1px solid #7c838a"></div>
<div style="left:16px;top:533px;width:1px;height:14px;background:#8a9198"></div>
<svg style="position:absolute;left:0px;top:533px" width="33" height="14"><use href="#ms"/></svg>
<div style="left:0px;top:547px;width:33px;height:15px;background:#aab1b8;border-top:1px solid #222"></div>
<svg style="position:absolute;left:0px;top:548px" width="33" height="14"><use href="#ao"/></svg>
<div style="left:0px;top:562px;width:33px;height:15px;background:#2a70e0"></div>
<div style="left:-6px;top:563px;font-size:10px;letter-spacing:-0.6px;color:#0a2050;text-align:center;width:45px;overflow:hidden;line-height:13px;clip-path:inset(0 6px 0 6px)">Mulh08C</div>
</div>
<div style="left:799px;top:396px;width:33px;height:593px;overflow:hidden">
<div style="left:0px;top:0px;width:33px;height:3px;background:#40e8c0"></div>
<div style="left:0px;top:4px;width:33px;height:255px;background:#1e2125;box-shadow:inset 1px 0 0 #16181b,inset -1px 0 0 #16181b"></div>
<svg style="position:absolute;left:0px;top:4px" width="33" height="255"><use href="#msc"/></svg>
<div style="left:0px;top:259px;width:33px;height:6px;background:#141619"></div>
<div style="left:1px;top:261px;width:15px;height:3px;background:#4a8ec0"></div>
<div style="left:17px;top:261px;width:15px;height:3px;background:#33383e"></div>
<div class="il" style="left:0px;top:265px;width:33px;height:20px;"></div>
<div class="lt" style="left:3px;top:268px;color:#e8eef4;width:30px">InptL+</div>
<div style="left:0px;top:285px;width:33px;height:20px;background:#16181b"></div>
<div class="lt" style="left:3px;top:289px;color:#e8eef4;width:30px">MainC</div>
<div style="left:0px;top:305px;width:33px;height:228px;background:#a9b0b8"></div>
<div class="pt" style="left:3px;top:313px;width:28px;height:3px;"></div>
<div class="ph" style="left:15px;top:308px;width:6px;height:12px;"></div>
<div class="vb" style="left:3px;top:325px;width:27px;height:14px;background:linear-gradient(#bcc3ca,#a6adb4);border:1px solid #7c838a"></div>
<div class="vt" style="left:3px;top:326px;width:27px;">-7.2</div>
<div style="left:0px;top:343px;width:33px;height:1px;background:#8a9198"></div>
<div style="left:16px;top:344px;width:1px;height:14px;background:#8a9198"></div>
<svg style="position:absolute;left:0px;top:344px" width="33" height="14"><circle cx="8" cy="7" r="3" fill="#444"/><use href="#rm"/></svg>
<div style="left:0px;top:357px;width:33px;height:1px;background:#8a9198"></div>
<div class="fs" style="left:9px;top:446px;width:15px;height:78px;"></div>
<svg style="position:absolute;left:7px;top:364px" width="19" height="170"><use href="#ftk"/></svg>
<div style="left:15px;top:372px;width:2px;height:149px;background:#15171a"></div>
<div class="hl" style="left:9px;top:418px;width:15px;height:28px;"></div>
<div style="left:0px;top:533px;width:33px;height:14px;background:#b1b8bf;border-top:1px solid #7c838a"></div>
<div style="left:16px;top:533px;width:1px;height:14px;background:#8a9198"></div>
<svg style="position:absolute;left:0px;top:533px" width="33" height="14"><use href="#ms"/></svg>
<div style="left:0px;top:547px;width:33px;height:15px;background:#aab1b8;border-top:1px solid #222"></div>
<div style="left:1px;top:548px;width:31px;height:14px;background:#a8e08a"></div>
<svg style="position:absolute;left:0px;top:548px" width="33" height="14"><use href="#rd"/></svg>
<div style="left:0px;top:562px;width:33px;height:15px;background:#40e8c0"></div>
<div style="left:-6px;top:563px;font-size:10px;letter-spacing:-0.6px;color:#103830;text-align:center;width:45px;overflow:hidden;line-height:13px;clip-path:inset(0 6px 0 6px)">Mul12C2</div>
</div>
<div style="left:833px;top:396px;width:33px;height:593px;overflow:hidden">
<div style="left:0px;top:0px;width:33px;height:3px;background:#1040f0"></div>
<div style="left:0px;top:4px;width:33px;height:255px;background:#1e2125;box-shadow:inset 1px 0 0 #16181b,inset -1px 0 0 #16181b"></div>
<svg style="position:absolute;left:0px;top:4px" width="33" height="255"><use href="#msc"/></svg>
<div style="left:0px;top:259px;width:33px;height:6px;background:#141619"></div>
<div style="left:1px;top:261px;width:15px;height:3px;background:#4a8ec0"></div>
<div style="left:17px;top:261px;width:15px;height:3px;background:#33383e"></div>
<div class="il" style="left:0px;top:265px;width:33px;height:20px;"></div>
<div class="lt" style="left:3px;top:268px;color:#e8eef4;width:30px">InptL+</div>
<div style="left:0px;top:285px;width:33px;height:20px;background:#16181b"></div>
<div class="lt" style="left:3px;top:289px;color:#e8eef4;width:30px">MainC</div>
<div style="left:0px;top:305px;width:33px;height:228px;background:#a9b0b8"></div>
<div class="pt" style="left:3px;top:313px;width:28px;height:3px;"></div>
<div class="ph" style="left:15px;top:308px;width:6px;height:12px;"></div>
<div class="vb" style="left:3px;top:325px;width:27px;height:14px;background:linear-gradient(#bcc3ca,#a6adb4);border:1px solid #7c838a"></div>
<div class="vt" style="left:3px;top:326px;width:27px;">-15.4</div>
<div style="left:0px;top:343px;width:33px;height:1px;background:#8a9198"></div>
<div style="left:16px;top:344px;width:1px;height:14px;background:#8a9198"></div>
<svg style="position:absolute;left:0px;top:344px" width="33" height="14"><circle cx="8" cy="7" r="3" fill="#444"/><use href="#rm"/></svg>
<div style="left:0px;top:357px;width:33px;height:1px;background:#8a9198"></div>
<div class="fs" style="left:9px;top:465px;width:15px;height:59px;"></div>
<svg style="position:absolute;left:7px;top:364px" width="19" height="170"><use href="#ftk"/></svg>
<div style="left:15px;top:372px;width:2px;height:149px;background:#15171a"></div>
<div class="hl" style="left:9px;top:437px;width:15px;height:28px;"></div>
<div style="left:0px;top:533px;width:33px;height:14px;background:#b1b8bf;border-top:1px solid #7c838a"></div>
<div style="left:16px;top:533px;width:1px;height:14px;background:#8a9198"></div>
<svg style="position:absolute;left:0px;top:533px" width="33" height="14"><use href="#ms"/></svg>
<div style="left:0px;top:547px;width:33px;height:15px;background:#aab1b8;border-top:1px solid #222"></div>
<svg style="position:absolute;left:0px;top:548px" width="33" height="14"><use href="#ao"/></svg>
<div style="left:0px;top:562px;width:33px;height:15px;background:#1040f0"></div>
<div style="left:-6px;top:563px;font-size:10px;letter-spacing:-0.6px;color:#e8f0ff;text-align:center;width:45px;overflow:hidden;line-height:13px;clip-path:inset(0 6px 0 6px)">Swet01C</div>
</div>
<div style="left:867px;top:396px;width:33px;height:593px;overflow:hidden">
<div style="left:0px;top:0px;width:33px;height:3px;background:#5aa8a8"></div>
<div style="left:0px;top:4px;width:33px;height:255px;background:#1e2125;box-shadow:inset 1px 0 0 #16181b,inset -1px 0 0 #16181b"></div>
<svg style="position:absolute;left:0px;top:4px" width="33" height="255"><use href="#msc"/></svg>
<div style="left:0px;top:259px;width:33px;height:6px;background:#141619"></div>
<div style="left:1px;top:261px;width:15px;height:3px;background:#33383e"></div>
<div style="left:17px;top:261px;width:15px;height:3px;background:#33383e"></div>
<div class="il" style="left:0px;top:265px;width:33px;height:20px;"></div>
<div class="lt" style="left:3px;top:268px;color:#e8eef4;width:30px">InptL+</div>
<div style="left:0px;top:285px;width:33px;height:20px;background:#16181b"></div>
<div class="lt" style="left:3px;top:289px;color:#e8eef4;width:30px">MainC</div>
<div style="left:0px;top:305px;width:33px;height:228px;background:#a9b0b8"></div>
<div class="pt" style="left:3px;top:313px;width:28px;height:3px;"></div>
<div class="ph" style="left:15px;top:308px;width:6px;height:12px;"></div>
<div class="vb" style="left:3px;top:325px;width:27px;height:14px;background:linear-gradient(#bcc3ca,#a6adb4);border:1px solid #7c838a"></div>
<div class="vt" style="left:3px;top:326px;width:27px;">-13.7</div>
<div style="left:0px;top:343px;width:33px;height:1px;background:#8a9198"></div>
<div style="left:16px;top:344px;width:1px;height:14px;background:#8a9198"></div>
<svg style="position:absolute;left:0px;top:344px" width="33" height="14"><circle cx="8" cy="7" r="3" fill="#444"/><use href="#rm"/></svg>
<div style="left:0px;top:357px;width:33px;height:1px;background:#8a9198"></div>
<div class="fs" style="left:9px;top:463px;width:15px;height:61px;"></div>
<svg style="position:absolute;left:7px;top:364px" width="19" height="170"><use href="#ftk"/></svg>
<div style="left:15px;top:372px;width:2px;height:149px;background:#15171a"></div>
<div class="hl" style="left:9px;top:435px;width:15px;height:28px;"></div>
<div style="left:0px;top:533px;width:33px;height:14px;background:#b1b8bf;border-top:1px solid #7c838a"></div>
<div style="left:16px;top:533px;width:1px;height:14px;background:#8a9198"></div>
<svg style="position:absolute;left:0px;top:533px" width="33" height="14"><use href="#ms"/></svg>
<div style="left:0px;top:547px;width:33px;height:15px;background:#aab1b8;border-top:1px solid #222"></div>
<svg style="position:absolute;left:0px;top:548px" width="33" height="14"><use href="#ao"/></svg>
<div style="left:0px;top:562px;width:33px;height:15px;background:#5aa8a8"></div>
<div style="left:-6px;top:563px;font-size:10px;letter-spacing:-0.6px;color:#10303a;text-align:center;width:45px;overflow:hidden;line-height:13px;clip-path:inset(0 6px 0 6px)">Mulh01C</div>
</div>
<div style="left:901px;top:396px;width:33px;height:593px;overflow:hidden">
<div style="left:0px;top:0px;width:33px;height:3px;background:#3a80f0"></div>
<div style="left:0px;top:4px;width:33px;height:255px;background:#1e2125;box-shadow:inset 1px 0 0 #16181b,inset -1px 0 0 #16181b"></div>
<svg style="position:absolute;left:0px;top:4px" width="33" height="255"><use href="#msc"/></svg>
<div style="left:0px;top:259px;width:33px;height:6px;background:#141619"></div>
<div style="left:1px;top:261px;width:15px;height:3px;background:#33383e"></div>
<div style="left:17px;top:261px;width:15px;height:3px;background:#33383e"></div>
<div class="il" style="left:0px;top:265px;width:33px;height:20px;"></div>
<div class="lt" style="left:3px;top:268px;color:#e8eef4;width:30px">InptL+</div>
<div style="left:0px;top:285px;width:33px;height:20px;background:#16181b"></div>
<div class="lt" style="left:3px;top:289px;color:#e8eef4;width:30px">MainC</div>
<div style="left:0px;top:305px;width:33px;height:228px;background:#a9b0b8"></div>
<div class="pt" style="left:3px;top:313px;width:28px;height:3px;"></div>
<div class="ph" style="left:15px;top:308px;width:6px;height:12px;"></div>
<div class="vb" style="left:3px;top:325px;width:27px;height:14px;background:linear-gradient(#bcc3ca,#a6adb4);border:1px solid #7c838a"></div>
<div class="vt" style="left:3px;top:326px;width:27px;">-12.9</div>
<div style="left:0px;top:343px;width:33px;height:1px;background:#8a9198"></div>
<div style="left:16px;top:344px;width:1px;height:14px;background:#8a9198"></div>
<svg style="position:absolute;left:0px;top:344px" width="33" height="14"><circle cx="8" cy="7" r="3" fill="#444"/><use href="#rm"/></svg>
<div style="left:0px;top:357px;width:33px;height:1px;background:#8a9198"></div>
<div class="fs" style="left:9px;top:461px;width:15px;height:63px;"></div>
<svg style="position:absolute;left:7px;top:364px" width="19" height="170"><use href="#ftk"/></svg>
<div style="left:15px;top:372px;width:2px;height:149px;background:#15171a"></div>
<div class="hl" style="left:9px;top:433px;width:15px;height:28px;"></div>
<div style="left:0px;top:533px;width:33px;height:14px;background:#b1b8bf;border-top:1px solid #7c838a"></div>
<div style="left:16px;top:533px;width:1px;height:14px;background:#8a9198"></div>
<svg style="position:absolute;left:0px;top:533px" width="33" height="14"><use href="#ms"/></svg>
<div style="left:0px;top:547px;width:33px;height:15px;background:#aab1b8;border-top:1px solid #222"></div>
<svg style="position:absolute;left:0px;top:548px" width="33" height="14"><use href="#ao"/></svg>
<div style="left:0px;top:562px;width:33px;height:15px;background:#3a80f0"></div>
<div style="left:-6px;top:563px;font-size:10px;letter-spacing:-0.6px;color:#0a2050;text-align:center;width:45px;overflow:hidden;line-height:13px;clip-path:inset(0 6px 0 6px)">Mulh06C</div>
</div>
<div style="left:935px;top:396px;width:33px;height:593px;overflow:hidden">
<div style="left:0px;top:0px;width:33px;height:3px;background:#90c0f8"></div>
<div style="left:0px;top:4px;width:33px;height:255px;background:#1e2125;box-shadow:inset 1px 0 0 #16181b,inset -1px 0 0 #16181b"></div>
<svg style="position:absolute;left:0px;top:4px" width="33" height="255"><use href="#msc"/></svg>
<div style="left:0px;top:259px;width:33px;height:6px;background:#141619"></div>
<div style="left:1px;top:261px;width:15px;height:3px;background:#33383e"></div>
<div style="left:17px;top:261px;width:15px;height:3px;background:#33383e"></div>
<div class="il" style="left:0px;top:265px;width:33px;height:20px;"></div>
<div class="lt" style="left:3px;top:268px;color:#e8eef4;width:30px">InptL+</div>
<div style="left:0px;top:285px;width:33px;height:20px;background:#16181b"></div>
<div class="lt" style="left:3px;top:289px;color:#e8eef4;width:30px">MainC</div>
<div style="left:0px;top:305px;width:33px;height:228px;background:#a9b0b8"></div>
<div class="pt" style="left:3px;top:313px;width:28px;height:3px;"></div>
<div class="ph" style="left:15px;top:308px;width:6px;height:12px;"></div>
<div class="vb" style="left:3px;top:325px;width:27px;height:14px;background:linear-gradient(#bcc3ca,#a6adb4);border:1px solid #7c838a"></div>
<div class="vt" style="left:3px;top:326px;width:27px;">-6.9</div>
<div style="left:0px;top:343px;width:33px;height:1px;background:#8a9198"></div>
<div style="left:16px;top:344px;width:1px;height:14px;background:#8a9198"></div>
<svg style="position:absolute;left:0px;top:344px" width="33" height="14"><circle cx="8" cy="7" r="3" fill="#444"/><use href="#rm"/></svg>
<div style="left:0px;top:357px;width:33px;height:1px;background:#8a9198"></div>
<div class="fs" style="left:9px;top:446px;width:15px;height:78px;"></div>
<svg style="position:absolute;left:7px;top:364px" width="19" height="170"><use href="#ftk"/></svg>
<div style="left:15px;top:372px;width:2px;height:149px;background:#15171a"></div>
<div class="hl" style="left:9px;top:418px;width:15px;height:28px;"></div>
<div style="left:0px;top:533px;width:33px;height:14px;background:#b1b8bf;border-top:1px solid #7c838a"></div>
<div style="left:16px;top:533px;width:1px;height:14px;background:#8a9198"></div>
<svg style="position:absolute;left:0px;top:533px" width="33" height="14"><use href="#ms"/></svg>
<div style="left:0px;top:547px;width:33px;height:15px;background:#aab1b8;border-top:1px solid #222"></div>
<svg style="position:absolute;left:0px;top:548px" width="33" height="14"><use href="#ao"/></svg>
<div style="left:0px;top:562px;width:33px;height:15px;background:#90c0f8"></div>
<div style="left:-6px;top:563px;font-size:10px;letter-spacing:-0.6px;color:#10305a;text-align:center;width:45px;overflow:hidden;line-height:13px;clip-path:inset(0 6px 0 6px)">Mul06.1</div>
</div>
<div style="left:969px;top:396px;width:33px;height:593px;overflow:hidden">
<div style="left:0px;top:0px;width:33px;height:3px;background:#70c0c0"></div>
<div style="left:0px;top:4px;width:33px;height:255px;background:#1e2125;box-shadow:inset 1px 0 0 #16181b,inset -1px 0 0 #16181b"></div>
<svg style="position:absolute;left:0px;top:4px" width="33" height="255"><use href="#msc"/></svg>
<div style="left:0px;top:259px;width:33px;height:6px;background:#141619"></div>
<div style="left:1px;top:261px;width:15px;height:3px;background:#33383e"></div>
<div style="left:17px;top:261px;width:15px;height:3px;background:#33383e"></div>
<div class="il" style="left:0px;top:265px;width:33px;height:20px;"></div>
<div class="lt" style="left:3px;top:268px;color:#e8eef4;width:30px">InptL+</div>
<div style="left:0px;top:285px;width:33px;height:20px;background:#16181b"></div>
<div class="lt" style="left:3px;top:289px;color:#e8eef4;width:30px">MainC</div>
<div style="left:0px;top:305px;width:33px;height:228px;background:#a9b0b8"></div>
<div class="pt" style="left:3px;top:313px;width:28px;height:3px;"></div>
<div class="ph" style="left:15px;top:308px;width:6px;height:12px;"></div>
<div class="vb" style="left:3px;top:325px;width:27px;height:14px;background:linear-gradient(#bcc3ca,#a6adb4);border:1px solid #7c838a"></div>
<div class="vt" style="left:3px;top:326px;width:27px;">-26.1</div>
<div style="left:0px;top:343px;width:33px;height:1px;background:#8a9198"></div>
<div style="left:16px;top:344px;width:1px;height:14px;background:#8a9198"></div>
<svg style="position:absolute;left:0px;top:344px" width="33" height="14"><circle cx="8" cy="7" r="3" fill="#444"/><use href="#rm"/></svg>
<div style="left:0px;top:357px;width:33px;height:1px;background:#8a9198"></div>
<div class="fs" style="left:9px;top:484px;width:15px;height:40px;"></div>
<svg style="position:absolute;left:7px;top:364px" width="19" height="170"><use href="#ftk"/></svg>
<div style="left:15px;top:372px;width:2px;height:149px;background:#15171a"></div>
<div class="hl" style="left:9px;top:456px;width:15px;height:28px;"></div>
<div style="left:0px;top:533px;width:33px;height:14px;background:#b1b8bf;border-top:1px solid #7c838a"></div>
<div style="left:16px;top:533px;width:1px;height:14px;background:#8a9198"></div>
<svg style="position:absolute;left:0px;top:533px" width="33" height="14"><use href="#ms"/></svg>
<div style="left:0px;top:547px;width:33px;height:15px;background:#aab1b8;border-top:1px solid #222"></div>
<svg style="position:absolute;left:0px;top:548px" width="33" height="14"><use href="#ao"/></svg>
<div style="left:0px;top:562px;width:33px;height:15px;background:#70c0c0"></div>
<div style="left:-6px;top:563px;font-size:10px;letter-spacing:-0.6px;color:#10303a;text-align:center;width:45px;overflow:hidden;line-height:13px;clip-path:inset(0 6px 0 6px)">Mult11C</div>
</div>
<div style="left:1003px;top:396px;width:33px;height:593px;overflow:hidden">
<div style="left:0px;top:0px;width:33px;height:3px;background:#00d8f8"></div>
<div style="left:0px;top:4px;width:33px;height:255px;background:#1e2125;box-shadow:inset 1px 0 0 #16181b,inset -1px 0 0 #16181b"></div>
<svg style="position:absolute;left:0px;top:4px" width="33" height="255"><use href="#msc"/></svg>
<div class="mb" style="left:2px;top:145px;width:6px;height:113px;"></div>
<div class="mb" style="left:9px;top:145px;width:6px;height:113px;"></div>
<div style="left:0px;top:259px;width:33px;height:6px;background:#141619"></div>
<div style="left:1px;top:261px;width:15px;height:3px;background:#33383e"></div>
<div style="left:17px;top:261px;width:15px;height:3px;background:#33383e"></div>
<div class="il" style="left:0px;top:265px;width:33px;height:20px;"></div>
<div class="lt" style="left:3px;top:268px;color:#e8eef4;width:30px">InptL+</div>
<div style="left:0px;top:285px;width:33px;height:20px;background:#16181b"></div>
<div class="lt" style="left:3px;top:289px;color:#e8eef4;width:30px">MainC</div>
<div style="left:0px;top:305px;width:33px;height:228px;background:#a9b0b8"></div>
<div class="pt" style="left:3px;top:313px;width:28px;height:3px;"></div>
<div class="ph" style="left:15px;top:308px;width:6px;height:12px;"></div>
<div class="vb" style="left:3px;top:325px;width:27px;height:14px;background:linear-gradient(#bcc3ca,#a6adb4);border:1px solid #7c838a"></div>
<div class="vt" style="left:3px;top:326px;width:27px;">0dB</div>
<div style="left:0px;top:343px;width:33px;height:1px;background:#8a9198"></div>
<div style="left:16px;top:344px;width:1px;height:14px;background:#8a9198"></div>
<svg style="position:absolute;left:0px;top:344px" width="33" height="14"><circle cx="8" cy="7" r="3" fill="#444"/><use href="#rm"/></svg>
<div style="left:0px;top:357px;width:33px;height:1px;background:#8a9198"></div>
<div class="fs" style="left:9px;top:422px;width:15px;height:102px;"></div>
<svg style="position:absolute;left:7px;top:364px" width="19" height="170"><use href="#ftk"/></svg>
<div style="left:15px;top:372px;width:2px;height:149px;background:#15171a"></div>
<div class="hl" style="left:9px;top:394px;width:15px;height:28px;"></div>
<div style="left:0px;top:533px;width:33px;height:14px;background:#b1b8bf;border-top:1px solid #7c838a"></div>
<div style="left:16px;top:533px;width:1px;height:14px;background:#8a9198"></div>
<svg style="position:absolute;left:0px;top:533px" width="33" height="14"><use href="#ms"/></svg>
<div style="left:0px;top:547px;width:33px;height:15px;background:#aab1b8;border-top:1px solid #222"></div>
<svg style="position:absolute;left:0px;top:548px" width="33" height="14"><use href="#ao"/></svg>
<div style="left:0px;top:562px;width:33px;height:15px;background:#00d8f8"></div>
<div style="left:-6px;top:563px;font-size:10px;letter-spacing:-0.6px;color:#0a2a50;text-align:center;width:45px;overflow:hidden;line-height:13px;clip-path:inset(0 6px 0 6px)">SynhPad</div>
</div>
<div style="left:1037px;top:396px;width:33px;height:593px;overflow:hidden">
<div style="left:0px;top:0px;width:33px;height:3px;background:#1d5c6c"></div>
<div style="left:0px;top:4px;width:33px;height:255px;background:#1e2125;box-shadow:inset 1px 0 0 #16181b,inset -1px 0 0 #16181b"></div>
<svg style="position:absolute;left:0px;top:4px" width="33" height="255"><use href="#msc"/></svg>
<div class="mb" style="left:2px;top:156px;width:6px;height:102px;"></div>
<div class="mb" style="left:9px;top:156px;width:6px;height:102px;"></div>
<div style="left:0px;top:259px;width:33px;height:6px;background:#141619"></div>
<div style="left:1px;top:261px;width:15px;height:3px;background:#33383e"></div>
<div style="left:17px;top:261px;width:15px;height:3px;background:#33383e"></div>
<div class="il" style="left:0px;top:265px;width:33px;height:20px;"></div>
<div class="lt" style="left:3px;top:268px;color:#e8eef4;width:30px">InptL+</div>
<div style="left:0px;top:285px;width:33px;height:20px;background:#16181b"></div>
<div class="lt" style="left:3px;top:289px;color:#e8eef4;width:30px">MainC</div>
<div style="left:0px;top:305px;width:33px;height:228px;background:#a9b0b8"></div>
<div class="pt" style="left:3px;top:313px;width:28px;height:3px;"></div>
<div class="ph" style="left:15px;top:308px;width:6px;height:12px;"></div>
<div class="vb" style="left:3px;top:325px;width:27px;height:14px;background:linear-gradient(#bcc3ca,#a6adb4);border:1px solid #7c838a"></div>
<div class="vt" style="left:3px;top:326px;width:27px;">0dB</div>
<div style="left:0px;top:343px;width:33px;height:1px;background:#8a9198"></div>
<div style="left:16px;top:344px;width:1px;height:14px;background:#8a9198"></div>
<svg style="position:absolute;left:0px;top:344px" width="33" height="14"><circle cx="8" cy="7" r="3" fill="#444"/><use href="#rm"/></svg>
<div style="left:0px;top:357px;width:33px;height:1px;background:#8a9198"></div>
<div class="fs" style="left:9px;top:422px;width:15px;height:102px;"></div>
<svg style="position:absolute;left:7px;top:364px" width="19" height="170"><use href="#ftk"/></svg>
<div style="left:15px;top:372px;width:2px;height:149px;background:#15171a"></div>
<div class="hl" style="left:9px;top:394px;width:15px;height:28px;"></div>
<div style="left:0px;top:533px;width:33px;height:14px;background:#b1b8bf;border-top:1px solid #7c838a"></div>
<div style="left:16px;top:533px;width:1px;height:14px;background:#8a9198"></div>
<svg style="position:absolute;left:0px;top:533px" width="33" height="14"><use href="#ms"/></svg>
<div style="left:0px;top:547px;width:33px;height:15px;background:#aab1b8;border-top:1px solid #222"></div>
<svg style="position:absolute;left:0px;top:548px" width="33" height="14"><use href="#ao"/></svg>
<div style="left:0px;top:562px;width:33px;height:15px;background:#1d5c6c"></div>
<div style="left:-6px;top:563px;font-size:10px;letter-spacing:-0.6px;color:#d0e0e4;text-align:center;width:45px;overflow:hidden;line-height:13px;clip-path:inset(0 6px 0 6px)">Synllo1</div>
</div>
<div style="left:1071px;top:396px;width:33px;height:593px;overflow:hidden">
<div style="left:0px;top:0px;width:33px;height:3px;background:#5aa8a8"></div>
<div style="left:0px;top:4px;width:33px;height:255px;background:#1e2125;box-shadow:inset 1px 0 0 #16181b,inset -1px 0 0 #16181b"></div>
<svg style="position:absolute;left:0px;top:4px" width="33" height="255"><use href="#msc"/></svg>
<div style="left:0px;top:259px;width:33px;height:6px;background:#141619"></div>
<div style="left:1px;top:261px;width:15px;height:3px;background:#33383e"></div>
<div style="left:17px;top:261px;width:15px;height:3px;background:#33383e"></div>
<div class="il" style="left:0px;top:265px;width:33px;height:20px;"></div>
<div class="lt" style="left:3px;top:268px;color:#e8eef4;width:30px">InptL+</div>
<div style="left:0px;top:285px;width:33px;height:20px;background:#16181b"></div>
<div class="lt" style="left:3px;top:289px;color:#e8eef4;width:30px">MainC</div>
<div style="left:0px;top:305px;width:33px;height:228px;background:#a9b0b8"></div>
<div class="pt" style="left:3px;top:313px;width:28px;height:3px;"></div>
<div class="ph" style="left:15px;top:308px;width:6px;height:12px;"></div>
<div class="vb" style="left:3px;top:325px;width:27px;height:14px;background:linear-gradient(#bcc3ca,#a6adb4);border:1px solid #7c838a"></div>
<div class="vt" style="left:3px;top:326px;width:27px;">0dB</div>
<div style="left:0px;top:343px;width:33px;height:1px;background:#8a9198"></div>
<div style="left:16px;top:344px;width:1px;height:14px;background:#8a9198"></div>
<svg style="position:absolute;left:0px;top:344px" width="33" height="14"><circle cx="8" cy="7" r="3" fill="#444"/><use href="#rm"/></svg>
<div style="left:0px;top:357px;width:33px;height:1px;background:#8a9198"></div>
<div class="fs" style="left:9px;top:422px;width:15px;height:102px;"></div>
<svg style="position:absolute;left:7px;top:364px" width="19" height="170"><use href="#ftk"/></svg>
<div style="left:15px;top:372px;width:2px;height:149px;background:#15171a"></div>
<div class="hl" style="left:9px;top:394px;width:15px;height:28px;"></div>
<div style="left:0px;top:533px;width:33px;height:14px;background:#b1b8bf;border-top:1px solid #7c838a"></div>
<div style="left:16px;top:533px;width:1px;height:14px;background:#8a9198"></div>
<svg style="position:absolute;left:0px;top:533px" width="33" height="14"><use href="#ms"/></svg>
<div style="left:0px;top:547px;width:33px;height:15px;background:#aab1b8;border-top:1px solid #222"></div>
<svg style="position:absolute;left:0px;top:548px" width="33" height="14"><use href="#ao"/></svg>
<div style="left:0px;top:562px;width:33px;height:15px;background:#5aa8a8"></div>
<div style="left:-6px;top:563px;font-size:10px;letter-spacing:-0.6px;color:#10303a;text-align:center;width:45px;overflow:hidden;line-height:13px;clip-path:inset(0 6px 0 6px)">Synllo2</div>
</div>
<div style="left:1105px;top:396px;width:33px;height:593px;overflow:hidden">
<div style="left:0px;top:0px;width:33px;height:3px;background:#5aa8a8"></div>
<div style="left:0px;top:4px;width:33px;height:255px;background:#1e2125;box-shadow:inset 1px 0 0 #16181b,inset -1px 0 0 #16181b"></div>
<svg style="position:absolute;left:0px;top:4px" width="33" height="255"><use href="#msc"/></svg>
<div style="left:0px;top:259px;width:33px;height:6px;background:#141619"></div>
<div style="left:1px;top:261px;width:15px;height:3px;background:#33383e"></div>
<div style="left:17px;top:261px;width:15px;height:3px;background:#33383e"></div>
<div class="il" style="left:0px;top:265px;width:33px;height:20px;"></div>
<div class="lt" style="left:3px;top:268px;color:#e8eef4;width:30px">InptL+</div>
<div style="left:0px;top:285px;width:33px;height:20px;background:#16181b"></div>
<div class="lt" style="left:3px;top:289px;color:#e8eef4;width:30px">MainC</div>
<div style="left:0px;top:305px;width:33px;height:228px;background:#a9b0b8"></div>
<div class="pt" style="left:3px;top:313px;width:28px;height:3px;"></div>
<div class="ph" style="left:15px;top:308px;width:6px;height:12px;"></div>
<div class="vb" style="left:3px;top:325px;width:27px;height:14px;background:linear-gradient(#bcc3ca,#a6adb4);border:1px solid #7c838a"></div>
<div class="vt" style="left:3px;top:326px;width:27px;">0dB</div>
<div style="left:0px;top:343px;width:33px;height:1px;background:#8a9198"></div>
<div style="left:16px;top:344px;width:1px;height:14px;background:#8a9198"></div>
<svg style="position:absolute;left:0px;top:344px" width="33" height="14"><circle cx="8" cy="7" r="3" fill="#444"/><use href="#rm"/></svg>
<div style="left:0px;top:357px;width:33px;height:1px;background:#8a9198"></div>
<div class="fs" style="left:9px;top:422px;width:15px;height:102px;"></div>
<svg style="position:absolute;left:7px;top:364px" width="19" height="170"><use href="#ftk"/></svg>
<div style="left:15px;top:372px;width:2px;height:149px;background:#15171a"></div>
<div class="hl" style="left:9px;top:394px;width:15px;height:28px;"></div>
<div style="left:0px;top:533px;width:33px;height:14px;background:#b1b8bf;border-top:1px solid #7c838a"></div>
<div style="left:16px;top:533px;width:1px;height:14px;background:#8a9198"></div>
<svg style="position:absolute;left:0px;top:533px" width="33" height="14"><use href="#ms"/></svg>
<div style="left:0px;top:547px;width:33px;height:15px;background:#aab1b8;border-top:1px solid #222"></div>
<svg style="position:absolute;left:0px;top:548px" width="33" height="14"><use href="#ao"/></svg>
<div style="left:0px;top:562px;width:33px;height:15px;background:#5aa8a8"></div>
<div style="left:-6px;top:563px;font-size:10px;letter-spacing:-0.6px;color:#10303a;text-align:center;width:45px;overflow:hidden;line-height:13px;clip-path:inset(0 6px 0 6px)">Synllo3</div>
</div>
<div style="left:1139px;top:396px;width:33px;height:593px;overflow:hidden">
<div style="left:0px;top:0px;width:33px;height:3px;background:#ffffff"></div>
<div style="left:0px;top:4px;width:33px;height:255px;background:#1e2125;box-shadow:inset 1px 0 0 #16181b,inset -1px 0 0 #16181b"></div>
<svg style="position:absolute;left:0px;top:4px" width="33" height="255"><use href="#msc"/></svg>
<div style="left:0px;top:259px;width:33px;height:6px;background:#141619"></div>
<div style="left:1px;top:261px;width:15px;height:3px;background:#4a8ec0"></div>
<div style="left:17px;top:261px;width:15px;height:3px;background:#33383e"></div>
<div class="il" style="left:0px;top:265px;width:33px;height:20px;"></div>
<div style="left:3px;top:270px;width:28px;height:9px;background:repeating-linear-gradient(90deg,#8a9aa8 0 1px,transparent 1px 3px)"></div>
<div style="left:3px;top:270px;width:1px;height:9px;background:#5aa8e0"></div>
<div style="left:0px;top:285px;width:33px;height:20px;background:#16181b"></div>
<div class="lt" style="left:3px;top:289px;color:#8ab8d8;width:30px">MainC</div>
<div style="left:0px;top:305px;width:33px;height:228px;background:#7a8790"></div>
<div class="pt" style="left:3px;top:313px;width:28px;height:3px;"></div>
<div class="ph" style="left:15px;top:308px;width:6px;height:12px;"></div>
<div class="vb" style="left:3px;top:325px;width:27px;height:14px;background:linear-gradient(#8c98a0,#76828a);border:1px solid #7c838a"></div>
<div class="vt" style="left:3px;top:326px;width:27px;">0dB</div>
<div style="left:0px;top:343px;width:33px;height:1px;background:#8a9198"></div>
<div style="left:0px;top:357px;width:33px;height:1px;background:#8a9198"></div>
<div class="fs" style="left:9px;top:422px;width:15px;height:102px;"></div>
<svg style="position:absolute;left:7px;top:364px" width="19" height="170"><use href="#ftk"/></svg>
<div style="left:15px;top:372px;width:2px;height:149px;background:#15171a"></div>
<div class="hd" style="left:9px;top:394px;width:15px;height:28px;"></div>
<div style="left:0px;top:533px;width:33px;height:14px;background:#76838c;border-top:1px solid #5c6870"></div>
<div style="left:16px;top:533px;width:1px;height:14px;background:#8a9198"></div>
<svg style="position:absolute;left:0px;top:533px" width="33" height="14"><use href="#ms"/></svg>
<div style="left:0px;top:547px;width:33px;height:15px;background:#7a8790;border-top:1px solid #222"></div>
<svg style="position:absolute;left:0px;top:548px" width="33" height="14"><use href="#ao"/></svg>
<div style="left:0px;top:562px;width:33px;height:15px;background:#ffffff"></div>
<div style="left:-6px;top:563px;font-size:10px;letter-spacing:-0.6px;color:#202020;text-align:center;width:45px;overflow:hidden;line-height:13px;clip-path:inset(0 6px 0 6px)">Sc</div>
</div>
<div style="left:1173px;top:396px;width:33px;height:593px;overflow:hidden">
<div style="left:0px;top:0px;width:33px;height:3px;background:#5aa8a8"></div>
<div style="left:0px;top:4px;width:33px;height:255px;background:#1e2125;box-shadow:inset 1px 0 0 #16181b,inset -1px 0 0 #16181b"></div>
<svg style="position:absolute;left:0px;top:4px" width="33" height="255"><use href="#msc"/></svg>
<div style="left:0px;top:259px;width:33px;height:6px;background:#141619"></div>
<div style="left:1px;top:261px;width:15px;height:3px;background:#33383e"></div>
<div style="left:17px;top:261px;width:15px;height:3px;background:#33383e"></div>
<div class="il" style="left:0px;top:265px;width:33px;height:20px;"></div>
<div class="lt" style="left:3px;top:268px;color:#e8eef4;width:30px">InptL+</div>
<div style="left:0px;top:285px;width:33px;height:20px;background:#16181b"></div>
<div class="lt" style="left:3px;top:289px;color:#e8eef4;width:30px">MainC</div>
<div style="left:0px;top:305px;width:33px;height:228px;background:#a9b0b8"></div>
<div class="pt" style="left:3px;top:313px;width:28px;height:3px;"></div>
<div class="ph" style="left:15px;top:308px;width:6px;height:12px;"></div>
<div class="vb" style="left:3px;top:325px;width:27px;height:14px;background:linear-gradient(#bcc3ca,#a6adb4);border:1px solid #7c838a"></div>
<div class="vt" style="left:3px;top:326px;width:27px;">0dB</div>
<div style="left:0px;top:343px;width:33px;height:1px;background:#8a9198"></div>
<div style="left:16px;top:344px;width:1px;height:14px;background:#8a9198"></div>
<svg style="position:absolute;left:0px;top:344px" width="33" height="14"><circle cx="8" cy="7" r="3" fill="#444"/><use href="#rm"/></svg>
<div style="left:0px;top:357px;width:33px;height:1px;background:#8a9198"></div>
<div class="fs" style="left:9px;top:422px;width:15px;height:102px;"></div>
<svg style="position:absolute;left:7px;top:364px" width="19" height="170"><use href="#ftk"/></svg>
<div style="left:15px;top:372px;width:2px;height:149px;background:#15171a"></div>
<div class="hl" style="left:9px;top:394px;width:15px;height:28px;"></div>
<div style="left:0px;top:533px;width:33px;height:14px;background:#b1b8bf;border-top:1px solid #7c838a"></div>
<div style="left:16px;top:533px;width:1px;height:14px;background:#8a9198"></div>
<svg style="position:absolute;left:0px;top:533px" width="33" height="14"><use href="#ms"/></svg>
<div style="left:0px;top:547px;width:33px;height:15px;background:#aab1b8;border-top:1px solid #222"></div>
<svg style="position:absolute;left:0px;top:548px" width="33" height="14"><use href="#ao"/></svg>
<div style="left:0px;top:562px;width:33px;height:15px;background:#5aa8a8"></div>
<div style="left:-6px;top:563px;font-size:10px;letter-spacing:-0.6px;color:#10303a;text-align:center;width:45px;overflow:hidden;line-height:13px;clip-path:inset(0 6px 0 6px)">Synllo4</div>
</div>
<div style="left:1207px;top:396px;width:33px;height:593px;overflow:hidden">
<div style="left:0px;top:0px;width:33px;height:3px;background:#40e8c0"></div>
<div style="left:0px;top:4px;width:33px;height:255px;background:#1e2125;box-shadow:inset 1px 0 0 #16181b,inset -1px 0 0 #16181b"></div>
<svg style="position:absolute;left:0px;top:4px" width="33" height="255"><use href="#msc"/></svg>
<div style="left:0px;top:259px;width:33px;height:6px;background:#141619"></div>
<div style="left:1px;top:261px;width:15px;height:3px;background:#33383e"></div>
<div style="left:17px;top:261px;width:15px;height:3px;background:#33383e"></div>
<div class="il" style="left:0px;top:265px;width:33px;height:20px;"></div>
<div class="lt" style="left:3px;top:268px;color:#e8eef4;width:30px">InptL+</div>
<div style="left:0px;top:285px;width:33px;height:20px;background:#16181b"></div>
<div class="lt" style="left:3px;top:289px;color:#e8eef4;width:30px">MainC</div>
<div style="left:0px;top:305px;width:33px;height:228px;background:#a9b0b8"></div>
<div class="pt" style="left:3px;top:313px;width:28px;height:3px;"></div>
<div class="ph" style="left:15px;top:308px;width:6px;height:12px;"></div>
<div class="vb" style="left:3px;top:325px;width:27px;height:14px;background:linear-gradient(#bcc3ca,#a6adb4);border:1px solid #7c838a"></div>
<div class="vt" style="left:3px;top:326px;width:27px;">0dB</div>
<div style="left:0px;top:343px;width:33px;height:1px;background:#8a9198"></div>
<div style="left:16px;top:344px;width:1px;height:14px;background:#8a9198"></div>
<svg style="position:absolute;left:0px;top:344px" width="33" height="14"><circle cx="8" cy="7" r="3" fill="#444"/><use href="#rm"/></svg>
<div style="left:0px;top:357px;width:33px;height:1px;background:#8a9198"></div>
<div class="fs" style="left:9px;top:422px;width:15px;height:102px;"></div>
<svg style="position:absolute;left:7px;top:364px" width="19" height="170"><use href="#ftk"/></svg>
<div style="left:15px;top:372px;width:2px;height:149px;background:#15171a"></div>
<div class="hl" style="left:9px;top:394px;width:15px;height:28px;"></div>
<div style="left:0px;top:533px;width:33px;height:14px;background:#b1b8bf;border-top:1px solid #7c838a"></div>
<div style="left:16px;top:533px;width:1px;height:14px;background:#8a9198"></div>
<svg style="position:absolute;left:0px;top:533px" width="33" height="14"><use href="#ms"/></svg>
<div style="left:0px;top:547px;width:33px;height:15px;background:#aab1b8;border-top:1px solid #222"></div>
<svg style="position:absolute;left:0px;top:548px" width="33" height="14"><use href="#ao"/></svg>
<div style="left:0px;top:562px;width:33px;height:15px;background:#40e8c0"></div>
<div style="left:-6px;top:563px;font-size:10px;letter-spacing:-0.6px;color:#103830;text-align:center;width:45px;overflow:hidden;line-height:13px;clip-path:inset(0 6px 0 6px)">Synllo5</div>
</div>
<div style="left:1241px;top:396px;width:33px;height:593px;overflow:hidden">
<div style="left:0px;top:0px;width:33px;height:3px;background:#1040f0"></div>
<div style="left:0px;top:4px;width:33px;height:255px;background:#1e2125;box-shadow:inset 1px 0 0 #16181b,inset -1px 0 0 #16181b"></div>
<svg style="position:absolute;left:0px;top:4px" width="33" height="255"><use href="#msc"/></svg>
<div style="left:0px;top:259px;width:33px;height:6px;background:#141619"></div>
<div style="left:1px;top:261px;width:15px;height:3px;background:#4a8ec0"></div>
<div style="left:17px;top:261px;width:15px;height:3px;background:#33383e"></div>
<div class="il" style="left:0px;top:265px;width:33px;height:20px;"></div>
<div class="lt" style="left:3px;top:268px;color:#e8a030;width:30px">Prence5</div>
<div style="left:0px;top:285px;width:33px;height:20px;background:#16181b"></div>
<div class="lt" style="left:3px;top:289px;color:#e8a030;width:30px">MainC</div>
<div style="left:0px;top:305px;width:33px;height:228px;background:#a9b0b8"></div>
<div class="pt" style="left:3px;top:313px;width:28px;height:3px;"></div>
<div class="ph" style="left:15px;top:308px;width:6px;height:12px;"></div>
<div class="vb" style="left:3px;top:325px;width:27px;height:14px;background:linear-gradient(#bcc3ca,#a6adb4);border:1px solid #7c838a"></div>
<div class="vt" style="left:3px;top:326px;width:27px;">-9.5</div>
<div style="left:0px;top:343px;width:33px;height:1px;background:#8a9198"></div>
<div style="left:0px;top:344px;width:16px;height:14px;background:#c01818"></div>
<div style="left:17px;top:344px;width:16px;height:14px;background:#3ab0d8"></div>
<div style="left:16px;top:344px;width:1px;height:14px;background:#8a9198"></div>
<svg style="position:absolute;left:0px;top:344px" width="33" height="14"><circle cx="8" cy="7" r="3" fill="#400"/><use href="#rm"/></svg>
<div style="left:0px;top:357px;width:33px;height:1px;background:#8a9198"></div>
<div class="fs" style="left:9px;top:454px;width:15px;height:70px;"></div>
<svg style="position:absolute;left:7px;top:364px" width="19" height="170"><use href="#ftk"/></svg>
<div style="left:15px;top:372px;width:2px;height:149px;background:#15171a"></div>
<div class="hl" style="left:9px;top:426px;width:15px;height:28px;"></div>
<div style="left:0px;top:533px;width:33px;height:14px;background:#b1b8bf;border-top:1px solid #7c838a"></div>
<div style="left:16px;top:533px;width:1px;height:14px;background:#8a9198"></div>
<svg style="position:absolute;left:0px;top:533px" width="33" height="14"><use href="#ms"/></svg>
<div style="left:0px;top:547px;width:33px;height:15px;background:#aab1b8;border-top:1px solid #222"></div>
<svg style="position:absolute;left:0px;top:548px" width="33" height="14"><use href="#ao"/></svg>
<div style="left:0px;top:562px;width:33px;height:15px;background:#1040f0"></div>
<div style="left:-6px;top:563px;font-size:10px;letter-spacing:-0.6px;color:#e8f0ff;text-align:center;width:45px;overflow:hidden;line-height:13px;clip-path:inset(0 6px 0 6px)">Prence5</div>
</div>
<div style="left:1275px;top:396px;width:33px;height:593px;overflow:hidden">
<div style="left:0px;top:0px;width:33px;height:3px;background:#f01010"></div>
<div style="left:0px;top:4px;width:33px;height:255px;background:#1e2125;box-shadow:inset 1px 0 0 #16181b,inset -1px 0 0 #16181b"></div>
<svg style="position:absolute;left:0px;top:4px" width="33" height="255"><use href="#msc"/></svg>
<div style="left:0px;top:259px;width:33px;height:6px;background:#141619"></div>
<div style="left:1px;top:261px;width:15px;height:3px;background:#4a8ec0"></div>
<div style="left:17px;top:261px;width:15px;height:3px;background:#33383e"></div>
<div class="il" style="left:0px;top:265px;width:33px;height:20px;"></div>
<div class="lt" style="left:3px;top:268px;color:#e8a030;width:30px">Prence6</div>
<div style="left:0px;top:285px;width:33px;height:20px;background:#16181b"></div>
<div class="lt" style="left:3px;top:289px;color:#e8a030;width:30px">MainC</div>
<div style="left:0px;top:305px;width:33px;height:228px;background:#a9b0b8"></div>
<div class="pt" style="left:3px;top:313px;width:28px;height:3px;"></div>
<div class="ph" style="left:15px;top:308px;width:6px;height:12px;"></div>
<div class="vb" style="left:3px;top:325px;width:27px;height:14px;background:linear-gradient(#bcc3ca,#a6adb4);border:1px solid #7c838a"></div>
<div class="vt" style="left:3px;top:326px;width:27px;">-7.7</div>
<div style="left:0px;top:343px;width:33px;height:1px;background:#8a9198"></div>
<div style="left:16px;top:344px;width:1px;height:14px;background:#8a9198"></div>
<svg style="position:absolute;left:0px;top:344px" width="33" height="14"><circle cx="8" cy="7" r="3" fill="#444"/><use href="#rm"/></svg>
<div style="left:0px;top:357px;width:33px;height:1px;background:#8a9198"></div>
<div class="fs" style="left:9px;top:448px;width:15px;height:76px;"></div>
<svg style="position:absolute;left:7px;top:364px" width="19" height="170"><use href="#ftk"/></svg>
<div style="left:15px;top:372px;width:2px;height:149px;background:#15171a"></div>
<div class="hl" style="left:9px;top:420px;width:15px;height:28px;"></div>
<div style="left:0px;top:533px;width:33px;height:14px;background:#b1b8bf;border-top:1px solid #7c838a"></div>
<div style="left:16px;top:533px;width:1px;height:14px;background:#8a9198"></div>
<svg style="position:absolute;left:0px;top:533px" width="33" height="14"><use href="#ms"/></svg>
<div style="left:0px;top:547px;width:33px;height:15px;background:#aab1b8;border-top:1px solid #222"></div>
<svg style="position:absolute;left:0px;top:548px" width="33" height="14"><use href="#ao"/></svg>
<div style="left:0px;top:562px;width:33px;height:15px;background:#f01010"></div>
<div style="left:-6px;top:563px;font-size:10px;letter-spacing:-0.6px;color:#fff0f0;text-align:center;width:45px;overflow:hidden;line-height:13px;clip-path:inset(0 6px 0 6px)">Prence6</div>
</div>
<div style="left:1309px;top:396px;width:33px;height:593px;overflow:hidden">
<div style="left:0px;top:0px;width:33px;height:3px;background:#c01010"></div>
<div style="left:0px;top:4px;width:33px;height:255px;background:#1e2125;box-shadow:inset 1px 0 0 #16181b,inset -1px 0 0 #16181b"></div>
<svg style="position:absolute;left:0px;top:4px" width="33" height="255"><use href="#msc"/></svg>
<div style="left:0px;top:259px;width:33px;height:6px;background:#141619"></div>
<div style="left:1px;top:261px;width:15px;height:3px;background:#4a8ec0"></div>
<div style="left:17px;top:261px;width:15px;height:3px;background:#33383e"></div>
<div class="il" style="left:0px;top:265px;width:33px;height:20px;"></div>
<div class="lt" style="left:3px;top:268px;color:#e8eef4;width:30px">InptL+</div>
<div style="left:0px;top:285px;width:33px;height:20px;background:#16181b"></div>
<div class="lt" style="left:3px;top:289px;color:#e8eef4;width:30px">MainC</div>
<div style="left:0px;top:305px;width:33px;height:228px;background:#a9b0b8"></div>
<div class="pt" style="left:3px;top:313px;width:28px;height:3px;"></div>
<div class="ph" style="left:15px;top:308px;width:6px;height:12px;"></div>
<div class="vb" style="left:3px;top:325px;width:27px;height:14px;background:linear-gradient(#bcc3ca,#a6adb4);border:1px solid #7c838a"></div>
<div class="vt" style="left:3px;top:326px;width:27px;">0dB</div>
<div style="left:0px;top:343px;width:33px;height:1px;background:#8a9198"></div>
<div style="left:16px;top:344px;width:1px;height:14px;background:#8a9198"></div>
<svg style="position:absolute;left:0px;top:344px" width="33" height="14"><circle cx="8" cy="7" r="3" fill="#444"/><use href="#rm"/></svg>
<div style="left:0px;top:357px;width:33px;height:1px;background:#8a9198"></div>
<div class="fs" style="left:9px;top:422px;width:15px;height:102px;"></div>
<svg style="position:absolute;left:7px;top:364px" width="19" height="170"><use href="#ftk"/></svg>
<div style="left:15px;top:372px;width:2px;height:149px;background:#15171a"></div>
<div class="hl" style="left:9px;top:394px;width:15px;height:28px;"></div>
<div style="left:0px;top:533px;width:33px;height:14px;background:#b1b8bf;border-top:1px solid #7c838a"></div>
<div style="left:16px;top:533px;width:1px;height:14px;background:#8a9198"></div>
<svg style="position:absolute;left:0px;top:533px" width="33" height="14"><use href="#ms"/></svg>
<div style="left:0px;top:547px;width:33px;height:15px;background:#aab1b8;border-top:1px solid #222"></div>
<svg style="position:absolute;left:0px;top:548px" width="33" height="14"><use href="#ao"/></svg>
<div style="left:0px;top:562px;width:33px;height:15px;background:#c01010"></div>
<div style="left:-6px;top:563px;font-size:10px;letter-spacing:-0.6px;color:#fff0f0;text-align:center;width:45px;overflow:hidden;line-height:13px;clip-path:inset(0 6px 0 6px)">Mellow</div>
</div>
<div style="left:1343px;top:396px;width:33px;height:593px;overflow:hidden">
<div style="left:0px;top:0px;width:33px;height:3px;background:#30e8c0"></div>
<div style="left:0px;top:4px;width:33px;height:255px;background:#1e2125;box-shadow:inset 1px 0 0 #16181b,inset -1px 0 0 #16181b"></div>
<svg style="position:absolute;left:0px;top:4px" width="33" height="255"><use href="#msc"/></svg>
<div style="left:0px;top:259px;width:33px;height:6px;background:#141619"></div>
<div style="left:1px;top:261px;width:15px;height:3px;background:#33383e"></div>
<div style="left:17px;top:261px;width:15px;height:3px;background:#33383e"></div>
<div class="il" style="left:0px;top:265px;width:33px;height:20px;"></div>
<div class="lt" style="left:3px;top:268px;color:#e8eef4;width:30px">InptL+</div>
<div style="left:0px;top:285px;width:33px;height:20px;background:#16181b"></div>
<div class="lt" style="left:3px;top:289px;color:#e8eef4;width:30px">MainC</div>
<div style="left:0px;top:305px;width:33px;height:228px;background:#a9b0b8"></div>
<div class="pt" style="left:3px;top:313px;width:28px;height:3px;"></div>
<div class="ph" style="left:15px;top:308px;width:6px;height:12px;"></div>
<div class="vb" style="left:3px;top:325px;width:27px;height:14px;background:linear-gradient(#bcc3ca,#a6adb4);border:1px solid #7c838a"></div>
<div class="vt" style="left:3px;top:326px;width:27px;">0dB</div>
<div style="left:0px;top:343px;width:33px;height:1px;background:#8a9198"></div>
<div style="left:16px;top:344px;width:1px;height:14px;background:#8a9198"></div>
<svg style="position:absolute;left:0px;top:344px" width="33" height="14"><circle cx="8" cy="7" r="3" fill="#444"/><use href="#rm"/></svg>
<div style="left:0px;top:357px;width:33px;height:1px;background:#8a9198"></div>
<div class="fs" style="left:9px;top:422px;width:15px;height:102px;"></div>
<svg style="position:absolute;left:7px;top:364px" width="19" height="170"><use href="#ftk"/></svg>
<div style="left:15px;top:372px;width:2px;height:149px;background:#15171a"></div>
<div class="hl" style="left:9px;top:394px;width:15px;height:28px;"></div>
<div style="left:0px;top:533px;width:33px;height:14px;background:#b1b8bf;border-top:1px solid #7c838a"></div>
<div style="left:16px;top:533px;width:1px;height:14px;background:#8a9198"></div>
<svg style="position:absolute;left:0px;top:533px" width="33" height="14"><use href="#ms"/></svg>
<div style="left:0px;top:547px;width:33px;height:15px;background:#aab1b8;border-top:1px solid #222"></div>
<svg style="position:absolute;left:0px;top:548px" width="33" height="14"><use href="#ao"/></svg>
<div style="left:0px;top:562px;width:33px;height:15px;background:#30e8c0"></div>
<div style="left:-6px;top:563px;font-size:10px;letter-spacing:-0.6px;color:#103830;text-align:center;width:45px;overflow:hidden;line-height:13px;clip-path:inset(0 6px 0 6px)">Knaoove</div>
</div>
<div style="left:1377px;top:396px;width:33px;height:593px;overflow:hidden">
<div style="left:0px;top:0px;width:33px;height:3px;background:#a0f0d8"></div>
<div style="left:0px;top:4px;width:33px;height:255px;background:#1e2125;box-shadow:inset 1px 0 0 #16181b,inset -1px 0 0 #16181b"></div>
<svg style="position:absolute;left:0px;top:4px" width="33" height="255"><use href="#msc"/></svg>
<div style="left:0px;top:259px;width:33px;height:6px;background:#141619"></div>
<div style="left:1px;top:261px;width:15px;height:3px;background:#4a8ec0"></div>
<div style="left:17px;top:261px;width:15px;height:3px;background:#33383e"></div>
<div class="il" style="left:0px;top:265px;width:33px;height:20px;"></div>
<div class="lt" style="left:3px;top:268px;color:#e8a030;width:30px">Prence7</div>
<div style="left:0px;top:285px;width:33px;height:20px;background:#16181b"></div>
<div class="lt" style="left:3px;top:289px;color:#e8a030;width:30px">MainC</div>
<div style="left:0px;top:305px;width:33px;height:228px;background:#a9b0b8"></div>
<div class="pt" style="left:3px;top:313px;width:28px;height:3px;"></div>
<div class="ph" style="left:15px;top:308px;width:6px;height:12px;"></div>
<div class="vb" style="left:3px;top:325px;width:27px;height:14px;background:linear-gradient(#bcc3ca,#a6adb4);border:1px solid #7c838a"></div>
<div class="vt" style="left:3px;top:326px;width:27px;">-6.5</div>
<div style="left:0px;top:343px;width:33px;height:1px;background:#8a9198"></div>
<div style="left:16px;top:344px;width:1px;height:14px;background:#8a9198"></div>
<svg style="position:absolute;left:0px;top:344px" width="33" height="14"><circle cx="8" cy="7" r="3" fill="#444"/><use href="#rm"/></svg>
<div style="left:0px;top:357px;width:33px;height:1px;background:#8a9198"></div>
<div class="fs" style="left:9px;top:445px;width:15px;height:79px;"></div>
<svg style="position:absolute;left:7px;top:364px" width="19" height="170"><use href="#ftk"/></svg>
<div style="left:15px;top:372px;width:2px;height:149px;background:#15171a"></div>
<div class="hl" style="left:9px;top:417px;width:15px;height:28px;"></div>
<div style="left:0px;top:533px;width:33px;height:14px;background:#b1b8bf;border-top:1px solid #7c838a"></div>
<div style="left:16px;top:533px;width:1px;height:14px;background:#8a9198"></div>
<svg style="position:absolute;left:0px;top:533px" width="33" height="14"><use href="#ms"/></svg>
<div style="left:0px;top:547px;width:33px;height:15px;background:#aab1b8;border-top:1px solid #222"></div>
<svg style="position:absolute;left:0px;top:548px" width="33" height="14"><use href="#ao"/></svg>
<div style="left:0px;top:562px;width:33px;height:15px;background:#a0f0d8"></div>
<div style="left:-6px;top:563px;font-size:10px;letter-spacing:-0.6px;color:#203830;text-align:center;width:45px;overflow:hidden;line-height:13px;clip-path:inset(0 6px 0 6px)">Prence7</div>
</div>
<div style="left:1411px;top:396px;width:33px;height:593px;overflow:hidden">
<div style="left:0px;top:0px;width:33px;height:3px;background:#5aa8a8"></div>
<div style="left:0px;top:4px;width:33px;height:255px;background:#1e2125;box-shadow:inset 1px 0 0 #16181b,inset -1px 0 0 #16181b"></div>
<svg style="position:absolute;left:0px;top:4px" width="33" height="255"><use href="#msc"/></svg>
<div style="left:0px;top:259px;width:33px;height:6px;background:#141619"></div>
<div style="left:1px;top:261px;width:15px;height:3px;background:#33383e"></div>
<div style="left:17px;top:261px;width:15px;height:3px;background:#33383e"></div>
<div class="il" style="left:0px;top:265px;width:33px;height:20px;"></div>
<div class="lt" style="left:3px;top:268px;color:#e8a030;width:30px">Impact</div>
<div style="left:0px;top:285px;width:33px;height:20px;background:#16181b"></div>
<div class="lt" style="left:3px;top:289px;color:#e8a030;width:30px">MainC</div>
<div style="left:0px;top:305px;width:33px;height:228px;background:#a9b0b8"></div>
<div class="pt" style="left:3px;top:313px;width:28px;height:3px;"></div>
<div class="ph" style="left:15px;top:308px;width:6px;height:12px;"></div>
<div class="vb" style="left:3px;top:325px;width:27px;height:14px;background:linear-gradient(#bcc3ca,#a6adb4);border:1px solid #7c838a"></div>
<div class="vt" style="left:3px;top:326px;width:27px;">-14.4</div>
<div style="left:0px;top:343px;width:33px;height:1px;background:#8a9198"></div>
<div style="left:16px;top:344px;width:1px;height:14px;background:#8a9198"></div>
<svg style="position:absolute;left:0px;top:344px" width="33" height="14"><circle cx="8" cy="7" r="3" fill="#444"/><use href="#rm"/></svg>
<div style="left:0px;top:357px;width:33px;height:1px;background:#8a9198"></div>
<div class="fs" style="left:9px;top:464px;width:15px;height:60px;"></div>
<svg style="position:absolute;left:7px;top:364px" width="19" height="170"><use href="#ftk"/></svg>
<div style="left:15px;top:372px;width:2px;height:149px;background:#15171a"></div>
<div class="hl" style="left:9px;top:436px;width:15px;height:28px;"></div>
<div style="left:0px;top:533px;width:33px;height:14px;background:#b1b8bf;border-top:1px solid #7c838a"></div>
<div style="left:16px;top:533px;width:1px;height:14px;background:#8a9198"></div>
<svg style="position:absolute;left:0px;top:533px" width="33" height="14"><use href="#ms"/></svg>
<div style="left:0px;top:547px;width:33px;height:15px;background:#aab1b8;border-top:1px solid #222"></div>
<svg style="position:absolute;left:0px;top:548px" width="33" height="14"><use href="#ao"/></svg>
<div style="left:0px;top:562px;width:33px;height:15px;background:#5aa8a8"></div>
<div style="left:-6px;top:563px;font-size:10px;letter-spacing:-0.6px;color:#10303a;text-align:center;width:45px;overflow:hidden;line-height:13px;clip-path:inset(0 6px 0 6px)">Stereo2</div>
</div>
<div style="left:1445px;top:396px;width:33px;height:593px;overflow:hidden">
<div style="left:0px;top:0px;width:33px;height:3px;background:#5aa8a8"></div>
<div style="left:0px;top:4px;width:33px;height:255px;background:#1e2125;box-shadow:inset 1px 0 0 #16181b,inset -1px 0 0 #16181b"></div>
<svg style="position:absolute;left:0px;top:4px" width="33" height="255"><use href="#msc"/></svg>
<div style="left:0px;top:259px;width:33px;height:6px;background:#141619"></div>
<div style="left:1px;top:261px;width:15px;height:3px;background:#33383e"></div>
<div style="left:17px;top:261px;width:15px;height:3px;background:#33383e"></div>
<div class="il" style="left:0px;top:265px;width:33px;height:20px;"></div>
<div class="lt" style="left:3px;top:268px;color:#e8a030;width:30px">Impact</div>
<div style="left:0px;top:285px;width:33px;height:20px;background:#16181b"></div>
<div class="lt" style="left:3px;top:289px;color:#e8a030;width:30px">MainC</div>
<div style="left:0px;top:305px;width:33px;height:228px;background:#a9b0b8"></div>
<div class="pt" style="left:3px;top:313px;width:28px;height:3px;"></div>
<div class="ph" style="left:15px;top:308px;width:6px;height:12px;"></div>
<div class="vb" style="left:3px;top:325px;width:27px;height:14px;background:linear-gradient(#bcc3ca,#a6adb4);border:1px solid #7c838a"></div>
<div class="vt" style="left:3px;top:326px;width:27px;">-8.4</div>
<div style="left:0px;top:343px;width:33px;height:1px;background:#8a9198"></div>
<div style="left:16px;top:344px;width:1px;height:14px;background:#8a9198"></div>
<svg style="position:absolute;left:0px;top:344px" width="33" height="14"><circle cx="8" cy="7" r="3" fill="#444"/><use href="#rm"/></svg>
<div style="left:0px;top:357px;width:33px;height:1px;background:#8a9198"></div>
<div class="fs" style="left:9px;top:451px;width:15px;height:73px;"></div>
<svg style="position:absolute;left:7px;top:364px" width="19" height="170"><use href="#ftk"/></svg>
<div style="left:15px;top:372px;width:2px;height:149px;background:#15171a"></div>
<div class="hl" style="left:9px;top:423px;width:15px;height:28px;"></div>
<div style="left:0px;top:533px;width:33px;height:14px;background:#b1b8bf;border-top:1px solid #7c838a"></div>
<div style="left:16px;top:533px;width:1px;height:14px;background:#8a9198"></div>
<svg style="position:absolute;left:0px;top:533px" width="33" height="14"><use href="#ms"/></svg>
<div style="left:0px;top:547px;width:33px;height:15px;background:#aab1b8;border-top:1px solid #222"></div>
<svg style="position:absolute;left:0px;top:548px" width="33" height="14"><use href="#ao"/></svg>
<div style="left:0px;top:562px;width:33px;height:15px;background:#5aa8a8"></div>
<div style="left:-6px;top:563px;font-size:10px;letter-spacing:-0.6px;color:#10303a;text-align:center;width:45px;overflow:hidden;line-height:13px;clip-path:inset(0 6px 0 6px)">Stereo3</div>
</div>
<div style="left:1479px;top:396px;width:33px;height:593px;overflow:hidden">
<div style="left:0px;top:0px;width:33px;height:3px;background:#5aa8a8"></div>
<div style="left:0px;top:4px;width:33px;height:255px;background:#1e2125;box-shadow:inset 1px 0 0 #16181b,inset -1px 0 0 #16181b"></div>
<svg style="position:absolute;left:0px;top:4px" width="33" height="255"><use href="#msc"/></svg>
<div style="left:0px;top:259px;width:33px;height:6px;background:#141619"></div>
<div style="left:1px;top:261px;width:15px;height:3px;background:#33383e"></div>
<div style="left:17px;top:261px;width:15px;height:3px;background:#33383e"></div>
<div class="il" style="left:0px;top:265px;width:33px;height:20px;"></div>
<div class="lt" style="left:3px;top:268px;color:#e8a030;width:30px">Impact</div>
<div style="left:0px;top:285px;width:33px;height:20px;background:#16181b"></div>
<div class="lt" style="left:3px;top:289px;color:#e8a030;width:30px">MainC</div>
<div style="left:0px;top:305px;width:33px;height:228px;background:#a9b0b8"></div>
<div class="pt" style="left:3px;top:313px;width:28px;height:3px;"></div>
<div class="ph" style="left:15px;top:308px;width:6px;height:12px;"></div>
<div class="vb" style="left:3px;top:325px;width:27px;height:14px;background:linear-gradient(#bcc3ca,#a6adb4);border:1px solid #7c838a"></div>
<div class="vt" style="left:3px;top:326px;width:27px;">0dB</div>
<div style="left:0px;top:343px;width:33px;height:1px;background:#8a9198"></div>
<div style="left:16px;top:344px;width:1px;height:14px;background:#8a9198"></div>
<svg style="position:absolute;left:0px;top:344px" width="33" height="14"><circle cx="8" cy="7" r="3" fill="#444"/><use href="#rm"/></svg>
<div style="left:0px;top:357px;width:33px;height:1px;background:#8a9198"></div>
<div class="fs" style="left:9px;top:422px;width:15px;height:102px;"></div>
<svg style="position:absolute;left:7px;top:364px" width="19" height="170"><use href="#ftk"/></svg>
<div style="left:15px;top:372px;width:2px;height:149px;background:#15171a"></div>
<div class="hl" style="left:9px;top:394px;width:15px;height:28px;"></div>
<div style="left:0px;top:533px;width:33px;height:14px;background:#b1b8bf;border-top:1px solid #7c838a"></div>
<div style="left:16px;top:533px;width:1px;height:14px;background:#8a9198"></div>
<svg style="position:absolute;left:0px;top:533px" width="33" height="14"><use href="#ms"/></svg>
<div style="left:0px;top:547px;width:33px;height:15px;background:#aab1b8;border-top:1px solid #222"></div>
<svg style="position:absolute;left:0px;top:548px" width="33" height="14"><use href="#ao"/></svg>
<div style="left:0px;top:562px;width:33px;height:15px;background:#5aa8a8"></div>
<div style="left:-6px;top:563px;font-size:10px;letter-spacing:-0.6px;color:#10303a;text-align:center;width:45px;overflow:hidden;line-height:13px;clip-path:inset(0 6px 0 6px)">Stereo4</div>
</div>
<div style="left:1513px;top:396px;width:33px;height:593px;overflow:hidden">
<div style="left:0px;top:0px;width:33px;height:3px;background:#5aa8a8"></div>
<div style="left:0px;top:4px;width:33px;height:255px;background:#1e2125;box-shadow:inset 1px 0 0 #16181b,inset -1px 0 0 #16181b"></div>
<svg style="position:absolute;left:0px;top:4px" width="33" height="255"><use href="#msc"/></svg>
<div style="left:0px;top:259px;width:33px;height:6px;background:#141619"></div>
<div style="left:1px;top:261px;width:15px;height:3px;background:#4a8ec0"></div>
<div style="left:17px;top:261px;width:15px;height:3px;background:#33383e"></div>
<div class="il" style="left:0px;top:265px;width:33px;height:20px;"></div>
<div class="lt" style="left:3px;top:268px;color:#e8a030;width:30px">Impact</div>
<div style="left:0px;top:285px;width:33px;height:20px;background:#16181b"></div>
<div class="lt" style="left:3px;top:289px;color:#e8a030;width:30px">MainC</div>
<div style="left:0px;top:305px;width:33px;height:228px;background:#a9b0b8"></div>
<div class="pt" style="left:3px;top:313px;width:28px;height:3px;"></div>
<div class="ph" style="left:15px;top:308px;width:6px;height:12px;"></div>
<div class="vb" style="left:3px;top:325px;width:27px;height:14px;background:linear-gradient(#bcc3ca,#a6adb4);border:1px solid #7c838a"></div>
<div class="vt" style="left:3px;top:326px;width:27px;">0dB</div>
<div style="left:0px;top:343px;width:33px;height:1px;background:#8a9198"></div>
<div style="left:16px;top:344px;width:1px;height:14px;background:#8a9198"></div>
<svg style="position:absolute;left:0px;top:344px" width="33" height="14"><circle cx="8" cy="7" r="3" fill="#444"/><use href="#rm"/></svg>
<div style="left:0px;top:357px;width:33px;height:1px;background:#8a9198"></div>
<div class="fs" style="left:9px;top:422px;width:15px;height:102px;"></div>
<svg style="position:absolute;left:7px;top:364px" width="19" height="170"><use href="#ftk"/></svg>
<div style="left:15px;top:372px;width:2px;height:149px;background:#15171a"></div>
<div class="hl" style="left:9px;top:394px;width:15px;height:28px;"></div>
<div style="left:0px;top:533px;width:33px;height:14px;background:#b1b8bf;border-top:1px solid #7c838a"></div>
<div style="left:16px;top:533px;width:1px;height:14px;background:#8a9198"></div>
<svg style="position:absolute;left:0px;top:533px" width="33" height="14"><use href="#ms"/></svg>
<div style="left:0px;top:547px;width:33px;height:15px;background:#aab1b8;border-top:1px solid #222"></div>
<svg style="position:absolute;left:0px;top:548px" width="33" height="14"><use href="#ao"/></svg>
<div style="left:0px;top:562px;width:33px;height:15px;background:#5aa8a8"></div>
<div style="left:-6px;top:563px;font-size:10px;letter-spacing:-0.6px;color:#10303a;text-align:center;width:45px;overflow:hidden;line-height:13px;clip-path:inset(0 6px 0 6px)">Stereo5</div>
</div>
<div style="left:1547px;top:396px;width:28px;height:593px;overflow:hidden">
<div style="left:0px;top:0px;width:28px;height:3px;background:#90c0f8"></div>
<div style="left:0px;top:4px;width:28px;height:255px;background:#1e2125;box-shadow:inset 1px 0 0 #16181b,inset -1px 0 0 #16181b"></div>
<svg style="position:absolute;left:0px;top:4px" width="28" height="255"><use href="#msc"/></svg>
<div style="left:0px;top:259px;width:28px;height:6px;background:#141619"></div>
<div style="left:1px;top:261px;width:15px;height:3px;background:#4a8ec0"></div>
<div style="left:17px;top:261px;width:15px;height:3px;background:#33383e"></div>
<div class="il" style="left:0px;top:265px;width:28px;height:20px;"></div>
<div class="lt" style="left:3px;top:268px;color:#e8a030;width:25px">Prence</div>
<div style="left:0px;top:285px;width:28px;height:20px;background:#16181b"></div>
<div class="lt" style="left:3px;top:289px;color:#e8a030;width:25px">MainC</div>
<div style="left:0px;top:305px;width:28px;height:228px;background:#a9b0b8"></div>
<div class="pt" style="left:3px;top:313px;width:28px;height:3px;"></div>
<div class="ph" style="left:15px;top:308px;width:6px;height:12px;"></div>
<div class="vb" style="left:3px;top:325px;width:27px;height:14px;background:linear-gradient(#bcc3ca,#a6adb4);border:1px solid #7c838a"></div>
<div class="vt" style="left:3px;top:326px;width:27px;">-9.8</div>
<div style="left:0px;top:343px;width:28px;height:1px;background:#8a9198"></div>
<div style="left:16px;top:344px;width:1px;height:14px;background:#8a9198"></div>
<svg style="position:absolute;left:0px;top:344px" width="33" height="14"><circle cx="8" cy="7" r="3" fill="#444"/><use href="#rm"/></svg>
<div style="left:0px;top:357px;width:28px;height:1px;background:#8a9198"></div>
<div class="fs" style="left:9px;top:456px;width:15px;height:68px;"></div>
<svg style="position:absolute;left:7px;top:364px" width="19" height="170"><use href="#ftk"/></svg>
<div style="left:15px;top:372px;width:2px;height:149px;background:#15171a"></div>
<div class="hl" style="left:9px;top:428px;width:15px;height:28px;"></div>
<div style="left:0px;top:533px;width:28px;height:14px;background:#b1b8bf;border-top:1px solid #7c838a"></div>
<div style="left:16px;top:533px;width:1px;height:14px;background:#8a9198"></div>
<svg style="position:absolute;left:0px;top:533px" width="33" height="14"><use href="#ms"/></svg>
<div style="left:0px;top:547px;width:28px;height:15px;background:#aab1b8;border-top:1px solid #222"></div>
<svg style="position:absolute;left:0px;top:548px" width="28" height="14"><use href="#ao"/></svg>
<div style="left:0px;top:562px;width:28px;height:15px;background:#90c0f8"></div>
<div style="left:-6px;top:563px;font-size:10px;letter-spacing:-0.6px;color:#10305a;text-align:center;width:40px;overflow:hidden;line-height:13px;clip-path:inset(0 6px 0 6px)">Prence</div>
</div>
<div style="left:1576px;top:396px;width:33px;height:3px;background:#ffffff"></div>
<div style="left:1576px;top:400px;width:33px;height:255px;background:#1b1d21"></div>
<svg style="position:absolute;left:1576px;top:400px" width="33" height="255"><rect x="2" y="4" width="12" height="1" fill="#2f74a8"/><text x="30" y="7.5" font-size="9" font-weight="bold" fill="#4f9ad0" text-anchor="end" font-family="Liberation Sans">6</text><rect x="2" y="12" width="12" height="1" fill="#2f74a8"/><text x="30" y="15.5" font-size="9" font-weight="bold" fill="#4f9ad0" text-anchor="end" font-family="Liberation Sans">3</text><rect x="2" y="23" width="12" height="1" fill="#2f74a8"/><text x="30" y="26.5" font-size="9" font-weight="bold" fill="#4f9ad0" text-anchor="end" font-family="Liberation Sans">0</text><rect x="2" y="35" width="12" height="1" fill="#2f74a8"/><text x="30" y="38.5" font-size="9" font-weight="bold" fill="#4f9ad0" text-anchor="end" font-family="Liberation Sans">-3</text><rect x="2" y="46" width="12" height="1" fill="#2f74a8"/><text x="30" y="49.5" font-size="9" font-weight="bold" fill="#4f9ad0" text-anchor="end" font-family="Liberation Sans">-6</text><rect x="2" y="58" width="12" height="1" fill="#2f74a8"/><text x="30" y="61.5" font-size="9" font-weight="bold" fill="#4f9ad0" text-anchor="end" font-family="Liberation Sans">-9</text><rect x="2" y="69" width="12" height="1" fill="#2f74a8"/><text x="30" y="72.5" font-size="9" font-weight="bold" fill="#4f9ad0" text-anchor="end" font-family="Liberation Sans">-12</text><rect x="2" y="115" width="12" height="1" fill="#2f74a8"/><text x="30" y="118.5" font-size="9" font-weight="bold" fill="#4f9ad0" text-anchor="end" font-family="Liberation Sans">-24</text><rect x="2" y="161" width="12" height="1" fill="#2f74a8"/><text x="30" y="164.5" font-size="9" font-weight="bold" fill="#4f9ad0" text-anchor="end" font-family="Liberation Sans">-36</text><rect x="2" y="207" width="12" height="1" fill="#2f74a8"/><text x="30" y="210.5" font-size="9" font-weight="bold" fill="#4f9ad0" text-anchor="end" font-family="Liberation Sans">-48</text><rect x="2" y="250" width="12" height="1" fill="#2f74a8"/><text x="30" y="253.5" font-size="9" font-weight="bold" fill="#4f9ad0" text-anchor="end" font-family="Liberation Sans">-60</text></svg>
<div class="mb" style="left:1578px;top:446px;width:6px;height:208px;"></div>
<div class="mb" style="left:1585px;top:450px;width:6px;height:204px;"></div>
<div style="left:1578px;top:470px;width:6px;height:2px;background:#fff"></div>
<div style="left:1585px;top:464px;width:6px;height:2px;background:#fff"></div>
<div style="left:1576px;top:655px;width:33px;height:6px;background:#24272b"></div>
<div style="left:1577px;top:657px;width:15px;height:3px;background:#3f8cc0"></div>
<div style="left:1576px;top:661px;width:33px;height:20px;background:#202327"></div>
<div style="left:1579px;top:664px;font-size:10px;font-weight:bold;color:#e8eef4;width:30px;overflow:hidden">1-22(2</div>
<div style="left:1576px;top:681px;width:33px;height:20px;background:#2a2d31"></div>
<div style="left:1576px;top:701px;width:33px;height:228px;background:#a9b0b8"></div>
<div style="left:1576px;top:701px;width:16px;height:16px;background:linear-gradient(#b8e8fa,#80c8ec)"></div>
<div style="left:1593px;top:701px;width:16px;height:16px;background:linear-gradient(#c8cdd2,#aab1b8);border-left:1px solid #7c838a"></div>
<div style="left:1579px;top:721px;width:27px;height:14px;background:linear-gradient(#bcc3ca,#a6adb4);border:1px solid #7c838a;border-radius:2px"></div>
<div style="left:1579px;top:722px;width:27px;font-size:10px;color:#1e1a3a;text-align:center;line-height:12px">0dB</div>
<div style="left:1576px;top:739px;width:33px;height:15px;background:#a3aab2;border-top:1px solid #8a9198"></div>
<svg style="position:absolute;left:1576px;top:701px" width="33" height="16"><path d="M3 12 L8 4 L11 9 L13 5 L14 12Z" fill="#1a70b0"/><path d="M25 3 L25 13 M20 6 L30 6" stroke="#444" stroke-width="1.5"/></svg>
<svg style="position:absolute;left:1585px;top:742px" width="16" height="10"><circle cx="5" cy="5" r="4" fill="#444"/><circle cx="11" cy="5" r="3.5" fill="none" stroke="#444" stroke-width="1.2"/></svg>
<svg style="position:absolute;left:1583px;top:760px" width="19" height="170"><rect x="4" y="24" width="4" height="1" fill="#7a8088"/><rect x="11" y="24" width="4" height="1" fill="#7a8088"/><rect x="4" y="44" width="4" height="1" fill="#7a8088"/><rect x="11" y="44" width="4" height="1" fill="#7a8088"/><rect x="4" y="64" width="4" height="1" fill="#7a8088"/><rect x="11" y="64" width="4" height="1" fill="#7a8088"/><rect x="4" y="82" width="4" height="1" fill="#7a8088"/><rect x="11" y="82" width="4" height="1" fill="#7a8088"/><rect x="4" y="102" width="4" height="1" fill="#7a8088"/><rect x="11" y="102" width="4" height="1" fill="#7a8088"/><rect x="4" y="136" width="4" height="1" fill="#7a8088"/><rect x="11" y="136" width="4" height="1" fill="#7a8088"/></svg>
<div style="left:1585px;top:818px;width:15px;height:102px;background:#7b858c;border-radius:0 0 3px 3px"></div>
<svg style="position:absolute;left:1583px;top:760px" width="19" height="170"><use href="#ftk"/></svg>
<div style="left:1591px;top:768px;width:2px;height:149px;background:#15171a"></div>
<div style="left:1585px;top:790px;width:15px;height:28px;background:linear-gradient(#3a4048,#1e2226 45%,#2a3036 55%,#15181b);border:1px solid #0a0c0e"></div>
<div style="left:1576px;top:929px;width:33px;height:14px;background:#b1b8bf"></div>
<div style="left:1592px;top:929px;width:1px;height:14px;background:#8a9198"></div>
<svg style="position:absolute;left:1576px;top:929px" width="33" height="14"><use href="#ms"/></svg>
<div style="left:1576px;top:943px;width:33px;height:15px;background:#aab1b8;border-top:1px solid #222"></div>
<svg style="position:absolute;left:1576px;top:944px" width="33" height="14"><use href="#ao"/></svg>
<div style="left:1576px;top:958px;width:33px;height:15px;background:#ffffff"></div>
<div style="left:1576px;top:959px;font-size:10px;color:#202020;text-align:center;width:33px;overflow:hidden;line-height:13px">MainOut</div>
<div style="left:1576px;top:973px;width:33px;height:16px;background:#a9b0b8;border-top:1px solid #666"></div>
<div style="left:221px;top:973px;width:1354px;height:16px;background:#a3aab1;border-top:1px solid #5a6067"></div>
<svg style="position:absolute;left:225px;top:977px" width="8" height="9"><path d="M7 0 L0 4.5 L7 9Z" fill="#333"/></svg>
<div style="left:244px;top:975px;width:1236px;height:12px;background:linear-gradient(#e2e6ea,#b8bec5);border:1px solid #7c838a;border-radius:3px"></div>
<div style="left:1480px;top:975px;width:77px;height:12px;background:#6f767e"></div>
<svg style="position:absolute;left:1561px;top:977px" width="8" height="9"><path d="M0 0 L7 4.5 L0 9Z" fill="#333"/></svg>
<div style="left:1609px;top:396px;width:1px;height:593px;background:#2a2e34"></div>
<div style="left:0px;top:396px;width:164px;height:593px;background:#a9b0b8"></div>
<div style="left:0px;top:396px;width:164px;height:9px;background:linear-gradient(#b9bfc6,#a9b0b7)"></div>
<svg style="position:absolute;left:58px;top:399px" width="48" height="4"><rect x="0" y="0" width="1" height="1" fill="#555"/><rect x="0" y="2" width="1" height="1" fill="#555"/><rect x="3" y="0" width="1" height="1" fill="#555"/><rect x="3" y="2" width="1" height="1" fill="#555"/><rect x="6" y="0" width="1" height="1" fill="#555"/><rect x="6" y="2" width="1" height="1" fill="#555"/><rect x="9" y="0" width="1" height="1" fill="#555"/><rect x="9" y="2" width="1" height="1" fill="#555"/><rect x="12" y="0" width="1" height="1" fill="#555"/><rect x="12" y="2" width="1" height="1" fill="#555"/><rect x="15" y="0" width="1" height="1" fill="#555"/><rect x="15" y="2" width="1" height="1" fill="#555"/><rect x="18" y="0" width="1" height="1" fill="#555"/><rect x="18" y="2" width="1" height="1" fill="#555"/><rect x="21" y="0" width="1" height="1" fill="#555"/><rect x="21" y="2" width="1" height="1" fill="#555"/><rect x="24" y="0" width="1" height="1" fill="#555"/><rect x="24" y="2" width="1" height="1" fill="#555"/><rect x="27" y="0" width="1" height="1" fill="#555"/><rect x="27" y="2" width="1" height="1" fill="#555"/><rect x="30" y="0" width="1" height="1" fill="#555"/><rect x="30" y="2" width="1" height="1" fill="#555"/><rect x="33" y="0" width="1" height="1" fill="#555"/><rect x="33" y="2" width="1" height="1" fill="#555"/><rect x="36" y="0" width="1" height="1" fill="#555"/><rect x="36" y="2" width="1" height="1" fill="#555"/><rect x="39" y="0" width="1" height="1" fill="#555"/><rect x="39" y="2" width="1" height="1" fill="#555"/><rect x="42" y="0" width="1" height="1" fill="#555"/><rect x="42" y="2" width="1" height="1" fill="#555"/><rect x="45" y="0" width="1" height="1" fill="#555"/><rect x="45" y="2" width="1" height="1" fill="#555"/></svg>
<div style="left:0px;top:405px;width:163px;height:22px;background:#1d2025"></div>
<div style="left:81px;top:405px;width:2px;height:22px;background:#0d0f11"></div>
<div style="left:0px;top:409px;width:82px;font-size:11px;font-weight:bold;color:#e4e8ec;text-align:center">Input L+R</div>
<div style="left:83px;top:409px;width:80px;font-size:11px;font-weight:bold;color:#e4e8ec;text-align:center">Drums</div>
<div style="left:2px;top:430px;width:40px;height:327px;background:linear-gradient(90deg,#b8bec5,#a3aab1);border-radius:2px"></div>
<div style="left:3px;top:433px;font-size:9px;letter-spacing:-0.3px;color:#2a2040">&lt;C&gt; -14.6</div>
<div style="left:2px;top:456px;width:38px;height:3px;background:#33321f;border-radius:2px"></div>
<div style="left:19px;top:450px;width:6px;height:12px;background:linear-gradient(90deg,#f4f4f4,#c8c8c8);border-radius:2px;box-shadow:1px 1px 1px #555"></div>
<div style="left:5px;top:468px;width:13px;height:284px;background:#17191c"></div>
<div style="left:5px;top:498px;width:13px;height:1px;background:#2a4a60"></div>
<div style="left:5px;top:525px;width:13px;height:1px;background:#2a4a60"></div>
<div style="left:5px;top:565px;width:13px;height:1px;background:#2a4a60"></div>
<div style="left:5px;top:610px;width:13px;height:1px;background:#2a4a60"></div>
<div style="left:5px;top:650px;width:13px;height:1px;background:#2a4a60"></div>
<svg style="position:absolute;left:6px;top:660px" width="13" height="92"><rect x="0" y="0" width="5" height="2" fill="#4c94c4"/><rect x="7" y="0" width="5" height="2" fill="#4c94c4"/><rect x="0" y="3" width="5" height="2" fill="#4c94c4"/><rect x="7" y="3" width="5" height="2" fill="#4c94c4"/><rect x="0" y="6" width="5" height="2" fill="#4c94c4"/><rect x="7" y="6" width="5" height="2" fill="#4c94c4"/><rect x="0" y="9" width="5" height="2" fill="#4c94c4"/><rect x="7" y="9" width="5" height="2" fill="#4c94c4"/><rect x="0" y="12" width="5" height="2" fill="#4c94c4"/><rect x="7" y="12" width="5" height="2" fill="#4c94c4"/><rect x="0" y="15" width="5" height="2" fill="#4c94c4"/><rect x="7" y="15" width="5" height="2" fill="#4c94c4"/><rect x="0" y="18" width="5" height="2" fill="#4c94c4"/><rect x="7" y="18" width="5" height="2" fill="#4c94c4"/><rect x="0" y="21" width="5" height="2" fill="#4c94c4"/><rect x="7" y="21" width="5" height="2" fill="#4c94c4"/><rect x="0" y="24" width="5" height="2" fill="#4c94c4"/><rect x="7" y="24" width="5" height="2" fill="#4c94c4"/><rect x="0" y="27" width="5" height="2" fill="#4c94c4"/><rect x="7" y="27" width="5" height="2" fill="#4c94c4"/><rect x="0" y="30" width="5" height="2" fill="#4c94c4"/><rect x="7" y="30" width="5" height="2" fill="#4c94c4"/><rect x="0" y="33" width="5" height="2" fill="#4c94c4"/><rect x="7" y="33" width="5" height="2" fill="#4c94c4"/><rect x="0" y="36" width="5" height="2" fill="#4c94c4"/><rect x="7" y="36" width="5" height="2" fill="#4c94c4"/><rect x="0" y="39" width="5" height="2" fill="#4c94c4"/><rect x="7" y="39" width="5" height="2" fill="#4c94c4"/><rect x="0" y="42" width="5" height="2" fill="#4c94c4"/><rect x="7" y="42" width="5" height="2" fill="#4c94c4"/><rect x="0" y="45" width="5" height="2" fill="#4c94c4"/><rect x="7" y="45" width="5" height="2" fill="#4c94c4"/><rect x="0" y="48" width="5" height="2" fill="#4c94c4"/><rect x="7" y="48" width="5" height="2" fill="#4c94c4"/><rect x="0" y="51" width="5" height="2" fill="#4c94c4"/><rect x="7" y="51" width="5" height="2" fill="#4c94c4"/><rect x="0" y="54" width="5" height="2" fill="#4c94c4"/><rect x="7" y="54" width="5" height="2" fill="#4c94c4"/><rect x="0" y="57" width="5" height="2" fill="#4c94c4"/><rect x="7" y="57" width="5" height="2" fill="#4c94c4"/><rect x="0" y="60" width="5" height="2" fill="#4c94c4"/><rect x="7" y="60" width="5" height="2" fill="#4c94c4"/><rect x="0" y="63" width="5" height="2" fill="#4c94c4"/><rect x="7" y="63" width="5" height="2" fill="#4c94c4"/><rect x="0" y="66" width="5" height="2" fill="#4c94c4"/><rect x="7" y="66" width="5" height="2" fill="#4c94c4"/><rect x="0" y="69" width="5" height="2" fill="#4c94c4"/><rect x="7" y="69" width="5" height="2" fill="#4c94c4"/><rect x="0" y="72" width="5" height="2" fill="#4c94c4"/><rect x="7" y="72" width="5" height="2" fill="#4c94c4"/><rect x="0" y="75" width="5" height="2" fill="#4c94c4"/><rect x="7" y="75" width="5" height="2" fill="#4c94c4"/><rect x="0" y="78" width="5" height="2" fill="#4c94c4"/><rect x="7" y="78" width="5" height="2" fill="#4c94c4"/><rect x="0" y="81" width="5" height="2" fill="#4c94c4"/><rect x="7" y="81" width="5" height="2" fill="#4c94c4"/><rect x="0" y="84" width="5" height="2" fill="#4c94c4"/><rect x="7" y="84" width="5" height="2" fill="#4c94c4"/><rect x="0" y="87" width="5" height="2" fill="#4c94c4"/><rect x="7" y="87" width="5" height="2" fill="#4c94c4"/><rect x="0" y="90" width="5" height="2" fill="#4c94c4"/><rect x="7" y="90" width="5" height="2" fill="#4c94c4"/></svg>
<div style="left:29px;top:485px;width:2px;height:247px;background:#1a1c1f"></div>
<div style="left:22px;top:602px;width:16px;height:28px;background:repeating-linear-gradient(#f6f6f6 0px,#e0e0e0 2px,#a8aeb4 3px,#f0f0f0 4px);border:1px solid #5c636a;box-shadow:1px 1px 2px rgba(0,0,0,.5)"></div>
<div style="left:45px;top:432px;width:21px;height:15px;background:linear-gradient(#c0c6cc,#a9b0b7);border:1px solid #7c838a"></div>
<div style="left:66px;top:432px;width:22px;height:15px;background:linear-gradient(#c0c6cc,#a9b0b7);border:1px solid #7c838a"></div>
<div style="left:90px;top:432px;width:22px;height:15px;background:linear-gradient(#c0c6cc,#a9b0b7);border:1px solid #7c838a"></div>
<div style="left:112px;top:432px;width:22px;height:15px;background:linear-gradient(#c0c6cc,#a9b0b7);border:1px solid #7c838a"></div>
<div style="left:136px;top:432px;width:26px;height:15px;background:linear-gradient(#c0c6cc,#a9b0b7);border:1px solid #7c838a"></div>
<svg style="position:absolute;left:45px;top:432px" width="118" height="15"><path d="M7 11 V5 H14 V11 M10.5 5 V11" stroke="#333" stroke-width="1.3" fill="none"/><path d="M34 5 H28 V8 H34 V11 H28" stroke="#333" stroke-width="1.3" fill="none"/><circle cx="56" cy="7.5" r="3" fill="#333"/><path d="M74 5 L76 5 L78 3 L78 12 L76 10 L74 10Z" fill="#333"/><circle cx="102" cy="7.5" r="3.2" fill="#333"/><circle cx="108" cy="7.5" r="3" fill="none" stroke="#333" stroke-width="1.2"/></svg>
<div style="left:45px;top:451px;width:116px;height:307px;background:#14171a"></div>
<div style="left:46px;top:452px;width:114px;height:19px;background:linear-gradient(#b8bec5,#a3aab1)"></div>
<div style="left:50px;top:453px;font-size:10px;font-weight:bold;color:#222">インサート</div>
<svg style="position:absolute;left:117px;top:457px" width="44" height="12"><path d="M2 3 L8 3 L5 7Z" fill="#333"/><path d="M18 6 L26 6 M22 2 L22 10" stroke="#222" stroke-width="2"/><circle cx="37" cy="6" r="5" fill="#3aa0e0"/><path d="M37 2 L37 6" stroke="#fff" stroke-width="1.2"/><path d="M34.5 3.5 A3.5 3.5 0 1 0 39.5 3.5" stroke="#fff" stroke-width="1" fill="none"/></svg>
<div style="left:46px;top:472px;width:114px;height:17px;background:#1e2126"></div>
<svg style="position:absolute;left:49px;top:476px" width="8" height="6"><path d="M0 0 L7 0 L3.5 5Z" fill="#ddd"/></svg>
<div style="left:57px;top:473px;font-size:11px;font-weight:bold;color:#f0f2f4">Pro EQ</div>
<svg style="position:absolute;left:144px;top:474px" width="12" height="12"><circle cx="6" cy="6" r="5" fill="#1a3a60"/><path d="M6 2 L6 6" stroke="#6ac0f0" stroke-width="1.3"/><path d="M3.5 3.5 A3.5 3.5 0 1 0 8.5 3.5" stroke="#6ac0f0" stroke-width="1.2" fill="none"/></svg>
<div style="left:46px;top:490px;width:114px;height:132px;background:linear-gradient(90deg,#6c727a,#7a8088 20%,#757b83)"></div>
<div style="left:46px;top:623px;width:114px;height:20px;background:linear-gradient(#b8bec5,#a3aab1)"></div>
<div style="left:50px;top:624px;font-size:10px;font-weight:bold;color:#222">センド</div>
<svg style="position:absolute;left:139px;top:627px" width="10" height="10"><path d="M1 5 L9 5 M5 1 L5 9" stroke="#333" stroke-width="2"/></svg>
<div style="left:46px;top:644px;width:114px;height:113px;background:linear-gradient(90deg,#6c727a,#7a8088 20%,#757b83)"></div>
<div style="left:163px;top:396px;width:1px;height:593px;background:#3a3e44"></div>
<div style="left:0px;top:760px;width:163px;height:1px;background:#4a4f55"></div>
<div style="left:0px;top:761px;width:163px;height:10px;background:linear-gradient(#bac0c7,#a9b0b7)"></div>
<svg style="position:absolute;left:58px;top:764px" width="48" height="4"><rect x="0" y="0" width="1" height="1" fill="#555"/><rect x="0" y="2" width="1" height="1" fill="#555"/><rect x="3" y="0" width="1" height="1" fill="#555"/><rect x="3" y="2" width="1" height="1" fill="#555"/><rect x="6" y="0" width="1" height="1" fill="#555"/><rect x="6" y="2" width="1" height="1" fill="#555"/><rect x="9" y="0" width="1" height="1" fill="#555"/><rect x="9" y="2" width="1" height="1" fill="#555"/><rect x="12" y="0" width="1" height="1" fill="#555"/><rect x="12" y="2" width="1" height="1" fill="#555"/><rect x="15" y="0" width="1" height="1" fill="#555"/><rect x="15" y="2" width="1" height="1" fill="#555"/><rect x="18" y="0" width="1" height="1" fill="#555"/><rect x="18" y="2" width="1" height="1" fill="#555"/><rect x="21" y="0" width="1" height="1" fill="#555"/><rect x="21" y="2" width="1" height="1" fill="#555"/><rect x="24" y="0" width="1" height="1" fill="#555"/><rect x="24" y="2" width="1" height="1" fill="#555"/><rect x="27" y="0" width="1" height="1" fill="#555"/><rect x="27" y="2" width="1" height="1" fill="#555"/><rect x="30" y="0" width="1" height="1" fill="#555"/><rect x="30" y="2" width="1" height="1" fill="#555"/><rect x="33" y="0" width="1" height="1" fill="#555"/><rect x="33" y="2" width="1" height="1" fill="#555"/><rect x="36" y="0" width="1" height="1" fill="#555"/><rect x="36" y="2" width="1" height="1" fill="#555"/><rect x="39" y="0" width="1" height="1" fill="#555"/><rect x="39" y="2" width="1" height="1" fill="#555"/><rect x="42" y="0" width="1" height="1" fill="#555"/><rect x="42" y="2" width="1" height="1" fill="#555"/><rect x="45" y="0" width="1" height="1" fill="#555"/><rect x="45" y="2" width="1" height="1" fill="#555"/></svg>
<div style="left:0px;top:771px;width:163px;height:1px;background:#8a9198"></div>
<div style="left:0px;top:776px;width:163px;font-size:11px;color:#333;text-align:center">イベントが選択されていません</div>
<div style="left:0px;top:797px;width:163px;height:1px;background:#7a8188"></div>
<div style="left:1619px;top:86px;width:301px;height:904px;background:#252a33"></div>
<div style="left:1696px;top:122px;font-size:12px;font-weight:bold;color:#f0f2f4">インストゥルメント</div>
<div style="left:1693px;top:139px;font-size:11px;color:#c8d0d8">インストールされているインストゥルメントを表示</div>
<svg style="position:absolute;left:1638px;top:123px" width="32" height="30"><defs><linearGradient id="gi" x1="0" y1="0" x2="0" y2="1"><stop offset="0" stop-color="#dfe6ee"/><stop offset="1" stop-color="#5a7088"/></linearGradient></defs><rect x="0" y="0" width="32" height="30" fill="url(#gi)" rx="2"/><rect x="2.0" y="1" width="1.2" height="28" fill="#3a4a5a"/><rect x="6.3" y="1" width="1.2" height="28" fill="#3a4a5a"/><rect x="10.6" y="1" width="1.2" height="28" fill="#3a4a5a"/><rect x="14.899999999999999" y="1" width="1.2" height="28" fill="#3a4a5a"/><rect x="19.2" y="1" width="1.2" height="28" fill="#3a4a5a"/><rect x="23.5" y="1" width="1.2" height="28" fill="#3a4a5a"/><rect x="27.799999999999997" y="1" width="1.2" height="28" fill="#3a4a5a"/><rect x="4.0" y="1" width="2.4" height="17" fill="#223"/><rect x="8.3" y="1" width="2.4" height="17" fill="#223"/><rect x="16.9" y="1" width="2.4" height="17" fill="#223"/><rect x="21.2" y="1" width="2.4" height="17" fill="#223"/><rect x="25.5" y="1" width="2.4" height="17" fill="#223"/></svg>
<div style="left:1693px;top:177px;font-size:12px;font-weight:bold;color:#f0f2f4">エフェクト</div>
<div style="left:1693px;top:194px;font-size:11px;color:#c8d0d8">インストールされているエフェクトを表示</div>
<svg style="position:absolute;left:1638px;top:177px" width="34" height="32"><defs><linearGradient id="gf" x1="0" y1="0" x2="0" y2="1"><stop offset="0" stop-color="#8aa8c0"/><stop offset="1" stop-color="#4a6a88"/></linearGradient></defs><rect x="1" y="1" width="32" height="30" rx="4" fill="url(#gf)" stroke="#2a3a4a"/><text x="5" y="22" font-size="15" font-weight="bold" fill="#e0e8f0" font-family="Liberation Sans">FX</text></svg>
<div style="left:1693px;top:232px;font-size:12px;font-weight:bold;color:#f0f2f4">サウンド</div>
<div style="left:1693px;top:249px;font-size:11px;color:#c8d0d8">Studio One サウンドセットをブラウズ</div>
<svg style="position:absolute;left:1638px;top:231px" width="36" height="32"><defs><linearGradient id="gs" x1="0" y1="0" x2="1" y2="1"><stop offset="0" stop-color="#8898b0"/><stop offset="0.4" stop-color="#d8dee6"/><stop offset="1" stop-color="#9aa6b8"/></linearGradient></defs><path d="M19 2 L2 6.5 L2 25 L19 29.6Z" fill="url(#gs)"/><path d="M19 2 L34 7 L34 25 L19 29.6Z" fill="#142a52"/><path d="M19 14 L34 14.5 L34 17 L25 17.5 L19 22Z" fill="#3a5478"/><path d="M2 14 L11 6 L13 5.5 L2 11Z" fill="#6a7c98"/><path d="M5 26 L19 13 L19 16 L8 27Z" fill="#4a6080"/><path d="M12 4 L14.5 11 L8 18 L2 20 L2 14Z" fill="#dfe4ea" opacity="0.6"/></svg>
<div style="left:1693px;top:287px;font-size:12px;font-weight:bold;color:#f0f2f4">ファイル</div>
<div style="left:1693px;top:304px;font-size:11px;color:#c8d0d8">ファイルとフォルダーをブラウズ</div>
<svg style="position:absolute;left:1638px;top:287px" width="34" height="32"><defs><linearGradient id="gd" x1="0" y1="0" x2="0" y2="1"><stop offset="0" stop-color="#f4f4f4"/><stop offset="1" stop-color="#b8bcc0"/></linearGradient></defs><path d="M1 3 L12 3 L14 6 L33 6 L33 30 L1 30Z" fill="url(#gd)"/><rect x="1" y="3" width="11" height="3" fill="#888"/></svg>
<div style="left:1693px;top:342px;font-size:12px;font-weight:bold;color:#f0f2f4">プール</div>
<div style="left:1693px;top:359px;font-size:11px;color:#c8d0d8">このソング内で使用されているファイルを表示</div>
<svg style="position:absolute;left:1638px;top:342px" width="34" height="32"><defs><linearGradient id="gp" x1="0" y1="0" x2="0" y2="1"><stop offset="0" stop-color="#a8bcd0"/><stop offset="1" stop-color="#4a6080"/></linearGradient></defs><rect x="1" y="1" width="32" height="30" rx="4" fill="url(#gp)"/><path d="M4 16 L9 16 L11 8 L14 24 L17 6 L20 24 L23 10 L25 16 L30 16" stroke="#1a2838" stroke-width="2" fill="none"/></svg>
<div style="left:1681px;top:895px;width:178px;height:22px;background:linear-gradient(#f2f4f6,#c4c9ce);border:1px solid #1a1d22;border-radius:3px"></div>
<div style="left:1681px;top:898px;width:178px;font-size:11px;color:#1a1a1a;text-align:center">プリセットの索引を再作成</div>
<div style="left:1681px;top:926px;width:178px;height:22px;background:linear-gradient(#f2f4f6,#c4c9ce);border:1px solid #1a1d22;border-radius:3px"></div>
<div style="left:1681px;top:929px;width:178px;font-size:11px;color:#1a1a1a;text-align:center">プラグインを更新</div>
<div style="left:1619px;top:966px;width:301px;height:24px;background:#3a4049"></div>
<div style="left:1620px;top:967px;width:23px;height:22px;background:linear-gradient(#a8dcf6,#6ab8e8)"></div>
<svg style="position:absolute;left:1624px;top:971px" width="15" height="13"><path d="M1 7 L7.5 1 L14 7 L12 7 L12 13 L9 13 L9 9 L6 9 L6 13 L3 13 L3 7Z" fill="#1a3a5a"/></svg>
<div style="left:1644px;top:967px;width:92px;height:22px;background:linear-gradient(#5a626c,#444b54);border-right:1px solid #2a2e34"></div>
<div style="left:1644px;top:970px;font-size:11px;color:#d8dde2;text-align:center;overflow:hidden;width:92px">インストゥルメント</div>
<div style="left:1737px;top:967px;width:56px;height:22px;background:linear-gradient(#5a626c,#444b54);border-right:1px solid #2a2e34"></div>
<div style="left:1737px;top:970px;font-size:11px;color:#d8dde2;text-align:center;overflow:hidden;width:56px">エフェクト</div>
<div style="left:1794px;top:967px;width:49px;height:22px;background:linear-gradient(#5a626c,#444b54);border-right:1px solid #2a2e34"></div>
<div style="left:1794px;top:970px;font-size:11px;color:#d8dde2;text-align:center;overflow:hidden;width:49px">サウンド</div>
<div style="left:1844px;top:967px;width:49px;height:22px;background:linear-gradient(#5a626c,#444b54);border-right:1px solid #2a2e34"></div>
<div style="left:1844px;top:970px;font-size:11px;color:#d8dde2;text-align:center;overflow:hidden;width:49px">ファイル</div>
<div style="left:1894px;top:967px;width:14px;height:22px;background:linear-gradient(#5a626c,#444b54);border-right:1px solid #2a2e34"></div>
<div style="left:1894px;top:970px;font-size:11px;color:#d8dde2;text-align:center;overflow:hidden;width:14px">ー.</div>
<div style="left:1908px;top:967px;width:12px;height:22px;background:#4a525c"></div>
<svg style="position:absolute;left:1909px;top:975px" width="9" height="5"><path d="M0 0H8L4 5Z" fill="#ccc"/></svg>
<svg style="position:absolute;left:1612px;top:515px" width="6" height="48"><rect x="1" y="0" width="1" height="1" fill="#555"/><rect x="4" y="0" width="1" height="1" fill="#555"/><rect x="1" y="3" width="1" height="1" fill="#555"/><rect x="4" y="3" width="1" height="1" fill="#555"/><rect x="1" y="6" width="1" height="1" fill="#555"/><rect x="4" y="6" width="1" height="1" fill="#555"/><rect x="1" y="9" width="1" height="1" fill="#555"/><rect x="4" y="9" width="1" height="1" fill="#555"/><rect x="1" y="12" width="1" height="1" fill="#555"/><rect x="4" y="12" width="1" height="1" fill="#555"/><rect x="1" y="15" width="1" height="1" fill="#555"/><rect x="4" y="15" width="1" height="1" fill="#555"/><rect x="1" y="18" width="1" height="1" fill="#555"/><rect x="4" y="18" width="1" height="1" fill="#555"/><rect x="1" y="21" width="1" height="1" fill="#555"/><rect x="4" y="21" width="1" height="1" fill="#555"/><rect x="1" y="24" width="1" height="1" fill="#555"/><rect x="4" y="24" width="1" height="1" fill="#555"/><rect x="1" y="27" width="1" height="1" fill="#555"/><rect x="4" y="27" width="1" height="1" fill="#555"/><rect x="1" y="30" width="1" height="1" fill="#555"/><rect x="4" y="30" width="1" height="1" fill="#555"/><rect x="1" y="33" width="1" height="1" fill="#555"/><rect x="4" y="33" width="1" height="1" fill="#555"/><rect x="1" y="36" width="1" height="1" fill="#555"/><rect x="4" y="36" width="1" height="1" fill="#555"/><rect x="1" y="39" width="1" height="1" fill="#555"/><rect x="4" y="39" width="1" height="1" fill="#555"/><rect x="1" y="42" width="1" height="1" fill="#555"/><rect x="4" y="42" width="1" height="1" fill="#555"/><rect x="1" y="45" width="1" height="1" fill="#555"/><rect x="4" y="45" width="1" height="1" fill="#555"/></svg>
<div style="left:0px;top:989px;width:1920px;height:50px;background:linear-gradient(#c2c8d0,#b0b7bf 55%,#8f969f)"></div>
<div style="left:0px;top:989px;width:1920px;height:1px;background:#4a4f55"></div>
<div style="left:186px;top:990px;width:6px;height:48px;background:linear-gradient(90deg,rgba(0,0,0,0),rgba(0,0,0,.22))"></div>
<div style="left:192px;top:990px;width:2px;height:48px;background:rgba(255,255,255,.35)"></div>
<div style="left:198px;top:995px;width:1361px;height:38px;background:linear-gradient(#1d2024,#0f1113);border:1px solid #050607"></div>
<svg style="position:absolute;left:238px;top:1000px" width="30" height="18"><path d="M2 6 L5 9 L2 12Z" fill="#6a7078"/><circle cx="15" cy="9" r="7" fill="none" stroke="#7a8088" stroke-width="1.3"/><circle cx="15" cy="13" r="1" fill="#7a8088"/><path d="M26 6 L29 9 L26 12Z" fill="#6a7078"/></svg>
<div style="left:243px;top:1018px;font-size:10px;color:#c8ccd0">MIDI</div>
<div style="left:275px;top:1003px;width:61px;height:5px;background:#3a3f46"></div>
<div style="left:275px;top:1003px;width:6px;height:5px;background:#5aace0"></div>
<div style="left:275px;top:1010px;width:61px;height:5px;background:#3a3f46"></div>
<div style="left:278px;top:1017px;font-size:10px;color:#c8ccd0">パフォーマンス</div>
<svg style="position:absolute;left:340px;top:1005px" width="20" height="20"><circle cx="18.0" cy="10.0" r="1" fill="#4a5058"/><circle cx="16.9" cy="14.0" r="1" fill="#4a5058"/><circle cx="14.0" cy="16.9" r="1" fill="#4a5058"/><circle cx="10.0" cy="18.0" r="1" fill="#4a5058"/><circle cx="6.0" cy="16.9" r="1" fill="#4a5058"/><circle cx="3.1" cy="14.0" r="1" fill="#4a5058"/><circle cx="2.0" cy="10.0" r="1" fill="#4a5058"/><circle cx="3.1" cy="6.0" r="1" fill="#4a5058"/><circle cx="6.0" cy="3.1" r="1" fill="#4a5058"/><circle cx="10.0" cy="2.0" r="1" fill="#4a5058"/><circle cx="14.0" cy="3.1" r="1" fill="#4a5058"/><circle cx="16.9" cy="6.0" r="1" fill="#4a5058"/></svg>
<div style="left:372px;top:1000px;font-size:12px;font-weight:bold;color:#e8ecf0">44.1 kHz</div>
<div style="left:377px;top:1014px;font-size:12px;font-weight:bold;color:#e8ecf0">5.5 ms</div>
<div style="left:451px;top:1000px;font-size:12px;color:#e8ecf0">3:11 日</div>
<div style="left:441px;top:1015px;font-size:10px;color:#c8ccd0">最大録音時間</div>
<div style="left:536px;top:1001px;font-size:12px;color:#e0e4e8;letter-spacing:0.5px">00:01:21.669</div>
<div style="left:565px;top:1018px;font-size:9px;color:#c8ccd0">秒</div>
<div style="left:656px;top:997px;font-size:20px;font-weight:bold;color:#eef0f2;letter-spacing:1px">00:01:21.669</div>
<div style="left:709px;top:1018px;font-size:9px;color:#c8ccd0">秒</div>
<div style="left:805px;top:1003px;width:22px;height:22px;background:#1c1f23"></div>
<div style="left:830px;top:1003px;width:24px;height:22px;background:#1c1f23"></div>
<div style="left:857px;top:1003px;width:24px;height:22px;background:#1c1f23"></div>
<div style="left:883px;top:1003px;width:22px;height:22px;background:#1c1f23"></div>
<div style="left:910px;top:1003px;width:24px;height:22px;background:#1c1f23"></div>
<svg style="position:absolute;left:805px;top:1003px" width="130" height="22"><path d="M15 6 L8 11 L15 16Z" fill="#6e7e8c"/><path d="M29 11 L36 5.5 L36 16.5Z M36 11 L43 5.5 L43 16.5Z" fill="#6e7e8c"/><path d="M56 5.5 L63 11 L56 16.5Z M63 5.5 L70 11 L63 16.5Z" fill="#6e7e8c"/><path d="M84 6 L92 11 L84 16Z" fill="#6e7e8c"/><rect x="112" y="5.5" width="1.6" height="10" fill="#6e7e8c"/><path d="M122 5.5 L114 10.5 L122 15.5Z" fill="#6e7e8c"/></svg>
<div style="left:944px;top:1000px;width:33px;height:30px;background:#1c1f23"></div>
<div style="left:954px;top:1008px;width:14px;height:14px;background:#6e7e8c"></div>
<div style="left:979px;top:1000px;width:33px;height:30px;background:#1c1f23"></div>
<svg style="position:absolute;left:987px;top:1006px" width="16" height="18"><path d="M2 1 L15 9 L2 17Z" fill="#5ee83a"/></svg>
<div style="left:1013px;top:1000px;width:33px;height:30px;background:#1c1f23"></div>
<svg style="position:absolute;left:1020px;top:1007px" width="18" height="18"><circle cx="9" cy="9" r="7" fill="#6a7a88"/></svg>
<div style="left:1047px;top:1000px;width:40px;height:30px;background:#1c1f23"></div>
<svg style="position:absolute;left:1052px;top:1006px" width="30" height="18"><path d="M13 15 H9 A6 6 0 0 1 9 3 H15 L11 12" stroke="#38b8e8" stroke-width="2.6" fill="none"/><path d="M17 3 H21 A6 6 0 0 1 21 15 H15 L19 6" stroke="#38b8e8" stroke-width="2.6" fill="none"/></svg>
<div style="left:1101px;top:1002px;width:16px;height:13px;background:#24282d"></div>
<div style="left:1101px;top:1002px;width:16px;font-size:9px;color:#6a7078;text-align:center">L</div>
<div style="left:1101px;top:1016px;width:16px;height:13px;background:#24282d"></div>
<div style="left:1101px;top:1016px;width:16px;font-size:9px;color:#6a7078;text-align:center">R</div>
<div style="left:1136px;top:999px;font-size:12px;font-weight:bold;color:#e0e4e8;letter-spacing:0.3px">00:00:00.000</div>
<div style="left:1136px;top:1014px;font-size:12px;font-weight:bold;color:#e0e4e8;letter-spacing:0.3px">00:06:13.333</div>
<svg style="position:absolute;left:1226px;top:1000px" width="80" height="18"><path d="M2 9 L8 9 M4 5 L4 13" stroke="#6a7078" stroke-width="1"/><rect x="8" y="6" width="7" height="6" fill="#6a7078"/><circle cx="27" cy="9" r="6" fill="#6a7078"/><path d="M41 4 L48 12 M41 6 L44 3 L46 5 L43 8" stroke="#6a7078" stroke-width="2" fill="none"/><path d="M57 15 L62 4 L67 15Z" fill="#6a7078"/></svg>
<div style="left:1249px;top:1016px;font-size:10px;color:#c8ccd0">メトロノーム</div>
<svg style="position:absolute;left:1226px;top:1016px" width="22" height="10"><path d="M0 5 L22 5 M6 1 L6 9 M16 1 L16 9" stroke="#6a7078" stroke-width="1"/><rect x="8" y="3" width="6" height="4" fill="#6a7078"/></svg>
<div style="left:1305px;top:999px;font-size:12px;font-weight:bold;color:#e0e4e8">4 &nbsp;/ &nbsp;4</div>
<div style="left:1315px;top:1016px;font-size:10px;color:#c8ccd0">拍子</div>
<div style="left:1363px;top:999px;font-size:12px;font-weight:bold;color:#e0e4e8">90.00</div>
<div style="left:1365px;top:1016px;font-size:10px;color:#c8ccd0">テンポ</div>
<div style="left:1416px;top:1003px;width:56px;height:4px;background:#4ab0e8"></div>
<div style="left:1472px;top:1003px;width:12px;height:4px;background:#3a3f46"></div>
<div style="left:1484px;top:1003px;width:20px;height:8px;background:#2a1a1c"></div>
<div style="left:1416px;top:1009px;width:53px;height:4px;background:#4ab0e8"></div>
<div style="left:1469px;top:1009px;width:15px;height:4px;background:#3a3f46"></div>
<svg style="position:absolute;left:1416px;top:1017px" width="70" height="10"><rect x="0" y="0" width="1.2" height="9" fill="#4ab0e8"/><rect x="2" y="0" width="1.2" height="9" fill="#4ab0e8"/><rect x="4" y="0" width="1.2" height="9" fill="#4ab0e8"/><rect x="6" y="0" width="1.2" height="9" fill="#4ab0e8"/><rect x="8" y="0" width="1.2" height="9" fill="#4ab0e8"/><rect x="10" y="0" width="1.2" height="9" fill="#4ab0e8"/><rect x="12" y="0" width="1.2" height="9" fill="#4ab0e8"/><rect x="14" y="0" width="1.2" height="9" fill="#4ab0e8"/><rect x="16" y="0" width="1.2" height="9" fill="#4ab0e8"/><rect x="18" y="0" width="1.2" height="9" fill="#4ab0e8"/><rect x="20" y="0" width="1.2" height="9" fill="#4ab0e8"/><rect x="22" y="0" width="1.2" height="9" fill="#4ab0e8"/><rect x="24" y="0" width="1.2" height="9" fill="#4ab0e8"/><rect x="26" y="0" width="1.2" height="9" fill="#4ab0e8"/><rect x="28" y="0" width="1.2" height="9" fill="#4ab0e8"/><rect x="30" y="0" width="1.2" height="9" fill="#4ab0e8"/><rect x="32" y="0" width="1.2" height="9" fill="#4ab0e8"/><rect x="34" y="0" width="1.2" height="9" fill="#4ab0e8"/><rect x="36" y="0" width="1.2" height="9" fill="#4ab0e8"/><rect x="38" y="0" width="1.2" height="9" fill="#4ab0e8"/><rect x="40" y="0" width="1.2" height="9" fill="#4ab0e8"/><rect x="42" y="0" width="1.2" height="9" fill="#4ab0e8"/><rect x="44" y="0" width="1.2" height="9" fill="#4ab0e8"/><rect x="46" y="0" width="1.2" height="9" fill="#4ab0e8"/><rect x="48" y="0" width="1.2" height="9" fill="#4ab0e8"/><rect x="50" y="0" width="1.2" height="9" fill="#555a60"/><rect x="52" y="0" width="1.2" height="9" fill="#555a60"/><rect x="54" y="0" width="1.2" height="9" fill="#555a60"/><rect x="56" y="0" width="1.2" height="9" fill="#555a60"/><rect x="58" y="0" width="1.2" height="9" fill="#555a60"/><rect x="60" y="0" width="1.2" height="9" fill="#555a60"/><rect x="62" y="0" width="1.2" height="9" fill="#555a60"/><rect x="64" y="0" width="1.2" height="9" fill="#555a60"/></svg>
<svg style="position:absolute;left:1486px;top:1017px" width="16" height="10"><circle cx="5" cy="5" r="4" fill="#4a90c0"/><circle cx="11" cy="5" r="3.5" fill="none" stroke="#4a90c0" stroke-width="1.3"/></svg>
<svg style="position:absolute;left:1540px;top:998px" width="10" height="10"><path d="M1 9 L6 4 M4 2 L8 6" stroke="#c8ccd0" stroke-width="1.6"/></svg>
<div style="left:1559px;top:990px;width:6px;height:48px;background:linear-gradient(90deg,rgba(0,0,0,.2),rgba(0,0,0,0))"></div>
<div style="left:1762px;top:997px;width:149px;height:36px;background:linear-gradient(#c8cdd2,#aeb4bb);border:1px solid #7a8088;border-radius:2px"></div>
<div style="left:1805px;top:998px;width:105px;height:34px;background:linear-gradient(#a8e6fc,#88d0f8)"></div>
<div style="left:1762px;top:1006px;width:43px;font-size:12px;font-weight:bold;color:#333;text-align:center">編集</div>
<div style="left:1807px;top:1006px;width:46px;font-size:12px;font-weight:bold;color:#15406a;text-align:center;overflow:hidden">ミックス</div>
<div style="left:1856px;top:1006px;width:50px;font-size:12px;font-weight:bold;color:#15406a;text-align:center;overflow:hidden">ブラウズ</div>
<div style="left:0px;top:1038px;width:1920px;height:1px;background:#1a1c1f"></div>
<div style="left:0px;top:1039px;width:1920px;height:9px;background:linear-gradient(90deg,#c8923c 0px,#c8923c 380px,#d08a30 400px,#cc8830 930px,#a88040 945px,#a88040 1055px,#c8a870 1065px,#c8a870 1695px,#d8a030 1725px,#dca030 1920px)"></div>
<div style="left:122px;top:1040px;width:54px;height:8px;background:#d8b070;border:1px solid #b08040"></div>
<div style="left:184px;top:1040px;width:58px;height:8px;background:#d8b070;border:1px solid #b08040"></div>
<div style="left:246px;top:1040px;width:58px;height:8px;background:#d8b070;border:1px solid #b08040"></div>
<div style="left:308px;top:1040px;width:58px;height:8px;background:#d8b070;border:1px solid #b08040"></div>
<svg style="position:absolute;left:80px;top:1040px" width="30" height="8"><path d="M2 8 Q10 0 22 4" stroke="#3a90d0" stroke-width="3" fill="none"/><path d="M4 8 Q12 2 24 6" stroke="#e8c020" stroke-width="2" fill="none"/></svg>
<div style="left:205px;top:1043px;width:14px;height:5px;background:#e04030;border-radius:7px 7px 0 0"></div>
<div style="left:261px;top:1042px;width:28px;height:6px;background:#40c0e0;border:1px solid #222"></div>
<div style="left:322px;top:1042px;width:30px;height:6px;background:#505860"></div></body></html>
